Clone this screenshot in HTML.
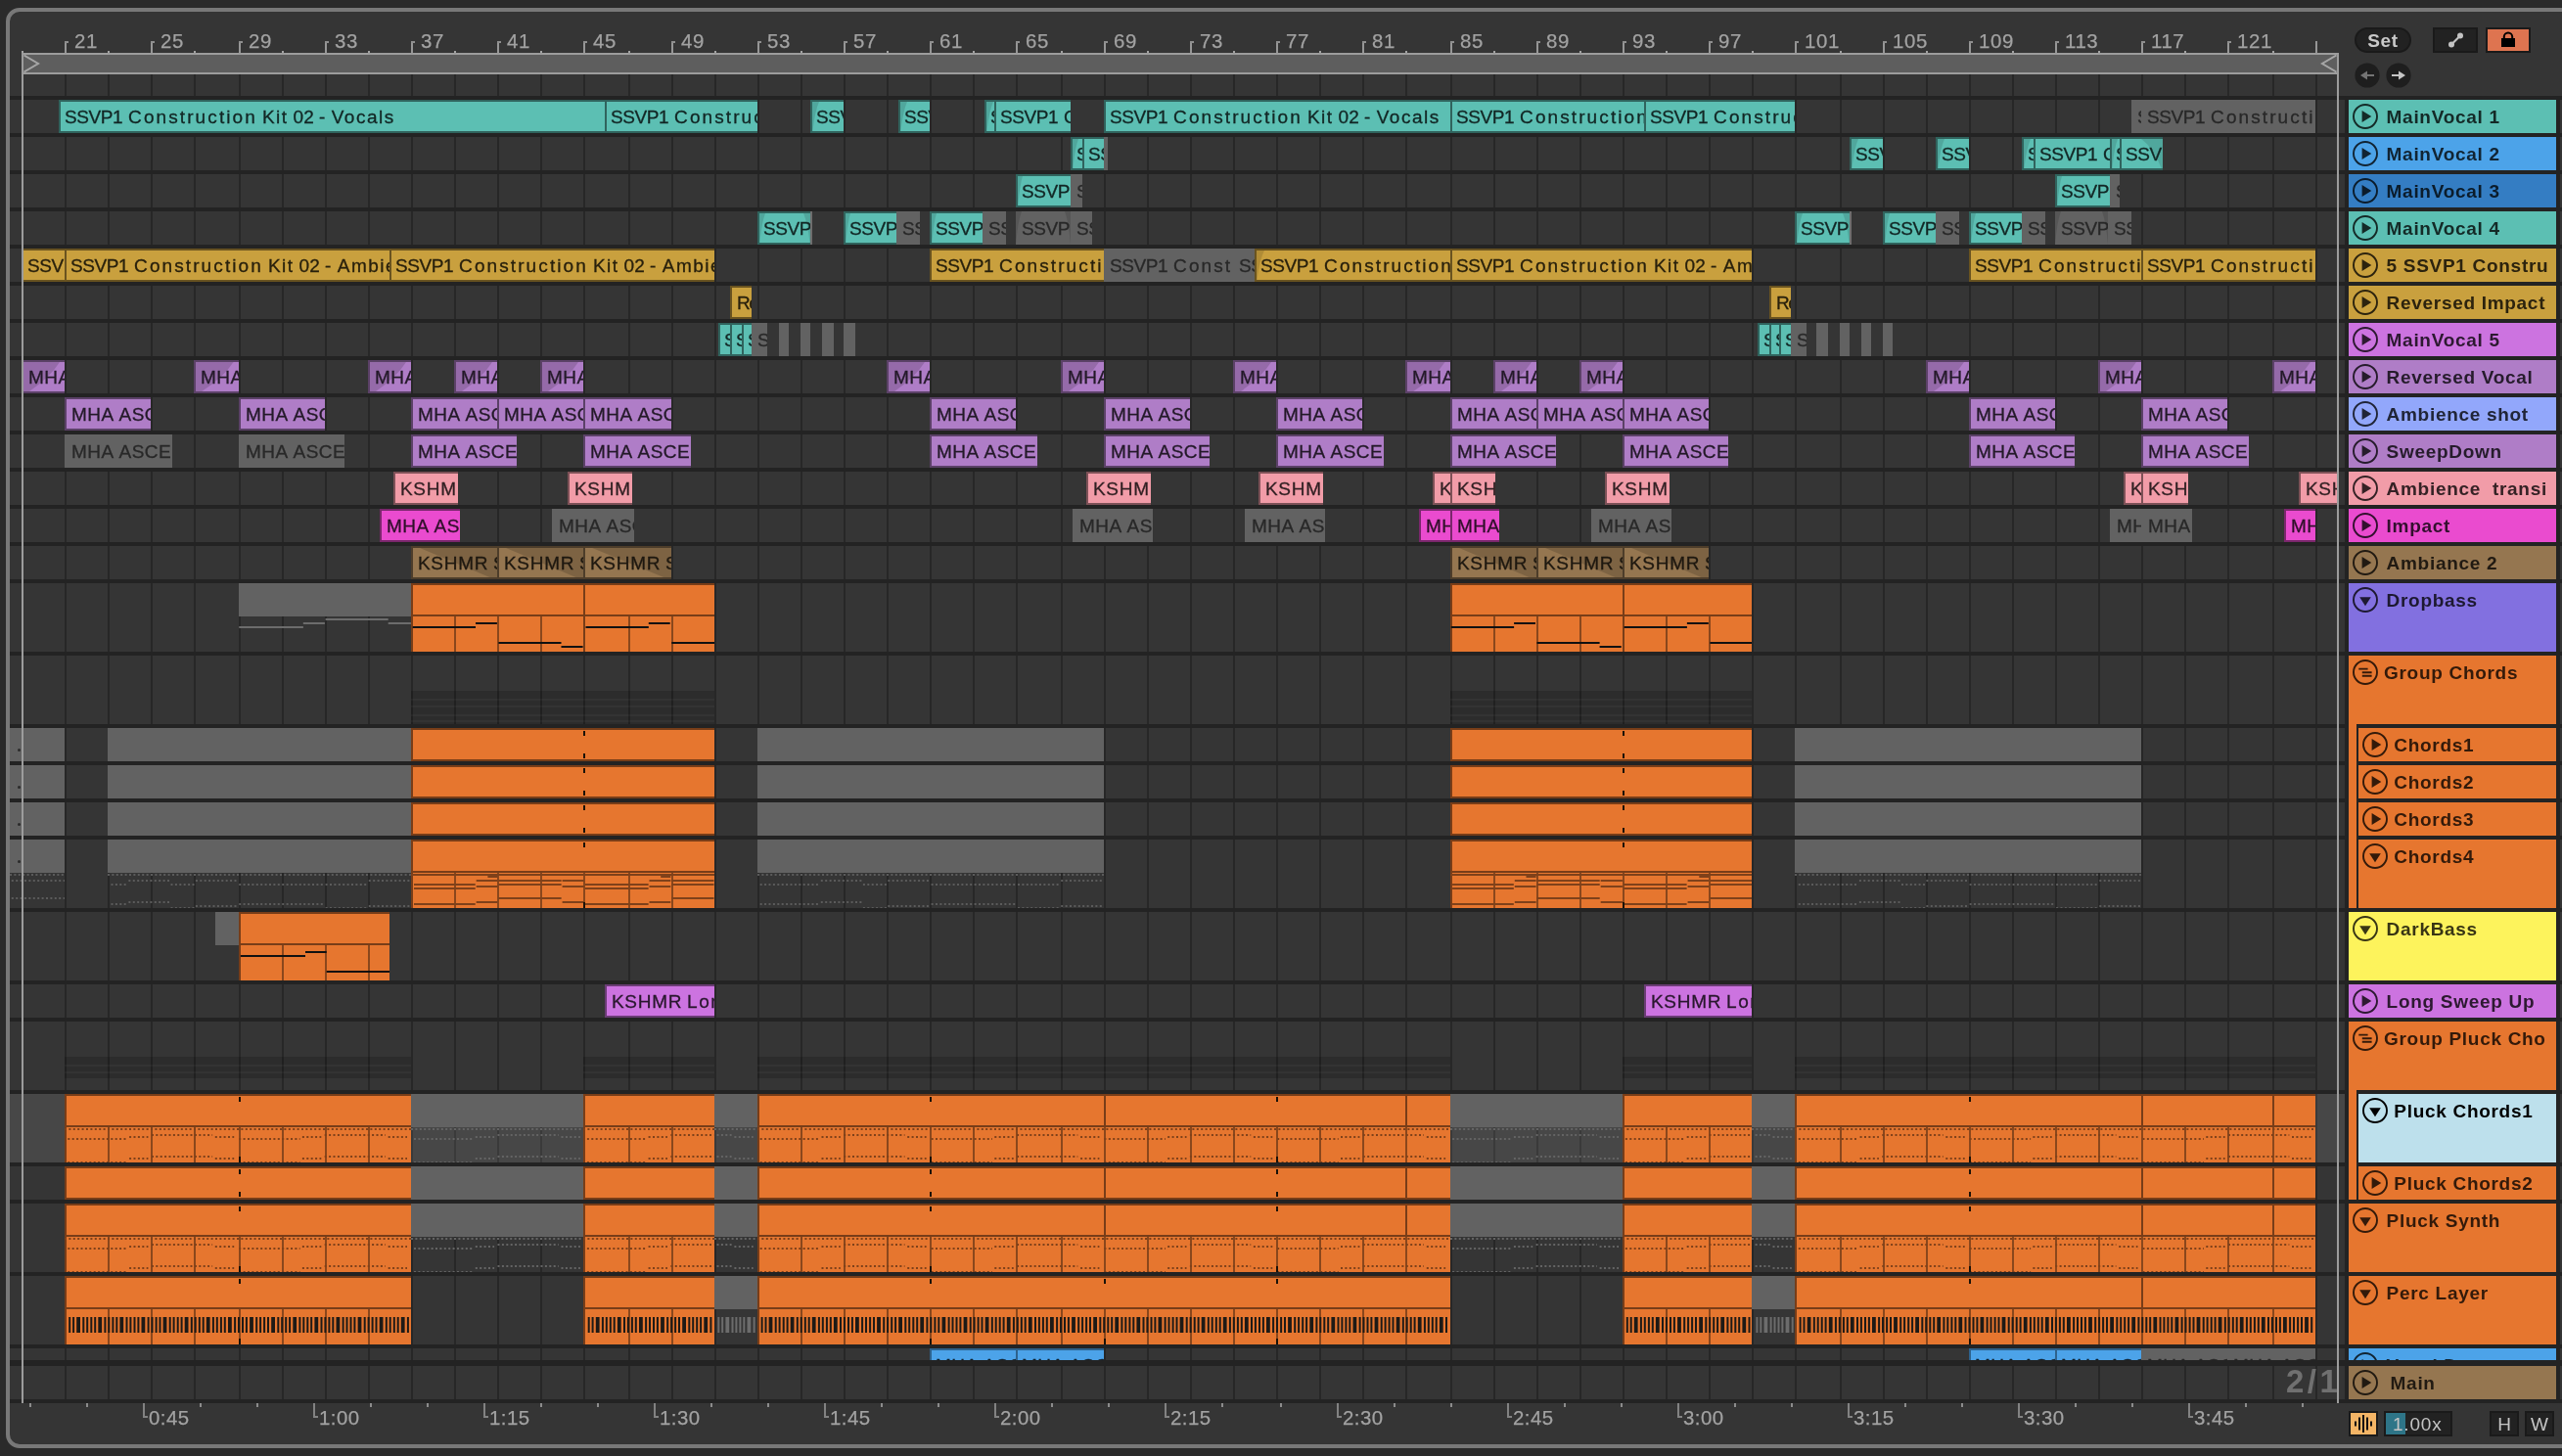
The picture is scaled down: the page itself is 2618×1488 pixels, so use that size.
<!DOCTYPE html>
<html><head><meta charset="utf-8"><title>Arrangement</title><style>
html,body{margin:0;padding:0;background:#2a2a2a;}
body{width:2618px;height:1488px;position:relative;overflow:hidden;font-family:"Liberation Sans",sans-serif;font-size:19px;}
body div,body span,body svg{position:absolute;box-sizing:border-box;}
#root{left:0;top:0;width:2618px;height:1488px;will-change:transform;}
#panel{left:6px;top:8px;width:2700px;height:1472px;border:4px solid #787878;border-radius:14px;background:#353535;}
.c{overflow:hidden;white-space:pre;z-index:2;}
.c span{top:0;font-size:19px;-webkit-text-stroke:0.3px currentColor;}
i{font-style:normal;position:static;}
.fd{top:0;}
.rl{color:#a2a2a2;font-size:20.4px;line-height:22px;letter-spacing:.6px;white-space:pre;-webkit-text-stroke:0.25px currentColor;}
.h{overflow:hidden;white-space:pre;font-weight:700;z-index:3;}
.h span{top:0;line-height:35px;letter-spacing:.7px;font-size:19px;}
.btn{background:#222222;border:2px solid #1a1a1a;overflow:hidden;z-index:3;}
.btn span{left:0;top:0;width:100%;text-align:center;line-height:23px;font-size:19px;}
</style></head><body>
<div id="root">
<div id="panel"></div>
<div style="left:66.0px;top:76.0px;width:2.0px;height:1354.0px;background:#272727;"></div>
<div style="left:110.0px;top:76.0px;width:2.0px;height:1354.0px;background:#272727;"></div>
<div style="left:154.0px;top:76.0px;width:2.0px;height:1354.0px;background:#272727;"></div>
<div style="left:198.0px;top:76.0px;width:2.0px;height:1354.0px;background:#272727;"></div>
<div style="left:244.0px;top:76.0px;width:2.0px;height:1354.0px;background:#272727;"></div>
<div style="left:288.0px;top:76.0px;width:2.0px;height:1354.0px;background:#272727;"></div>
<div style="left:332.0px;top:76.0px;width:2.0px;height:1354.0px;background:#272727;"></div>
<div style="left:376.0px;top:76.0px;width:2.0px;height:1354.0px;background:#272727;"></div>
<div style="left:420.0px;top:76.0px;width:2.0px;height:1354.0px;background:#272727;"></div>
<div style="left:464.0px;top:76.0px;width:2.0px;height:1354.0px;background:#272727;"></div>
<div style="left:508.0px;top:76.0px;width:2.0px;height:1354.0px;background:#272727;"></div>
<div style="left:552.0px;top:76.0px;width:2.0px;height:1354.0px;background:#272727;"></div>
<div style="left:596.0px;top:76.0px;width:2.0px;height:1354.0px;background:#272727;"></div>
<div style="left:642.0px;top:76.0px;width:2.0px;height:1354.0px;background:#272727;"></div>
<div style="left:686.0px;top:76.0px;width:2.0px;height:1354.0px;background:#272727;"></div>
<div style="left:730.0px;top:76.0px;width:2.0px;height:1354.0px;background:#272727;"></div>
<div style="left:774.0px;top:76.0px;width:2.0px;height:1354.0px;background:#272727;"></div>
<div style="left:818.0px;top:76.0px;width:2.0px;height:1354.0px;background:#272727;"></div>
<div style="left:862.0px;top:76.0px;width:2.0px;height:1354.0px;background:#272727;"></div>
<div style="left:906.0px;top:76.0px;width:2.0px;height:1354.0px;background:#272727;"></div>
<div style="left:950.0px;top:76.0px;width:2.0px;height:1354.0px;background:#272727;"></div>
<div style="left:994.0px;top:76.0px;width:2.0px;height:1354.0px;background:#272727;"></div>
<div style="left:1038.0px;top:76.0px;width:2.0px;height:1354.0px;background:#272727;"></div>
<div style="left:1084.0px;top:76.0px;width:2.0px;height:1354.0px;background:#272727;"></div>
<div style="left:1128.0px;top:76.0px;width:2.0px;height:1354.0px;background:#272727;"></div>
<div style="left:1172.0px;top:76.0px;width:2.0px;height:1354.0px;background:#272727;"></div>
<div style="left:1216.0px;top:76.0px;width:2.0px;height:1354.0px;background:#272727;"></div>
<div style="left:1260.0px;top:76.0px;width:2.0px;height:1354.0px;background:#272727;"></div>
<div style="left:1304.0px;top:76.0px;width:2.0px;height:1354.0px;background:#272727;"></div>
<div style="left:1348.0px;top:76.0px;width:2.0px;height:1354.0px;background:#272727;"></div>
<div style="left:1392.0px;top:76.0px;width:2.0px;height:1354.0px;background:#272727;"></div>
<div style="left:1436.0px;top:76.0px;width:2.0px;height:1354.0px;background:#272727;"></div>
<div style="left:1482.0px;top:76.0px;width:2.0px;height:1354.0px;background:#272727;"></div>
<div style="left:1526.0px;top:76.0px;width:2.0px;height:1354.0px;background:#272727;"></div>
<div style="left:1570.0px;top:76.0px;width:2.0px;height:1354.0px;background:#272727;"></div>
<div style="left:1614.0px;top:76.0px;width:2.0px;height:1354.0px;background:#272727;"></div>
<div style="left:1658.0px;top:76.0px;width:2.0px;height:1354.0px;background:#272727;"></div>
<div style="left:1702.0px;top:76.0px;width:2.0px;height:1354.0px;background:#272727;"></div>
<div style="left:1746.0px;top:76.0px;width:2.0px;height:1354.0px;background:#272727;"></div>
<div style="left:1790.0px;top:76.0px;width:2.0px;height:1354.0px;background:#272727;"></div>
<div style="left:1834.0px;top:76.0px;width:2.0px;height:1354.0px;background:#272727;"></div>
<div style="left:1880.0px;top:76.0px;width:2.0px;height:1354.0px;background:#272727;"></div>
<div style="left:1924.0px;top:76.0px;width:2.0px;height:1354.0px;background:#272727;"></div>
<div style="left:1968.0px;top:76.0px;width:2.0px;height:1354.0px;background:#272727;"></div>
<div style="left:2012.0px;top:76.0px;width:2.0px;height:1354.0px;background:#272727;"></div>
<div style="left:2056.0px;top:76.0px;width:2.0px;height:1354.0px;background:#272727;"></div>
<div style="left:2100.0px;top:76.0px;width:2.0px;height:1354.0px;background:#272727;"></div>
<div style="left:2144.0px;top:76.0px;width:2.0px;height:1354.0px;background:#272727;"></div>
<div style="left:2188.0px;top:76.0px;width:2.0px;height:1354.0px;background:#272727;"></div>
<div style="left:2232.0px;top:76.0px;width:2.0px;height:1354.0px;background:#272727;"></div>
<div style="left:2276.0px;top:76.0px;width:2.0px;height:1354.0px;background:#272727;"></div>
<div style="left:2322.0px;top:76.0px;width:2.0px;height:1354.0px;background:#272727;"></div>
<div style="left:2366.0px;top:76.0px;width:2.0px;height:1354.0px;background:#272727;"></div>
<div style="left:10.0px;top:1118.0px;width:2386.0px;height:70.0px;background:#474747;"></div>
<div style="left:66.0px;top:1118.0px;width:2.0px;height:70.0px;background:#3a3a3a;"></div>
<div style="left:110.0px;top:1118.0px;width:2.0px;height:70.0px;background:#3a3a3a;"></div>
<div style="left:154.0px;top:1118.0px;width:2.0px;height:70.0px;background:#3a3a3a;"></div>
<div style="left:198.0px;top:1118.0px;width:2.0px;height:70.0px;background:#3a3a3a;"></div>
<div style="left:244.0px;top:1118.0px;width:2.0px;height:70.0px;background:#3a3a3a;"></div>
<div style="left:288.0px;top:1118.0px;width:2.0px;height:70.0px;background:#3a3a3a;"></div>
<div style="left:332.0px;top:1118.0px;width:2.0px;height:70.0px;background:#3a3a3a;"></div>
<div style="left:376.0px;top:1118.0px;width:2.0px;height:70.0px;background:#3a3a3a;"></div>
<div style="left:420.0px;top:1118.0px;width:2.0px;height:70.0px;background:#3a3a3a;"></div>
<div style="left:464.0px;top:1118.0px;width:2.0px;height:70.0px;background:#3a3a3a;"></div>
<div style="left:508.0px;top:1118.0px;width:2.0px;height:70.0px;background:#3a3a3a;"></div>
<div style="left:552.0px;top:1118.0px;width:2.0px;height:70.0px;background:#3a3a3a;"></div>
<div style="left:596.0px;top:1118.0px;width:2.0px;height:70.0px;background:#3a3a3a;"></div>
<div style="left:642.0px;top:1118.0px;width:2.0px;height:70.0px;background:#3a3a3a;"></div>
<div style="left:686.0px;top:1118.0px;width:2.0px;height:70.0px;background:#3a3a3a;"></div>
<div style="left:730.0px;top:1118.0px;width:2.0px;height:70.0px;background:#3a3a3a;"></div>
<div style="left:774.0px;top:1118.0px;width:2.0px;height:70.0px;background:#3a3a3a;"></div>
<div style="left:818.0px;top:1118.0px;width:2.0px;height:70.0px;background:#3a3a3a;"></div>
<div style="left:862.0px;top:1118.0px;width:2.0px;height:70.0px;background:#3a3a3a;"></div>
<div style="left:906.0px;top:1118.0px;width:2.0px;height:70.0px;background:#3a3a3a;"></div>
<div style="left:950.0px;top:1118.0px;width:2.0px;height:70.0px;background:#3a3a3a;"></div>
<div style="left:994.0px;top:1118.0px;width:2.0px;height:70.0px;background:#3a3a3a;"></div>
<div style="left:1038.0px;top:1118.0px;width:2.0px;height:70.0px;background:#3a3a3a;"></div>
<div style="left:1084.0px;top:1118.0px;width:2.0px;height:70.0px;background:#3a3a3a;"></div>
<div style="left:1128.0px;top:1118.0px;width:2.0px;height:70.0px;background:#3a3a3a;"></div>
<div style="left:1172.0px;top:1118.0px;width:2.0px;height:70.0px;background:#3a3a3a;"></div>
<div style="left:1216.0px;top:1118.0px;width:2.0px;height:70.0px;background:#3a3a3a;"></div>
<div style="left:1260.0px;top:1118.0px;width:2.0px;height:70.0px;background:#3a3a3a;"></div>
<div style="left:1304.0px;top:1118.0px;width:2.0px;height:70.0px;background:#3a3a3a;"></div>
<div style="left:1348.0px;top:1118.0px;width:2.0px;height:70.0px;background:#3a3a3a;"></div>
<div style="left:1392.0px;top:1118.0px;width:2.0px;height:70.0px;background:#3a3a3a;"></div>
<div style="left:1436.0px;top:1118.0px;width:2.0px;height:70.0px;background:#3a3a3a;"></div>
<div style="left:1482.0px;top:1118.0px;width:2.0px;height:70.0px;background:#3a3a3a;"></div>
<div style="left:1526.0px;top:1118.0px;width:2.0px;height:70.0px;background:#3a3a3a;"></div>
<div style="left:1570.0px;top:1118.0px;width:2.0px;height:70.0px;background:#3a3a3a;"></div>
<div style="left:1614.0px;top:1118.0px;width:2.0px;height:70.0px;background:#3a3a3a;"></div>
<div style="left:1658.0px;top:1118.0px;width:2.0px;height:70.0px;background:#3a3a3a;"></div>
<div style="left:1702.0px;top:1118.0px;width:2.0px;height:70.0px;background:#3a3a3a;"></div>
<div style="left:1746.0px;top:1118.0px;width:2.0px;height:70.0px;background:#3a3a3a;"></div>
<div style="left:1790.0px;top:1118.0px;width:2.0px;height:70.0px;background:#3a3a3a;"></div>
<div style="left:1834.0px;top:1118.0px;width:2.0px;height:70.0px;background:#3a3a3a;"></div>
<div style="left:1880.0px;top:1118.0px;width:2.0px;height:70.0px;background:#3a3a3a;"></div>
<div style="left:1924.0px;top:1118.0px;width:2.0px;height:70.0px;background:#3a3a3a;"></div>
<div style="left:1968.0px;top:1118.0px;width:2.0px;height:70.0px;background:#3a3a3a;"></div>
<div style="left:2012.0px;top:1118.0px;width:2.0px;height:70.0px;background:#3a3a3a;"></div>
<div style="left:2056.0px;top:1118.0px;width:2.0px;height:70.0px;background:#3a3a3a;"></div>
<div style="left:2100.0px;top:1118.0px;width:2.0px;height:70.0px;background:#3a3a3a;"></div>
<div style="left:2144.0px;top:1118.0px;width:2.0px;height:70.0px;background:#3a3a3a;"></div>
<div style="left:2188.0px;top:1118.0px;width:2.0px;height:70.0px;background:#3a3a3a;"></div>
<div style="left:2232.0px;top:1118.0px;width:2.0px;height:70.0px;background:#3a3a3a;"></div>
<div style="left:2276.0px;top:1118.0px;width:2.0px;height:70.0px;background:#3a3a3a;"></div>
<div style="left:2322.0px;top:1118.0px;width:2.0px;height:70.0px;background:#3a3a3a;"></div>
<div style="left:2366.0px;top:1118.0px;width:2.0px;height:70.0px;background:#3a3a3a;"></div>
<div style="left:10.0px;top:98.0px;width:2608.0px;height:4.0px;background:#232323;"></div>
<div style="left:10.0px;top:136.0px;width:2608.0px;height:4.0px;background:#232323;"></div>
<div style="left:10.0px;top:174.0px;width:2608.0px;height:4.0px;background:#232323;"></div>
<div style="left:10.0px;top:212.0px;width:2608.0px;height:4.0px;background:#232323;"></div>
<div style="left:10.0px;top:250.0px;width:2608.0px;height:4.0px;background:#232323;"></div>
<div style="left:10.0px;top:288.0px;width:2608.0px;height:4.0px;background:#232323;"></div>
<div style="left:10.0px;top:326.0px;width:2608.0px;height:4.0px;background:#232323;"></div>
<div style="left:10.0px;top:364.0px;width:2608.0px;height:4.0px;background:#232323;"></div>
<div style="left:10.0px;top:402.0px;width:2608.0px;height:4.0px;background:#232323;"></div>
<div style="left:10.0px;top:440.0px;width:2608.0px;height:4.0px;background:#232323;"></div>
<div style="left:10.0px;top:478.0px;width:2608.0px;height:4.0px;background:#232323;"></div>
<div style="left:10.0px;top:516.0px;width:2608.0px;height:4.0px;background:#232323;"></div>
<div style="left:10.0px;top:554.0px;width:2608.0px;height:4.0px;background:#232323;"></div>
<div style="left:10.0px;top:592.0px;width:2608.0px;height:4.0px;background:#232323;"></div>
<div style="left:10.0px;top:666.0px;width:2608.0px;height:4.0px;background:#232323;"></div>
<div style="left:10.0px;top:740.0px;width:2608.0px;height:4.0px;background:#232323;"></div>
<div style="left:10.0px;top:778.0px;width:2608.0px;height:4.0px;background:#232323;"></div>
<div style="left:10.0px;top:816.0px;width:2608.0px;height:4.0px;background:#232323;"></div>
<div style="left:10.0px;top:854.0px;width:2608.0px;height:4.0px;background:#232323;"></div>
<div style="left:10.0px;top:928.0px;width:2608.0px;height:4.0px;background:#232323;"></div>
<div style="left:10.0px;top:1002.0px;width:2608.0px;height:4.0px;background:#232323;"></div>
<div style="left:10.0px;top:1040.0px;width:2608.0px;height:4.0px;background:#232323;"></div>
<div style="left:10.0px;top:1114.0px;width:2608.0px;height:4.0px;background:#232323;"></div>
<div style="left:10.0px;top:1188.0px;width:2608.0px;height:4.0px;background:#232323;"></div>
<div style="left:10.0px;top:1226.0px;width:2608.0px;height:4.0px;background:#232323;"></div>
<div style="left:10.0px;top:1300.0px;width:2608.0px;height:4.0px;background:#232323;"></div>
<div style="left:10.0px;top:1374.0px;width:2608.0px;height:4.0px;background:#232323;"></div>
<div style="left:10.0px;top:1390.0px;width:2608.0px;height:6.0px;background:#232323;"></div>
<div style="left:10.0px;top:1430.0px;width:2608.0px;height:4.0px;background:#232323;"></div>
<div style="left:2396.0px;top:98.0px;width:4.0px;height:1336.0px;background:#232323;"></div>
<div style="left:2612.0px;top:98.0px;width:4.0px;height:1336.0px;background:#232323;"></div>
<div style="left:2390.0px;top:76.0px;width:6.0px;height:22.0px;background:#353535;"></div>
<div class="c" style="left:60px;top:102px;width:558px;height:34px;background:#5cbfb3;border-style:solid;border-color:#30635d;border-width:2px 0px 2px 2px;"><span style="left:4px;line-height:31px;color:#122624"><i style="letter-spacing:-0.45px">SSVP</i><i style="letter-spacing:0.6px">1</i><i style="letter-spacing:-0.3px"> </i><i style="letter-spacing:2.1px">Construction</i><i style="letter-spacing:-0.3px"> </i><i style="letter-spacing:1.5px">Kit</i><i style="letter-spacing:-0.3px"> </i><i style="letter-spacing:0.1px">02</i><i style="letter-spacing:-0.3px"> </i><i style="letter-spacing:1.5px">-</i><i style="letter-spacing:-0.3px"> </i><i style="letter-spacing:1.5px">Vocals</i></span></div>
<div class="c" style="left:618px;top:102px;width:156px;height:34px;background:#5cbfb3;border-style:solid;border-color:#30635d;border-width:2px 0px 2px 2px;"><span style="left:4px;line-height:31px;color:#122624"><i style="letter-spacing:-0.45px">SSVP</i><i style="letter-spacing:0.6px">1</i><i style="letter-spacing:-0.3px"> </i><i style="letter-spacing:2.1px">Construction</i><i style="letter-spacing:-0.3px"> </i><i style="letter-spacing:1.5px">Kit</i><i style="letter-spacing:-0.3px"> </i><i style="letter-spacing:0.1px">02</i><i style="letter-spacing:-0.3px"> </i><i style="letter-spacing:1.5px">-</i><i style="letter-spacing:-0.3px"> </i><i style="letter-spacing:1.5px">Vocals</i></span></div>
<div class="c" style="left:828px;top:102px;width:34px;height:34px;background:#5cbfb3;border-style:solid;border-color:#30635d;border-width:2px 0px 2px 2px;"><svg class="fd" style="left:0" width="7" height="34"><path d="M0 0H7Q2.4 10.2 0 34Z" fill="rgba(0,0,0,0.12)"/></svg><span style="left:4px;line-height:31px;color:#122624"><i style="letter-spacing:-0.45px">SSVP</i><i style="letter-spacing:0.6px">1</i><i style="letter-spacing:-0.3px"> </i><i style="letter-spacing:2.1px">Construction</i><i style="letter-spacing:-0.3px"> </i><i style="letter-spacing:1.5px">Kit</i><i style="letter-spacing:-0.3px"> </i><i style="letter-spacing:0.1px">02</i><i style="letter-spacing:-0.3px"> </i><i style="letter-spacing:1.5px">-</i><i style="letter-spacing:-0.3px"> </i><i style="letter-spacing:1.5px">Vocals</i></span></div>
<div class="c" style="left:918px;top:102px;width:32px;height:34px;background:#5cbfb3;border-style:solid;border-color:#30635d;border-width:2px 0px 2px 2px;"><svg class="fd" style="left:0" width="7" height="34"><path d="M0 0H7Q2.4 10.2 0 34Z" fill="rgba(0,0,0,0.12)"/></svg><span style="left:4px;line-height:31px;color:#122624"><i style="letter-spacing:-0.45px">SSVP</i><i style="letter-spacing:0.6px">1</i><i style="letter-spacing:-0.3px"> </i><i style="letter-spacing:2.1px">Construction</i><i style="letter-spacing:-0.3px"> </i><i style="letter-spacing:1.5px">Kit</i><i style="letter-spacing:-0.3px"> </i><i style="letter-spacing:0.1px">02</i><i style="letter-spacing:-0.3px"> </i><i style="letter-spacing:1.5px">-</i><i style="letter-spacing:-0.3px"> </i><i style="letter-spacing:1.5px">Vocals</i></span></div>
<div class="c" style="left:1006px;top:102px;width:10px;height:34px;background:#5cbfb3;border-style:solid;border-color:#30635d;border-width:2px 0px 2px 2px;"><svg class="fd" style="left:0" width="7" height="34"><path d="M0 0H7Q2.4 10.2 0 34Z" fill="rgba(0,0,0,0.12)"/></svg><span style="left:4px;line-height:31px;color:#122624"><i style="letter-spacing:-0.45px">SSVP</i><i style="letter-spacing:0.6px">1</i><i style="letter-spacing:-0.3px"> </i><i style="letter-spacing:2.1px">Construction</i><i style="letter-spacing:-0.3px"> </i><i style="letter-spacing:1.5px">Kit</i><i style="letter-spacing:-0.3px"> </i><i style="letter-spacing:0.1px">02</i><i style="letter-spacing:-0.3px"> </i><i style="letter-spacing:1.5px">-</i><i style="letter-spacing:-0.3px"> </i><i style="letter-spacing:1.5px">Vocals</i></span></div>
<div class="c" style="left:1016px;top:102px;width:78px;height:34px;background:#5cbfb3;border-style:solid;border-color:#30635d;border-width:2px 0px 2px 2px;"><span style="left:4px;line-height:31px;color:#122624"><i style="letter-spacing:-0.45px">SSVP</i><i style="letter-spacing:0.6px">1</i><i style="letter-spacing:-0.3px"> </i><i style="letter-spacing:2.1px">Construction</i><i style="letter-spacing:-0.3px"> </i><i style="letter-spacing:1.5px">Kit</i><i style="letter-spacing:-0.3px"> </i><i style="letter-spacing:0.1px">02</i><i style="letter-spacing:-0.3px"> </i><i style="letter-spacing:1.5px">-</i><i style="letter-spacing:-0.3px"> </i><i style="letter-spacing:1.5px">Vocals</i></span></div>
<div class="c" style="left:1128px;top:102px;width:354px;height:34px;background:#5cbfb3;border-style:solid;border-color:#30635d;border-width:2px 0px 2px 2px;"><span style="left:4px;line-height:31px;color:#122624"><i style="letter-spacing:-0.45px">SSVP</i><i style="letter-spacing:0.6px">1</i><i style="letter-spacing:-0.3px"> </i><i style="letter-spacing:2.1px">Construction</i><i style="letter-spacing:-0.3px"> </i><i style="letter-spacing:1.5px">Kit</i><i style="letter-spacing:-0.3px"> </i><i style="letter-spacing:0.1px">02</i><i style="letter-spacing:-0.3px"> </i><i style="letter-spacing:1.5px">-</i><i style="letter-spacing:-0.3px"> </i><i style="letter-spacing:1.5px">Vocals</i></span></div>
<div class="c" style="left:1482px;top:102px;width:198px;height:34px;background:#5cbfb3;border-style:solid;border-color:#30635d;border-width:2px 0px 2px 2px;"><span style="left:4px;line-height:31px;color:#122624"><i style="letter-spacing:-0.45px">SSVP</i><i style="letter-spacing:0.6px">1</i><i style="letter-spacing:-0.3px"> </i><i style="letter-spacing:2.1px">Construction</i><i style="letter-spacing:-0.3px"> </i><i style="letter-spacing:1.5px">Kit</i><i style="letter-spacing:-0.3px"> </i><i style="letter-spacing:0.1px">02</i><i style="letter-spacing:-0.3px"> </i><i style="letter-spacing:1.5px">-</i><i style="letter-spacing:-0.3px"> </i><i style="letter-spacing:1.5px">Vocals</i></span></div>
<div class="c" style="left:1680px;top:102px;width:154px;height:34px;background:#5cbfb3;border-style:solid;border-color:#30635d;border-width:2px 0px 2px 2px;"><span style="left:4px;line-height:31px;color:#122624"><i style="letter-spacing:-0.45px">SSVP</i><i style="letter-spacing:0.6px">1</i><i style="letter-spacing:-0.3px"> </i><i style="letter-spacing:2.1px">Construction</i><i style="letter-spacing:-0.3px"> </i><i style="letter-spacing:1.5px">Kit</i><i style="letter-spacing:-0.3px"> </i><i style="letter-spacing:0.1px">02</i><i style="letter-spacing:-0.3px"> </i><i style="letter-spacing:1.5px">-</i><i style="letter-spacing:-0.3px"> </i><i style="letter-spacing:1.5px">Vocals</i></span></div>
<div class="c" style="left:2178px;top:102px;width:10px;height:34px;background:#626262;"><span style="left:6px;line-height:35px;color:#282828"><i style="letter-spacing:-0.45px">SSVP</i><i style="letter-spacing:0.6px">1</i><i style="letter-spacing:-0.3px"> </i><i style="letter-spacing:2.1px">Construction</i><i style="letter-spacing:-0.3px"> </i><i style="letter-spacing:1.5px">Kit</i><i style="letter-spacing:-0.3px"> </i><i style="letter-spacing:0.1px">02</i><i style="letter-spacing:-0.3px"> </i><i style="letter-spacing:1.5px">-</i><i style="letter-spacing:-0.3px"> </i><i style="letter-spacing:1.5px">Vocals</i></span></div>
<div class="c" style="left:2188px;top:102px;width:178px;height:34px;background:#626262;"><span style="left:6px;line-height:35px;color:#282828"><i style="letter-spacing:-0.45px">SSVP</i><i style="letter-spacing:0.6px">1</i><i style="letter-spacing:-0.3px"> </i><i style="letter-spacing:2.1px">Construction</i><i style="letter-spacing:-0.3px"> </i><i style="letter-spacing:1.5px">Kit</i><i style="letter-spacing:-0.3px"> </i><i style="letter-spacing:0.1px">02</i><i style="letter-spacing:-0.3px"> </i><i style="letter-spacing:1.5px">-</i><i style="letter-spacing:-0.3px"> </i><i style="letter-spacing:1.5px">Vocals</i></span></div>
<div class="c" style="left:1094px;top:140px;width:12px;height:34px;background:#5cbfb3;border-style:solid;border-color:#30635d;border-width:2px 0px 2px 2px;"><svg class="fd" style="left:0" width="6" height="34"><path d="M0 0H6Q2.1 10.2 0 34Z" fill="rgba(0,0,0,0.12)"/></svg><span style="left:4px;line-height:31px;color:#122624"><i style="letter-spacing:-0.45px">SSVP</i><i style="letter-spacing:0.6px">1</i><i style="letter-spacing:-0.3px"> </i><i style="letter-spacing:2.1px">Construction</i><i style="letter-spacing:-0.3px"> </i><i style="letter-spacing:1.5px">Kit</i><i style="letter-spacing:-0.3px"> </i><i style="letter-spacing:0.1px">02</i><i style="letter-spacing:-0.3px"> </i><i style="letter-spacing:1.5px">-</i><i style="letter-spacing:-0.3px"> </i><i style="letter-spacing:1.5px">Vocals</i></span></div>
<div class="c" style="left:1106px;top:140px;width:22px;height:34px;background:#5cbfb3;border-style:solid;border-color:#30635d;border-width:2px 0px 2px 2px;"><span style="left:4px;line-height:31px;color:#122624"><i style="letter-spacing:-0.45px">SSVP</i><i style="letter-spacing:0.6px">1</i><i style="letter-spacing:-0.3px"> </i><i style="letter-spacing:2.1px">Construction</i><i style="letter-spacing:-0.3px"> </i><i style="letter-spacing:1.5px">Kit</i><i style="letter-spacing:-0.3px"> </i><i style="letter-spacing:0.1px">02</i><i style="letter-spacing:-0.3px"> </i><i style="letter-spacing:1.5px">-</i><i style="letter-spacing:-0.3px"> </i><i style="letter-spacing:1.5px">Vocals</i></span></div>
<div class="c" style="left:1128px;top:140px;width:4px;height:34px;background:#626262;"></div>
<div class="c" style="left:1890px;top:140px;width:34px;height:34px;background:#5cbfb3;border-style:solid;border-color:#30635d;border-width:2px 0px 2px 2px;"><svg class="fd" style="left:0" width="7" height="34"><path d="M0 0H7Q2.4 10.2 0 34Z" fill="rgba(0,0,0,0.12)"/></svg><span style="left:4px;line-height:31px;color:#122624"><i style="letter-spacing:-0.45px">SSVP</i><i style="letter-spacing:0.6px">1</i><i style="letter-spacing:-0.3px"> </i><i style="letter-spacing:2.1px">Construction</i><i style="letter-spacing:-0.3px"> </i><i style="letter-spacing:1.5px">Kit</i><i style="letter-spacing:-0.3px"> </i><i style="letter-spacing:0.1px">02</i><i style="letter-spacing:-0.3px"> </i><i style="letter-spacing:1.5px">-</i><i style="letter-spacing:-0.3px"> </i><i style="letter-spacing:1.5px">Vocals</i></span></div>
<div class="c" style="left:1978px;top:140px;width:34px;height:34px;background:#5cbfb3;border-style:solid;border-color:#30635d;border-width:2px 0px 2px 2px;"><svg class="fd" style="left:0" width="7" height="34"><path d="M0 0H7Q2.4 10.2 0 34Z" fill="rgba(0,0,0,0.12)"/></svg><span style="left:4px;line-height:31px;color:#122624"><i style="letter-spacing:-0.45px">SSVP</i><i style="letter-spacing:0.6px">1</i><i style="letter-spacing:-0.3px"> </i><i style="letter-spacing:2.1px">Construction</i><i style="letter-spacing:-0.3px"> </i><i style="letter-spacing:1.5px">Kit</i><i style="letter-spacing:-0.3px"> </i><i style="letter-spacing:0.1px">02</i><i style="letter-spacing:-0.3px"> </i><i style="letter-spacing:1.5px">-</i><i style="letter-spacing:-0.3px"> </i><i style="letter-spacing:1.5px">Vocals</i></span></div>
<div class="c" style="left:2066px;top:140px;width:12px;height:34px;background:#5cbfb3;border-style:solid;border-color:#30635d;border-width:2px 0px 2px 2px;"><svg class="fd" style="left:0" width="7" height="34"><path d="M0 0H7Q2.4 10.2 0 34Z" fill="rgba(0,0,0,0.12)"/></svg><span style="left:4px;line-height:31px;color:#122624"><i style="letter-spacing:-0.45px">SSVP</i><i style="letter-spacing:0.6px">1</i><i style="letter-spacing:-0.3px"> </i><i style="letter-spacing:2.1px">Construction</i><i style="letter-spacing:-0.3px"> </i><i style="letter-spacing:1.5px">Kit</i><i style="letter-spacing:-0.3px"> </i><i style="letter-spacing:0.1px">02</i><i style="letter-spacing:-0.3px"> </i><i style="letter-spacing:1.5px">-</i><i style="letter-spacing:-0.3px"> </i><i style="letter-spacing:1.5px">Vocals</i></span></div>
<div class="c" style="left:2078px;top:140px;width:78px;height:34px;background:#5cbfb3;border-style:solid;border-color:#30635d;border-width:2px 0px 2px 2px;"><span style="left:4px;line-height:31px;color:#122624"><i style="letter-spacing:-0.45px">SSVP</i><i style="letter-spacing:0.6px">1</i><i style="letter-spacing:-0.3px"> </i><i style="letter-spacing:2.1px">Construction</i><i style="letter-spacing:-0.3px"> </i><i style="letter-spacing:1.5px">Kit</i><i style="letter-spacing:-0.3px"> </i><i style="letter-spacing:0.1px">02</i><i style="letter-spacing:-0.3px"> </i><i style="letter-spacing:1.5px">-</i><i style="letter-spacing:-0.3px"> </i><i style="letter-spacing:1.5px">Vocals</i></span></div>
<div class="c" style="left:2156px;top:140px;width:10px;height:34px;background:#5cbfb3;border-style:solid;border-color:#30635d;border-width:2px 0px 2px 2px;"><svg class="fd" style="left:0" width="6" height="34"><path d="M0 0H6Q2.1 10.2 0 34Z" fill="rgba(0,0,0,0.12)"/></svg><span style="left:4px;line-height:31px;color:#122624"><i style="letter-spacing:-0.45px">SSVP</i><i style="letter-spacing:0.6px">1</i><i style="letter-spacing:-0.3px"> </i><i style="letter-spacing:2.1px">Construction</i><i style="letter-spacing:-0.3px"> </i><i style="letter-spacing:1.5px">Kit</i><i style="letter-spacing:-0.3px"> </i><i style="letter-spacing:0.1px">02</i><i style="letter-spacing:-0.3px"> </i><i style="letter-spacing:1.5px">-</i><i style="letter-spacing:-0.3px"> </i><i style="letter-spacing:1.5px">Vocals</i></span></div>
<div class="c" style="left:2166px;top:140px;width:44px;height:34px;background:#5cbfb3;border-style:solid;border-color:#30635d;border-width:2px 0px 2px 2px;"><svg class="fd" style="right:0" width="22" height="34"><path d="M22 0H0Q14.3 10.2 22 34Z" fill="rgba(0,0,0,0.12)"/></svg><span style="left:4px;line-height:31px;color:#122624"><i style="letter-spacing:-0.45px">SSVP</i><i style="letter-spacing:0.6px">1</i><i style="letter-spacing:-0.3px"> </i><i style="letter-spacing:2.1px">Construction</i><i style="letter-spacing:-0.3px"> </i><i style="letter-spacing:1.5px">Kit</i><i style="letter-spacing:-0.3px"> </i><i style="letter-spacing:0.1px">02</i><i style="letter-spacing:-0.3px"> </i><i style="letter-spacing:1.5px">-</i><i style="letter-spacing:-0.3px"> </i><i style="letter-spacing:1.5px">Vocals</i></span></div>
<div class="c" style="left:1038px;top:178px;width:56px;height:34px;background:#5cbfb3;border-style:solid;border-color:#30635d;border-width:2px 0px 2px 2px;"><svg class="fd" style="left:0" width="5" height="34"><path d="M0 0H5Q1.8 10.2 0 34Z" fill="rgba(0,0,0,0.12)"/></svg><span style="left:4px;line-height:31px;color:#122624"><i style="letter-spacing:-0.45px">SSVP</i><i style="letter-spacing:0.6px">1</i><i style="letter-spacing:-0.3px"> </i><i style="letter-spacing:2.1px">Construction</i><i style="letter-spacing:-0.3px"> </i><i style="letter-spacing:1.5px">Kit</i><i style="letter-spacing:-0.3px"> </i><i style="letter-spacing:0.1px">02</i><i style="letter-spacing:-0.3px"> </i><i style="letter-spacing:1.5px">-</i><i style="letter-spacing:-0.3px"> </i><i style="letter-spacing:1.5px">Vocals</i></span></div>
<div class="c" style="left:1094px;top:178px;width:12px;height:34px;background:#626262;"><span style="left:6px;line-height:35px;color:#282828"><i style="letter-spacing:-0.45px">SSVP</i><i style="letter-spacing:0.6px">1</i><i style="letter-spacing:-0.3px"> </i><i style="letter-spacing:2.1px">Construction</i><i style="letter-spacing:-0.3px"> </i><i style="letter-spacing:1.5px">Kit</i><i style="letter-spacing:-0.3px"> </i><i style="letter-spacing:0.1px">02</i><i style="letter-spacing:-0.3px"> </i><i style="letter-spacing:1.5px">-</i><i style="letter-spacing:-0.3px"> </i><i style="letter-spacing:1.5px">Vocals</i></span></div>
<div class="c" style="left:2100px;top:178px;width:56px;height:34px;background:#5cbfb3;border-style:solid;border-color:#30635d;border-width:2px 0px 2px 2px;"><svg class="fd" style="left:0" width="5" height="34"><path d="M0 0H5Q1.8 10.2 0 34Z" fill="rgba(0,0,0,0.12)"/></svg><span style="left:4px;line-height:31px;color:#122624"><i style="letter-spacing:-0.45px">SSVP</i><i style="letter-spacing:0.6px">1</i><i style="letter-spacing:-0.3px"> </i><i style="letter-spacing:2.1px">Construction</i><i style="letter-spacing:-0.3px"> </i><i style="letter-spacing:1.5px">Kit</i><i style="letter-spacing:-0.3px"> </i><i style="letter-spacing:0.1px">02</i><i style="letter-spacing:-0.3px"> </i><i style="letter-spacing:1.5px">-</i><i style="letter-spacing:-0.3px"> </i><i style="letter-spacing:1.5px">Vocals</i></span></div>
<div class="c" style="left:2156px;top:178px;width:10px;height:34px;background:#626262;"><span style="left:6px;line-height:35px;color:#282828"><i style="letter-spacing:-0.45px">SSVP</i><i style="letter-spacing:0.6px">1</i><i style="letter-spacing:-0.3px"> </i><i style="letter-spacing:2.1px">Construction</i><i style="letter-spacing:-0.3px"> </i><i style="letter-spacing:1.5px">Kit</i><i style="letter-spacing:-0.3px"> </i><i style="letter-spacing:0.1px">02</i><i style="letter-spacing:-0.3px"> </i><i style="letter-spacing:1.5px">-</i><i style="letter-spacing:-0.3px"> </i><i style="letter-spacing:1.5px">Vocals</i></span></div>
<div class="c" style="left:774px;top:216px;width:54px;height:34px;background:#5cbfb3;border-style:solid;border-color:#30635d;border-width:2px 0px 2px 2px;"><svg class="fd" style="left:0" width="6" height="34"><path d="M0 0H6Q2.1 10.2 0 34Z" fill="rgba(0,0,0,0.12)"/></svg><svg class="fd" style="right:0" width="7" height="34"><path d="M7 0H0Q4.5 10.2 7 34Z" fill="rgba(0,0,0,0.12)"/></svg><span style="left:4px;line-height:31px;color:#122624"><i style="letter-spacing:-0.45px">SSVP</i><i style="letter-spacing:0.6px">1</i><i style="letter-spacing:-0.3px"> </i><i style="letter-spacing:2.1px">Construction</i><i style="letter-spacing:-0.3px"> </i><i style="letter-spacing:1.5px">Kit</i><i style="letter-spacing:-0.3px"> </i><i style="letter-spacing:0.1px">02</i><i style="letter-spacing:-0.3px"> </i><i style="letter-spacing:1.5px">-</i><i style="letter-spacing:-0.3px"> </i><i style="letter-spacing:1.5px">Vocals</i></span></div>
<div style="left:828.0px;top:216.0px;width:2.0px;height:34.0px;background:#6e6e6e;"></div>
<div class="c" style="left:862px;top:216px;width:54px;height:34px;background:#5cbfb3;border-style:solid;border-color:#30635d;border-width:2px 0px 2px 2px;"><svg class="fd" style="left:0" width="5" height="34"><path d="M0 0H5Q1.8 10.2 0 34Z" fill="rgba(0,0,0,0.12)"/></svg><span style="left:4px;line-height:31px;color:#122624"><i style="letter-spacing:-0.45px">SSVP</i><i style="letter-spacing:0.6px">1</i><i style="letter-spacing:-0.3px"> </i><i style="letter-spacing:2.1px">Construction</i><i style="letter-spacing:-0.3px"> </i><i style="letter-spacing:1.5px">Kit</i><i style="letter-spacing:-0.3px"> </i><i style="letter-spacing:0.1px">02</i><i style="letter-spacing:-0.3px"> </i><i style="letter-spacing:1.5px">-</i><i style="letter-spacing:-0.3px"> </i><i style="letter-spacing:1.5px">Vocals</i></span></div>
<div class="c" style="left:916px;top:216px;width:24px;height:34px;background:#626262;"><span style="left:6px;line-height:35px;color:#282828"><i style="letter-spacing:-0.45px">SSVP</i><i style="letter-spacing:0.6px">1</i><i style="letter-spacing:-0.3px"> </i><i style="letter-spacing:2.1px">Construction</i><i style="letter-spacing:-0.3px"> </i><i style="letter-spacing:1.5px">Kit</i><i style="letter-spacing:-0.3px"> </i><i style="letter-spacing:0.1px">02</i><i style="letter-spacing:-0.3px"> </i><i style="letter-spacing:1.5px">-</i><i style="letter-spacing:-0.3px"> </i><i style="letter-spacing:1.5px">Vocals</i></span></div>
<div class="c" style="left:950px;top:216px;width:54px;height:34px;background:#5cbfb3;border-style:solid;border-color:#30635d;border-width:2px 0px 2px 2px;"><svg class="fd" style="left:0" width="5" height="34"><path d="M0 0H5Q1.8 10.2 0 34Z" fill="rgba(0,0,0,0.12)"/></svg><span style="left:4px;line-height:31px;color:#122624"><i style="letter-spacing:-0.45px">SSVP</i><i style="letter-spacing:0.6px">1</i><i style="letter-spacing:-0.3px"> </i><i style="letter-spacing:2.1px">Construction</i><i style="letter-spacing:-0.3px"> </i><i style="letter-spacing:1.5px">Kit</i><i style="letter-spacing:-0.3px"> </i><i style="letter-spacing:0.1px">02</i><i style="letter-spacing:-0.3px"> </i><i style="letter-spacing:1.5px">-</i><i style="letter-spacing:-0.3px"> </i><i style="letter-spacing:1.5px">Vocals</i></span></div>
<div class="c" style="left:1004px;top:216px;width:24px;height:34px;background:#626262;"><span style="left:6px;line-height:35px;color:#282828"><i style="letter-spacing:-0.45px">SSVP</i><i style="letter-spacing:0.6px">1</i><i style="letter-spacing:-0.3px"> </i><i style="letter-spacing:2.1px">Construction</i><i style="letter-spacing:-0.3px"> </i><i style="letter-spacing:1.5px">Kit</i><i style="letter-spacing:-0.3px"> </i><i style="letter-spacing:0.1px">02</i><i style="letter-spacing:-0.3px"> </i><i style="letter-spacing:1.5px">-</i><i style="letter-spacing:-0.3px"> </i><i style="letter-spacing:1.5px">Vocals</i></span></div>
<div class="c" style="left:1038px;top:216px;width:56px;height:34px;background:#626262;"><svg class="fd" style="left:0" width="6" height="34"><path d="M0 0H6Q2.1 10.2 0 34Z" fill="rgba(0,0,0,0.12)"/></svg><svg class="fd" style="right:0" width="6" height="34"><path d="M6 0H0Q3.9 10.2 6 34Z" fill="rgba(0,0,0,0.12)"/></svg><span style="left:6px;line-height:35px;color:#282828"><i style="letter-spacing:-0.45px">SSVP</i><i style="letter-spacing:0.6px">1</i><i style="letter-spacing:-0.3px"> </i><i style="letter-spacing:2.1px">Construction</i><i style="letter-spacing:-0.3px"> </i><i style="letter-spacing:1.5px">Kit</i><i style="letter-spacing:-0.3px"> </i><i style="letter-spacing:0.1px">02</i><i style="letter-spacing:-0.3px"> </i><i style="letter-spacing:1.5px">-</i><i style="letter-spacing:-0.3px"> </i><i style="letter-spacing:1.5px">Vocals</i></span></div>
<div class="c" style="left:1094px;top:216px;width:22px;height:34px;background:#626262;"><span style="left:6px;line-height:35px;color:#282828"><i style="letter-spacing:-0.45px">SSVP</i><i style="letter-spacing:0.6px">1</i><i style="letter-spacing:-0.3px"> </i><i style="letter-spacing:2.1px">Construction</i><i style="letter-spacing:-0.3px"> </i><i style="letter-spacing:1.5px">Kit</i><i style="letter-spacing:-0.3px"> </i><i style="letter-spacing:0.1px">02</i><i style="letter-spacing:-0.3px"> </i><i style="letter-spacing:1.5px">-</i><i style="letter-spacing:-0.3px"> </i><i style="letter-spacing:1.5px">Vocals</i></span></div>
<div class="c" style="left:1834px;top:216px;width:56px;height:34px;background:#5cbfb3;border-style:solid;border-color:#30635d;border-width:2px 0px 2px 2px;"><svg class="fd" style="left:0" width="6" height="34"><path d="M0 0H6Q2.1 10.2 0 34Z" fill="rgba(0,0,0,0.12)"/></svg><svg class="fd" style="right:0" width="7" height="34"><path d="M7 0H0Q4.5 10.2 7 34Z" fill="rgba(0,0,0,0.12)"/></svg><span style="left:4px;line-height:31px;color:#122624"><i style="letter-spacing:-0.45px">SSVP</i><i style="letter-spacing:0.6px">1</i><i style="letter-spacing:-0.3px"> </i><i style="letter-spacing:2.1px">Construction</i><i style="letter-spacing:-0.3px"> </i><i style="letter-spacing:1.5px">Kit</i><i style="letter-spacing:-0.3px"> </i><i style="letter-spacing:0.1px">02</i><i style="letter-spacing:-0.3px"> </i><i style="letter-spacing:1.5px">-</i><i style="letter-spacing:-0.3px"> </i><i style="letter-spacing:1.5px">Vocals</i></span></div>
<div style="left:1890.0px;top:216.0px;width:2.0px;height:34.0px;background:#6e6e6e;"></div>
<div class="c" style="left:1924px;top:216px;width:54px;height:34px;background:#5cbfb3;border-style:solid;border-color:#30635d;border-width:2px 0px 2px 2px;"><svg class="fd" style="left:0" width="5" height="34"><path d="M0 0H5Q1.8 10.2 0 34Z" fill="rgba(0,0,0,0.12)"/></svg><span style="left:4px;line-height:31px;color:#122624"><i style="letter-spacing:-0.45px">SSVP</i><i style="letter-spacing:0.6px">1</i><i style="letter-spacing:-0.3px"> </i><i style="letter-spacing:2.1px">Construction</i><i style="letter-spacing:-0.3px"> </i><i style="letter-spacing:1.5px">Kit</i><i style="letter-spacing:-0.3px"> </i><i style="letter-spacing:0.1px">02</i><i style="letter-spacing:-0.3px"> </i><i style="letter-spacing:1.5px">-</i><i style="letter-spacing:-0.3px"> </i><i style="letter-spacing:1.5px">Vocals</i></span></div>
<div class="c" style="left:1978px;top:216px;width:24px;height:34px;background:#626262;"><span style="left:6px;line-height:35px;color:#282828"><i style="letter-spacing:-0.45px">SSVP</i><i style="letter-spacing:0.6px">1</i><i style="letter-spacing:-0.3px"> </i><i style="letter-spacing:2.1px">Construction</i><i style="letter-spacing:-0.3px"> </i><i style="letter-spacing:1.5px">Kit</i><i style="letter-spacing:-0.3px"> </i><i style="letter-spacing:0.1px">02</i><i style="letter-spacing:-0.3px"> </i><i style="letter-spacing:1.5px">-</i><i style="letter-spacing:-0.3px"> </i><i style="letter-spacing:1.5px">Vocals</i></span></div>
<div class="c" style="left:2012px;top:216px;width:54px;height:34px;background:#5cbfb3;border-style:solid;border-color:#30635d;border-width:2px 0px 2px 2px;"><svg class="fd" style="left:0" width="5" height="34"><path d="M0 0H5Q1.8 10.2 0 34Z" fill="rgba(0,0,0,0.12)"/></svg><span style="left:4px;line-height:31px;color:#122624"><i style="letter-spacing:-0.45px">SSVP</i><i style="letter-spacing:0.6px">1</i><i style="letter-spacing:-0.3px"> </i><i style="letter-spacing:2.1px">Construction</i><i style="letter-spacing:-0.3px"> </i><i style="letter-spacing:1.5px">Kit</i><i style="letter-spacing:-0.3px"> </i><i style="letter-spacing:0.1px">02</i><i style="letter-spacing:-0.3px"> </i><i style="letter-spacing:1.5px">-</i><i style="letter-spacing:-0.3px"> </i><i style="letter-spacing:1.5px">Vocals</i></span></div>
<div class="c" style="left:2066px;top:216px;width:24px;height:34px;background:#626262;"><span style="left:6px;line-height:35px;color:#282828"><i style="letter-spacing:-0.45px">SSVP</i><i style="letter-spacing:0.6px">1</i><i style="letter-spacing:-0.3px"> </i><i style="letter-spacing:2.1px">Construction</i><i style="letter-spacing:-0.3px"> </i><i style="letter-spacing:1.5px">Kit</i><i style="letter-spacing:-0.3px"> </i><i style="letter-spacing:0.1px">02</i><i style="letter-spacing:-0.3px"> </i><i style="letter-spacing:1.5px">-</i><i style="letter-spacing:-0.3px"> </i><i style="letter-spacing:1.5px">Vocals</i></span></div>
<div class="c" style="left:2100px;top:216px;width:54px;height:34px;background:#626262;"><svg class="fd" style="left:0" width="6" height="34"><path d="M0 0H6Q2.1 10.2 0 34Z" fill="rgba(0,0,0,0.12)"/></svg><svg class="fd" style="right:0" width="6" height="34"><path d="M6 0H0Q3.9 10.2 6 34Z" fill="rgba(0,0,0,0.12)"/></svg><span style="left:6px;line-height:35px;color:#282828"><i style="letter-spacing:-0.45px">SSVP</i><i style="letter-spacing:0.6px">1</i><i style="letter-spacing:-0.3px"> </i><i style="letter-spacing:2.1px">Construction</i><i style="letter-spacing:-0.3px"> </i><i style="letter-spacing:1.5px">Kit</i><i style="letter-spacing:-0.3px"> </i><i style="letter-spacing:0.1px">02</i><i style="letter-spacing:-0.3px"> </i><i style="letter-spacing:1.5px">-</i><i style="letter-spacing:-0.3px"> </i><i style="letter-spacing:1.5px">Vocals</i></span></div>
<div class="c" style="left:2154px;top:216px;width:24px;height:34px;background:#626262;"><span style="left:6px;line-height:35px;color:#282828"><i style="letter-spacing:-0.45px">SSVP</i><i style="letter-spacing:0.6px">1</i><i style="letter-spacing:-0.3px"> </i><i style="letter-spacing:2.1px">Construction</i><i style="letter-spacing:-0.3px"> </i><i style="letter-spacing:1.5px">Kit</i><i style="letter-spacing:-0.3px"> </i><i style="letter-spacing:0.1px">02</i><i style="letter-spacing:-0.3px"> </i><i style="letter-spacing:1.5px">-</i><i style="letter-spacing:-0.3px"> </i><i style="letter-spacing:1.5px">Vocals</i></span></div>
<div class="c" style="left:22px;top:254px;width:44px;height:34px;background:#c9a03e;border-style:solid;border-color:#695320;border-width:2px 0px 2px 2px;"><span style="left:4px;line-height:31px;color:#28200c"><i style="letter-spacing:-0.45px">SSVP</i><i style="letter-spacing:0.6px">1</i><i style="letter-spacing:-0.3px"> </i><i style="letter-spacing:2.1px">Construction</i><i style="letter-spacing:-0.3px"> </i><i style="letter-spacing:1.5px">Kit</i><i style="letter-spacing:-0.3px"> </i><i style="letter-spacing:0.1px">02</i><i style="letter-spacing:-0.3px"> </i><i style="letter-spacing:1.5px">-</i><i style="letter-spacing:-0.3px"> </i><i style="letter-spacing:1.5px">Ambience</i></span></div>
<div class="c" style="left:66px;top:254px;width:332px;height:34px;background:#c9a03e;border-style:solid;border-color:#695320;border-width:2px 0px 2px 2px;"><span style="left:4px;line-height:31px;color:#28200c"><i style="letter-spacing:-0.45px">SSVP</i><i style="letter-spacing:0.6px">1</i><i style="letter-spacing:-0.3px"> </i><i style="letter-spacing:2.1px">Construction</i><i style="letter-spacing:-0.3px"> </i><i style="letter-spacing:1.5px">Kit</i><i style="letter-spacing:-0.3px"> </i><i style="letter-spacing:0.1px">02</i><i style="letter-spacing:-0.3px"> </i><i style="letter-spacing:1.5px">-</i><i style="letter-spacing:-0.3px"> </i><i style="letter-spacing:1.5px">Ambience</i></span></div>
<div class="c" style="left:398px;top:254px;width:332px;height:34px;background:#c9a03e;border-style:solid;border-color:#695320;border-width:2px 0px 2px 2px;"><span style="left:4px;line-height:31px;color:#28200c"><i style="letter-spacing:-0.45px">SSVP</i><i style="letter-spacing:0.6px">1</i><i style="letter-spacing:-0.3px"> </i><i style="letter-spacing:2.1px">Construction</i><i style="letter-spacing:-0.3px"> </i><i style="letter-spacing:1.5px">Kit</i><i style="letter-spacing:-0.3px"> </i><i style="letter-spacing:0.1px">02</i><i style="letter-spacing:-0.3px"> </i><i style="letter-spacing:1.5px">-</i><i style="letter-spacing:-0.3px"> </i><i style="letter-spacing:1.5px">Ambience</i></span></div>
<div class="c" style="left:950px;top:254px;width:178px;height:34px;background:#c9a03e;border-style:solid;border-color:#695320;border-width:2px 0px 2px 2px;"><span style="left:4px;line-height:31px;color:#28200c"><i style="letter-spacing:-0.45px">SSVP</i><i style="letter-spacing:0.6px">1</i><i style="letter-spacing:-0.3px"> </i><i style="letter-spacing:2.1px">Construction</i><i style="letter-spacing:-0.3px"> </i><i style="letter-spacing:1.5px">Kit</i><i style="letter-spacing:-0.3px"> </i><i style="letter-spacing:0.1px">02</i><i style="letter-spacing:-0.3px"> </i><i style="letter-spacing:1.5px">-</i><i style="letter-spacing:-0.3px"> </i><i style="letter-spacing:1.5px">Ambience</i></span></div>
<div class="c" style="left:1128px;top:254px;width:132px;height:34px;background:#626262;"><span style="left:6px;line-height:35px;color:#282828"><i style="letter-spacing:-0.45px">SSVP</i><i style="letter-spacing:0.6px">1</i><i style="letter-spacing:-0.3px"> </i><i style="letter-spacing:2.1px">Construction</i><i style="letter-spacing:-0.3px"> </i><i style="letter-spacing:1.5px">Kit</i><i style="letter-spacing:-0.3px"> </i><i style="letter-spacing:0.1px">02</i><i style="letter-spacing:-0.3px"> </i><i style="letter-spacing:1.5px">-</i><i style="letter-spacing:-0.3px"> </i><i style="letter-spacing:1.5px">Ambience</i></span></div>
<div class="c" style="left:1260px;top:254px;width:22px;height:34px;background:#626262;"><span style="left:6px;line-height:35px;color:#282828"><i style="letter-spacing:-0.45px">SSVP</i><i style="letter-spacing:0.6px">1</i><i style="letter-spacing:-0.3px"> </i><i style="letter-spacing:2.1px">Construction</i><i style="letter-spacing:-0.3px"> </i><i style="letter-spacing:1.5px">Kit</i><i style="letter-spacing:-0.3px"> </i><i style="letter-spacing:0.1px">02</i><i style="letter-spacing:-0.3px"> </i><i style="letter-spacing:1.5px">-</i><i style="letter-spacing:-0.3px"> </i><i style="letter-spacing:1.5px">Ambience</i></span></div>
<div class="c" style="left:1282px;top:254px;width:200px;height:34px;background:#c9a03e;border-style:solid;border-color:#695320;border-width:2px 0px 2px 2px;"><svg class="fd" style="left:0" width="8" height="34"><path d="M0 0H8Q2.8 10.2 0 34Z" fill="rgba(0,0,0,0.12)"/></svg><span style="left:4px;line-height:31px;color:#28200c"><i style="letter-spacing:-0.45px">SSVP</i><i style="letter-spacing:0.6px">1</i><i style="letter-spacing:-0.3px"> </i><i style="letter-spacing:2.1px">Construction</i><i style="letter-spacing:-0.3px"> </i><i style="letter-spacing:1.5px">Kit</i><i style="letter-spacing:-0.3px"> </i><i style="letter-spacing:0.1px">02</i><i style="letter-spacing:-0.3px"> </i><i style="letter-spacing:1.5px">-</i><i style="letter-spacing:-0.3px"> </i><i style="letter-spacing:1.5px">Ambience</i></span></div>
<div class="c" style="left:1482px;top:254px;width:308px;height:34px;background:#c9a03e;border-style:solid;border-color:#695320;border-width:2px 0px 2px 2px;"><span style="left:4px;line-height:31px;color:#28200c"><i style="letter-spacing:-0.45px">SSVP</i><i style="letter-spacing:0.6px">1</i><i style="letter-spacing:-0.3px"> </i><i style="letter-spacing:2.1px">Construction</i><i style="letter-spacing:-0.3px"> </i><i style="letter-spacing:1.5px">Kit</i><i style="letter-spacing:-0.3px"> </i><i style="letter-spacing:0.1px">02</i><i style="letter-spacing:-0.3px"> </i><i style="letter-spacing:1.5px">-</i><i style="letter-spacing:-0.3px"> </i><i style="letter-spacing:1.5px">Ambience</i></span></div>
<div class="c" style="left:2012px;top:254px;width:176px;height:34px;background:#c9a03e;border-style:solid;border-color:#695320;border-width:2px 0px 2px 2px;"><span style="left:4px;line-height:31px;color:#28200c"><i style="letter-spacing:-0.45px">SSVP</i><i style="letter-spacing:0.6px">1</i><i style="letter-spacing:-0.3px"> </i><i style="letter-spacing:2.1px">Construction</i><i style="letter-spacing:-0.3px"> </i><i style="letter-spacing:1.5px">Kit</i><i style="letter-spacing:-0.3px"> </i><i style="letter-spacing:0.1px">02</i><i style="letter-spacing:-0.3px"> </i><i style="letter-spacing:1.5px">-</i><i style="letter-spacing:-0.3px"> </i><i style="letter-spacing:1.5px">Ambience</i></span></div>
<div class="c" style="left:2188px;top:254px;width:178px;height:34px;background:#c9a03e;border-style:solid;border-color:#695320;border-width:2px 0px 2px 2px;"><span style="left:4px;line-height:31px;color:#28200c"><i style="letter-spacing:-0.45px">SSVP</i><i style="letter-spacing:0.6px">1</i><i style="letter-spacing:-0.3px"> </i><i style="letter-spacing:2.1px">Construction</i><i style="letter-spacing:-0.3px"> </i><i style="letter-spacing:1.5px">Kit</i><i style="letter-spacing:-0.3px"> </i><i style="letter-spacing:0.1px">02</i><i style="letter-spacing:-0.3px"> </i><i style="letter-spacing:1.5px">-</i><i style="letter-spacing:-0.3px"> </i><i style="letter-spacing:1.5px">Ambience</i></span></div>
<div class="c" style="left:746px;top:292px;width:22px;height:34px;background:#c9a03e;border-style:solid;border-color:#695320;border-width:2px 0px 2px 2px;"><span style="left:5px;line-height:31px;color:#28200c"><i style="letter-spacing:-1.6px">R</i><i style="letter-spacing:1px">eversed</i></span></div>
<div class="c" style="left:1808px;top:292px;width:22px;height:34px;background:#c9a03e;border-style:solid;border-color:#695320;border-width:2px 0px 2px 2px;"><span style="left:5px;line-height:31px;color:#28200c"><i style="letter-spacing:-1.6px">R</i><i style="letter-spacing:1px">eversed</i></span></div>
<div class="c" style="left:734px;top:330px;width:12px;height:34px;background:#5cbfb3;border-style:solid;border-color:#30635d;border-width:2px 0px 2px 2px;"><span style="left:4px;line-height:31px;color:#122624"><i style="letter-spacing:-0.45px">SSVP</i><i style="letter-spacing:0.6px">1</i></span></div>
<div class="c" style="left:746px;top:330px;width:12px;height:34px;background:#5cbfb3;border-style:solid;border-color:#30635d;border-width:2px 0px 2px 2px;"><span style="left:4px;line-height:31px;color:#122624"><i style="letter-spacing:-0.45px">SSVP</i><i style="letter-spacing:0.6px">1</i></span></div>
<div class="c" style="left:758px;top:330px;width:10px;height:34px;background:#5cbfb3;border-style:solid;border-color:#30635d;border-width:2px 0px 2px 2px;"><span style="left:4px;line-height:31px;color:#122624"><i style="letter-spacing:-0.45px">SSVP</i><i style="letter-spacing:0.6px">1</i></span></div>
<div class="c" style="left:768px;top:330px;width:16px;height:34px;background:#626262;"><span style="left:6px;line-height:35px;color:#282828"><i style="letter-spacing:-0.45px">SSVP</i><i style="letter-spacing:0.6px">1</i></span></div>
<div class="c" style="left:796px;top:330px;width:10px;height:34px;background:#626262;"></div>
<div class="c" style="left:818px;top:330px;width:10px;height:34px;background:#626262;"></div>
<div class="c" style="left:840px;top:330px;width:12px;height:34px;background:#626262;"></div>
<div class="c" style="left:862px;top:330px;width:12px;height:34px;background:#626262;"></div>
<div class="c" style="left:1796px;top:330px;width:12px;height:34px;background:#5cbfb3;border-style:solid;border-color:#30635d;border-width:2px 0px 2px 2px;"><span style="left:4px;line-height:31px;color:#122624"><i style="letter-spacing:-0.45px">SSVP</i><i style="letter-spacing:0.6px">1</i></span></div>
<div class="c" style="left:1808px;top:330px;width:10px;height:34px;background:#5cbfb3;border-style:solid;border-color:#30635d;border-width:2px 0px 2px 2px;"><span style="left:4px;line-height:31px;color:#122624"><i style="letter-spacing:-0.45px">SSVP</i><i style="letter-spacing:0.6px">1</i></span></div>
<div class="c" style="left:1818px;top:330px;width:12px;height:34px;background:#5cbfb3;border-style:solid;border-color:#30635d;border-width:2px 0px 2px 2px;"><span style="left:4px;line-height:31px;color:#122624"><i style="letter-spacing:-0.45px">SSVP</i><i style="letter-spacing:0.6px">1</i></span></div>
<div class="c" style="left:1830px;top:330px;width:16px;height:34px;background:#626262;"><span style="left:6px;line-height:35px;color:#282828"><i style="letter-spacing:-0.45px">SSVP</i><i style="letter-spacing:0.6px">1</i></span></div>
<div class="c" style="left:1856px;top:330px;width:12px;height:34px;background:#626262;"></div>
<div class="c" style="left:1880px;top:330px;width:10px;height:34px;background:#626262;"></div>
<div class="c" style="left:1902px;top:330px;width:10px;height:34px;background:#626262;"></div>
<div class="c" style="left:1924px;top:330px;width:10px;height:34px;background:#626262;"></div>
<div class="c" style="left:22px;top:368px;width:44px;height:34px;background:#af7dc7;border-style:solid;border-color:#5b4167;border-width:2px 0px 2px 2px;"><svg class="fd" style="left:0" width="44" height="34"><path d="M0 0H37.0Q26.4 17.0 0 34Z" fill="rgba(0,0,0,0.15)"/></svg><span style="left:5px;line-height:31px;color:#231928"><i style="letter-spacing:0.45px">MHA</i><i style="letter-spacing:-0.3px"> </i><i style="letter-spacing:0.45px">ASCEND</i></span></div>
<div class="c" style="left:198px;top:368px;width:46px;height:34px;background:#af7dc7;border-style:solid;border-color:#5b4167;border-width:2px 0px 2px 2px;"><svg class="fd" style="left:0" width="46" height="34"><path d="M0 0H38.6Q27.6 17.0 0 34Z" fill="rgba(0,0,0,0.15)"/></svg><span style="left:5px;line-height:31px;color:#231928"><i style="letter-spacing:0.45px">MHA</i><i style="letter-spacing:-0.3px"> </i><i style="letter-spacing:0.45px">ASCEND</i></span></div>
<div class="c" style="left:376px;top:368px;width:44px;height:34px;background:#af7dc7;border-style:solid;border-color:#5b4167;border-width:2px 0px 2px 2px;"><svg class="fd" style="left:0" width="44" height="34"><path d="M0 0H37.0Q26.4 17.0 0 34Z" fill="rgba(0,0,0,0.15)"/></svg><span style="left:5px;line-height:31px;color:#231928"><i style="letter-spacing:0.45px">MHA</i><i style="letter-spacing:-0.3px"> </i><i style="letter-spacing:0.45px">ASCEND</i></span></div>
<div class="c" style="left:464px;top:368px;width:44px;height:34px;background:#af7dc7;border-style:solid;border-color:#5b4167;border-width:2px 0px 2px 2px;"><svg class="fd" style="left:0" width="44" height="34"><path d="M0 0H37.0Q26.4 17.0 0 34Z" fill="rgba(0,0,0,0.15)"/></svg><span style="left:5px;line-height:31px;color:#231928"><i style="letter-spacing:0.45px">MHA</i><i style="letter-spacing:-0.3px"> </i><i style="letter-spacing:0.45px">ASCEND</i></span></div>
<div class="c" style="left:552px;top:368px;width:44px;height:34px;background:#af7dc7;border-style:solid;border-color:#5b4167;border-width:2px 0px 2px 2px;"><svg class="fd" style="left:0" width="44" height="34"><path d="M0 0H37.0Q26.4 17.0 0 34Z" fill="rgba(0,0,0,0.15)"/></svg><span style="left:5px;line-height:31px;color:#231928"><i style="letter-spacing:0.45px">MHA</i><i style="letter-spacing:-0.3px"> </i><i style="letter-spacing:0.45px">ASCEND</i></span></div>
<div class="c" style="left:906px;top:368px;width:44px;height:34px;background:#af7dc7;border-style:solid;border-color:#5b4167;border-width:2px 0px 2px 2px;"><svg class="fd" style="left:0" width="44" height="34"><path d="M0 0H37.0Q26.4 17.0 0 34Z" fill="rgba(0,0,0,0.15)"/></svg><span style="left:5px;line-height:31px;color:#231928"><i style="letter-spacing:0.45px">MHA</i><i style="letter-spacing:-0.3px"> </i><i style="letter-spacing:0.45px">ASCEND</i></span></div>
<div class="c" style="left:1084px;top:368px;width:44px;height:34px;background:#af7dc7;border-style:solid;border-color:#5b4167;border-width:2px 0px 2px 2px;"><svg class="fd" style="left:0" width="44" height="34"><path d="M0 0H37.0Q26.4 17.0 0 34Z" fill="rgba(0,0,0,0.15)"/></svg><span style="left:5px;line-height:31px;color:#231928"><i style="letter-spacing:0.45px">MHA</i><i style="letter-spacing:-0.3px"> </i><i style="letter-spacing:0.45px">ASCEND</i></span></div>
<div class="c" style="left:1260px;top:368px;width:44px;height:34px;background:#af7dc7;border-style:solid;border-color:#5b4167;border-width:2px 0px 2px 2px;"><svg class="fd" style="left:0" width="44" height="34"><path d="M0 0H37.0Q26.4 17.0 0 34Z" fill="rgba(0,0,0,0.15)"/></svg><span style="left:5px;line-height:31px;color:#231928"><i style="letter-spacing:0.45px">MHA</i><i style="letter-spacing:-0.3px"> </i><i style="letter-spacing:0.45px">ASCEND</i></span></div>
<div class="c" style="left:1436px;top:368px;width:46px;height:34px;background:#af7dc7;border-style:solid;border-color:#5b4167;border-width:2px 0px 2px 2px;"><svg class="fd" style="left:0" width="46" height="34"><path d="M0 0H38.6Q27.6 17.0 0 34Z" fill="rgba(0,0,0,0.15)"/></svg><span style="left:5px;line-height:31px;color:#231928"><i style="letter-spacing:0.45px">MHA</i><i style="letter-spacing:-0.3px"> </i><i style="letter-spacing:0.45px">ASCEND</i></span></div>
<div class="c" style="left:1526px;top:368px;width:44px;height:34px;background:#af7dc7;border-style:solid;border-color:#5b4167;border-width:2px 0px 2px 2px;"><svg class="fd" style="left:0" width="44" height="34"><path d="M0 0H37.0Q26.4 17.0 0 34Z" fill="rgba(0,0,0,0.15)"/></svg><span style="left:5px;line-height:31px;color:#231928"><i style="letter-spacing:0.45px">MHA</i><i style="letter-spacing:-0.3px"> </i><i style="letter-spacing:0.45px">ASCEND</i></span></div>
<div class="c" style="left:1614px;top:368px;width:44px;height:34px;background:#af7dc7;border-style:solid;border-color:#5b4167;border-width:2px 0px 2px 2px;"><svg class="fd" style="left:0" width="44" height="34"><path d="M0 0H37.0Q26.4 17.0 0 34Z" fill="rgba(0,0,0,0.15)"/></svg><span style="left:5px;line-height:31px;color:#231928"><i style="letter-spacing:0.45px">MHA</i><i style="letter-spacing:-0.3px"> </i><i style="letter-spacing:0.45px">ASCEND</i></span></div>
<div class="c" style="left:1968px;top:368px;width:44px;height:34px;background:#af7dc7;border-style:solid;border-color:#5b4167;border-width:2px 0px 2px 2px;"><svg class="fd" style="left:0" width="44" height="34"><path d="M0 0H37.0Q26.4 17.0 0 34Z" fill="rgba(0,0,0,0.15)"/></svg><span style="left:5px;line-height:31px;color:#231928"><i style="letter-spacing:0.45px">MHA</i><i style="letter-spacing:-0.3px"> </i><i style="letter-spacing:0.45px">ASCEND</i></span></div>
<div class="c" style="left:2144px;top:368px;width:44px;height:34px;background:#af7dc7;border-style:solid;border-color:#5b4167;border-width:2px 0px 2px 2px;"><svg class="fd" style="left:0" width="44" height="34"><path d="M0 0H37.0Q26.4 17.0 0 34Z" fill="rgba(0,0,0,0.15)"/></svg><span style="left:5px;line-height:31px;color:#231928"><i style="letter-spacing:0.45px">MHA</i><i style="letter-spacing:-0.3px"> </i><i style="letter-spacing:0.45px">ASCEND</i></span></div>
<div class="c" style="left:2322px;top:368px;width:44px;height:34px;background:#af7dc7;border-style:solid;border-color:#5b4167;border-width:2px 0px 2px 2px;"><svg class="fd" style="left:0" width="44" height="34"><path d="M0 0H37.0Q26.4 17.0 0 34Z" fill="rgba(0,0,0,0.15)"/></svg><span style="left:5px;line-height:31px;color:#231928"><i style="letter-spacing:0.45px">MHA</i><i style="letter-spacing:-0.3px"> </i><i style="letter-spacing:0.45px">ASCEND</i></span></div>
<div class="c" style="left:66px;top:406px;width:88px;height:34px;background:#af7dc7;border-style:solid;border-color:#5b4167;border-width:2px 0px 2px 2px;"><span style="left:5px;line-height:31px;color:#231928"><i style="letter-spacing:0.45px">MHA</i><i style="letter-spacing:-0.3px"> </i><i style="letter-spacing:0.45px">ASCEND</i></span></div>
<div class="c" style="left:244px;top:406px;width:88px;height:34px;background:#af7dc7;border-style:solid;border-color:#5b4167;border-width:2px 0px 2px 2px;"><span style="left:5px;line-height:31px;color:#231928"><i style="letter-spacing:0.45px">MHA</i><i style="letter-spacing:-0.3px"> </i><i style="letter-spacing:0.45px">ASCEND</i></span></div>
<div class="c" style="left:420px;top:406px;width:88px;height:34px;background:#af7dc7;border-style:solid;border-color:#5b4167;border-width:2px 0px 2px 2px;"><span style="left:5px;line-height:31px;color:#231928"><i style="letter-spacing:0.45px">MHA</i><i style="letter-spacing:-0.3px"> </i><i style="letter-spacing:0.45px">ASCEND</i></span></div>
<div class="c" style="left:508px;top:406px;width:88px;height:34px;background:#af7dc7;border-style:solid;border-color:#5b4167;border-width:2px 0px 2px 2px;"><span style="left:5px;line-height:31px;color:#231928"><i style="letter-spacing:0.45px">MHA</i><i style="letter-spacing:-0.3px"> </i><i style="letter-spacing:0.45px">ASCEND</i></span></div>
<div class="c" style="left:596px;top:406px;width:90px;height:34px;background:#af7dc7;border-style:solid;border-color:#5b4167;border-width:2px 0px 2px 2px;"><span style="left:5px;line-height:31px;color:#231928"><i style="letter-spacing:0.45px">MHA</i><i style="letter-spacing:-0.3px"> </i><i style="letter-spacing:0.45px">ASCEND</i></span></div>
<div class="c" style="left:950px;top:406px;width:88px;height:34px;background:#af7dc7;border-style:solid;border-color:#5b4167;border-width:2px 0px 2px 2px;"><span style="left:5px;line-height:31px;color:#231928"><i style="letter-spacing:0.45px">MHA</i><i style="letter-spacing:-0.3px"> </i><i style="letter-spacing:0.45px">ASCEND</i></span></div>
<div class="c" style="left:1128px;top:406px;width:88px;height:34px;background:#af7dc7;border-style:solid;border-color:#5b4167;border-width:2px 0px 2px 2px;"><span style="left:5px;line-height:31px;color:#231928"><i style="letter-spacing:0.45px">MHA</i><i style="letter-spacing:-0.3px"> </i><i style="letter-spacing:0.45px">ASCEND</i></span></div>
<div class="c" style="left:1304px;top:406px;width:88px;height:34px;background:#af7dc7;border-style:solid;border-color:#5b4167;border-width:2px 0px 2px 2px;"><span style="left:5px;line-height:31px;color:#231928"><i style="letter-spacing:0.45px">MHA</i><i style="letter-spacing:-0.3px"> </i><i style="letter-spacing:0.45px">ASCEND</i></span></div>
<div class="c" style="left:1482px;top:406px;width:88px;height:34px;background:#af7dc7;border-style:solid;border-color:#5b4167;border-width:2px 0px 2px 2px;"><span style="left:5px;line-height:31px;color:#231928"><i style="letter-spacing:0.45px">MHA</i><i style="letter-spacing:-0.3px"> </i><i style="letter-spacing:0.45px">ASCEND</i></span></div>
<div class="c" style="left:1570px;top:406px;width:88px;height:34px;background:#af7dc7;border-style:solid;border-color:#5b4167;border-width:2px 0px 2px 2px;"><span style="left:5px;line-height:31px;color:#231928"><i style="letter-spacing:0.45px">MHA</i><i style="letter-spacing:-0.3px"> </i><i style="letter-spacing:0.45px">ASCEND</i></span></div>
<div class="c" style="left:1658px;top:406px;width:88px;height:34px;background:#af7dc7;border-style:solid;border-color:#5b4167;border-width:2px 0px 2px 2px;"><span style="left:5px;line-height:31px;color:#231928"><i style="letter-spacing:0.45px">MHA</i><i style="letter-spacing:-0.3px"> </i><i style="letter-spacing:0.45px">ASCEND</i></span></div>
<div class="c" style="left:2012px;top:406px;width:88px;height:34px;background:#af7dc7;border-style:solid;border-color:#5b4167;border-width:2px 0px 2px 2px;"><span style="left:5px;line-height:31px;color:#231928"><i style="letter-spacing:0.45px">MHA</i><i style="letter-spacing:-0.3px"> </i><i style="letter-spacing:0.45px">ASCEND</i></span></div>
<div class="c" style="left:2188px;top:406px;width:88px;height:34px;background:#af7dc7;border-style:solid;border-color:#5b4167;border-width:2px 0px 2px 2px;"><span style="left:5px;line-height:31px;color:#231928"><i style="letter-spacing:0.45px">MHA</i><i style="letter-spacing:-0.3px"> </i><i style="letter-spacing:0.45px">ASCEND</i></span></div>
<div class="c" style="left:66px;top:444px;width:110px;height:34px;background:#626262;"><span style="left:7px;line-height:35px;color:#282828"><i style="letter-spacing:0.45px">MHA</i><i style="letter-spacing:-0.3px"> </i><i style="letter-spacing:0.45px">ASCEND</i></span></div>
<div class="c" style="left:244px;top:444px;width:108px;height:34px;background:#626262;"><span style="left:7px;line-height:35px;color:#282828"><i style="letter-spacing:0.45px">MHA</i><i style="letter-spacing:-0.3px"> </i><i style="letter-spacing:0.45px">ASCEND</i></span></div>
<div class="c" style="left:420px;top:444px;width:108px;height:34px;background:#af7dc7;border-style:solid;border-color:#5b4167;border-width:2px 0px 2px 2px;"><span style="left:5px;line-height:31px;color:#231928"><i style="letter-spacing:0.45px">MHA</i><i style="letter-spacing:-0.3px"> </i><i style="letter-spacing:0.45px">ASCEND</i></span></div>
<div class="c" style="left:596px;top:444px;width:110px;height:34px;background:#af7dc7;border-style:solid;border-color:#5b4167;border-width:2px 0px 2px 2px;"><span style="left:5px;line-height:31px;color:#231928"><i style="letter-spacing:0.45px">MHA</i><i style="letter-spacing:-0.3px"> </i><i style="letter-spacing:0.45px">ASCEND</i></span></div>
<div class="c" style="left:950px;top:444px;width:110px;height:34px;background:#af7dc7;border-style:solid;border-color:#5b4167;border-width:2px 0px 2px 2px;"><span style="left:5px;line-height:31px;color:#231928"><i style="letter-spacing:0.45px">MHA</i><i style="letter-spacing:-0.3px"> </i><i style="letter-spacing:0.45px">ASCEND</i></span></div>
<div class="c" style="left:1128px;top:444px;width:108px;height:34px;background:#af7dc7;border-style:solid;border-color:#5b4167;border-width:2px 0px 2px 2px;"><span style="left:5px;line-height:31px;color:#231928"><i style="letter-spacing:0.45px">MHA</i><i style="letter-spacing:-0.3px"> </i><i style="letter-spacing:0.45px">ASCEND</i></span></div>
<div class="c" style="left:1304px;top:444px;width:110px;height:34px;background:#af7dc7;border-style:solid;border-color:#5b4167;border-width:2px 0px 2px 2px;"><span style="left:5px;line-height:31px;color:#231928"><i style="letter-spacing:0.45px">MHA</i><i style="letter-spacing:-0.3px"> </i><i style="letter-spacing:0.45px">ASCEND</i></span></div>
<div class="c" style="left:1482px;top:444px;width:108px;height:34px;background:#af7dc7;border-style:solid;border-color:#5b4167;border-width:2px 0px 2px 2px;"><span style="left:5px;line-height:31px;color:#231928"><i style="letter-spacing:0.45px">MHA</i><i style="letter-spacing:-0.3px"> </i><i style="letter-spacing:0.45px">ASCEND</i></span></div>
<div class="c" style="left:1658px;top:444px;width:108px;height:34px;background:#af7dc7;border-style:solid;border-color:#5b4167;border-width:2px 0px 2px 2px;"><span style="left:5px;line-height:31px;color:#231928"><i style="letter-spacing:0.45px">MHA</i><i style="letter-spacing:-0.3px"> </i><i style="letter-spacing:0.45px">ASCEND</i></span></div>
<div class="c" style="left:2012px;top:444px;width:108px;height:34px;background:#af7dc7;border-style:solid;border-color:#5b4167;border-width:2px 0px 2px 2px;"><span style="left:5px;line-height:31px;color:#231928"><i style="letter-spacing:0.45px">MHA</i><i style="letter-spacing:-0.3px"> </i><i style="letter-spacing:0.45px">ASCEND</i></span></div>
<div class="c" style="left:2188px;top:444px;width:110px;height:34px;background:#af7dc7;border-style:solid;border-color:#5b4167;border-width:2px 0px 2px 2px;"><span style="left:5px;line-height:31px;color:#231928"><i style="letter-spacing:0.45px">MHA</i><i style="letter-spacing:-0.3px"> </i><i style="letter-spacing:0.45px">ASCEND</i></span></div>
<div class="c" style="left:402px;top:482px;width:66px;height:34px;background:#f19ca8;border-style:solid;border-color:#7d5157;border-width:2px 0px 2px 2px;"><span style="left:5px;line-height:31px;color:#301f22"><i style="letter-spacing:0.7px">KSHMR</i><i style="letter-spacing:-0.3px"> </i><i style="letter-spacing:1.5px">Sweep</i></span></div>
<div class="c" style="left:580px;top:482px;width:66px;height:34px;background:#f19ca8;border-style:solid;border-color:#7d5157;border-width:2px 0px 2px 2px;"><span style="left:5px;line-height:31px;color:#301f22"><i style="letter-spacing:0.7px">KSHMR</i><i style="letter-spacing:-0.3px"> </i><i style="letter-spacing:1.5px">Sweep</i></span></div>
<div class="c" style="left:1110px;top:482px;width:66px;height:34px;background:#f19ca8;border-style:solid;border-color:#7d5157;border-width:2px 0px 2px 2px;"><span style="left:5px;line-height:31px;color:#301f22"><i style="letter-spacing:0.7px">KSHMR</i><i style="letter-spacing:-0.3px"> </i><i style="letter-spacing:1.5px">Sweep</i></span></div>
<div class="c" style="left:1286px;top:482px;width:66px;height:34px;background:#f19ca8;border-style:solid;border-color:#7d5157;border-width:2px 0px 2px 2px;"><span style="left:5px;line-height:31px;color:#301f22"><i style="letter-spacing:0.7px">KSHMR</i><i style="letter-spacing:-0.3px"> </i><i style="letter-spacing:1.5px">Sweep</i></span></div>
<div class="c" style="left:1640px;top:482px;width:66px;height:34px;background:#f19ca8;border-style:solid;border-color:#7d5157;border-width:2px 0px 2px 2px;"><span style="left:5px;line-height:31px;color:#301f22"><i style="letter-spacing:0.7px">KSHMR</i><i style="letter-spacing:-0.3px"> </i><i style="letter-spacing:1.5px">Sweep</i></span></div>
<div class="c" style="left:1464px;top:482px;width:18px;height:34px;background:#f19ca8;border-style:solid;border-color:#7d5157;border-width:2px 0px 2px 2px;"><span style="left:5px;line-height:31px;color:#301f22"><i style="letter-spacing:0.7px">KSHMR</i><i style="letter-spacing:-0.3px"> </i><i style="letter-spacing:1.5px">Sweep</i></span></div>
<div class="c" style="left:1482px;top:482px;width:46px;height:34px;background:#f19ca8;border-style:solid;border-color:#7d5157;border-width:2px 0px 2px 2px;"><span style="left:5px;line-height:31px;color:#301f22"><i style="letter-spacing:0.7px">KSHMR</i><i style="letter-spacing:-0.3px"> </i><i style="letter-spacing:1.5px">Sweep</i></span></div>
<div class="c" style="left:2170px;top:482px;width:18px;height:34px;background:#f19ca8;border-style:solid;border-color:#7d5157;border-width:2px 0px 2px 2px;"><span style="left:5px;line-height:31px;color:#301f22"><i style="letter-spacing:0.7px">KSHMR</i><i style="letter-spacing:-0.3px"> </i><i style="letter-spacing:1.5px">Sweep</i></span></div>
<div class="c" style="left:2188px;top:482px;width:48px;height:34px;background:#f19ca8;border-style:solid;border-color:#7d5157;border-width:2px 0px 2px 2px;"><span style="left:5px;line-height:31px;color:#301f22"><i style="letter-spacing:0.7px">KSHMR</i><i style="letter-spacing:-0.3px"> </i><i style="letter-spacing:1.5px">Sweep</i></span></div>
<div class="c" style="left:2349px;top:482px;width:39px;height:34px;background:#f19ca8;border-style:solid;border-color:#7d5157;border-width:2px 0px 2px 2px;"><span style="left:5px;line-height:31px;color:#301f22"><i style="letter-spacing:0.7px">KSHMR</i><i style="letter-spacing:-0.3px"> </i><i style="letter-spacing:1.5px">Sweep</i></span></div>
<div class="c" style="left:388px;top:520px;width:82px;height:34px;background:#ea4bcf;border-style:solid;border-color:#7a276c;border-width:2px 0px 2px 2px;"><span style="left:5px;line-height:31px;color:#2f0f29"><i style="letter-spacing:0.45px">MHA</i><i style="letter-spacing:-0.3px"> </i><i style="letter-spacing:0.45px">ASCEND</i></span></div>
<div class="c" style="left:564px;top:520px;width:84px;height:34px;background:#626262;"><span style="left:7px;line-height:35px;color:#282828"><i style="letter-spacing:0.45px">MHA</i><i style="letter-spacing:-0.3px"> </i><i style="letter-spacing:0.45px">ASCEND</i></span></div>
<div class="c" style="left:1096px;top:520px;width:82px;height:34px;background:#626262;"><span style="left:7px;line-height:35px;color:#282828"><i style="letter-spacing:0.45px">MHA</i><i style="letter-spacing:-0.3px"> </i><i style="letter-spacing:0.45px">ASCEND</i></span></div>
<div class="c" style="left:1272px;top:520px;width:82px;height:34px;background:#626262;"><span style="left:7px;line-height:35px;color:#282828"><i style="letter-spacing:0.45px">MHA</i><i style="letter-spacing:-0.3px"> </i><i style="letter-spacing:0.45px">ASCEND</i></span></div>
<div class="c" style="left:1626px;top:520px;width:82px;height:34px;background:#626262;"><span style="left:7px;line-height:35px;color:#282828"><i style="letter-spacing:0.45px">MHA</i><i style="letter-spacing:-0.3px"> </i><i style="letter-spacing:0.45px">ASCEND</i></span></div>
<div class="c" style="left:1450px;top:520px;width:32px;height:34px;background:#ea4bcf;border-style:solid;border-color:#7a276c;border-width:2px 0px 2px 2px;"><span style="left:5px;line-height:31px;color:#2f0f29"><i style="letter-spacing:0.45px">MHA</i><i style="letter-spacing:-0.3px"> </i><i style="letter-spacing:0.45px">ASCEND</i></span></div>
<div class="c" style="left:1482px;top:520px;width:50px;height:34px;background:#ea4bcf;border-style:solid;border-color:#7a276c;border-width:2px 0px 2px 2px;"><span style="left:5px;line-height:31px;color:#2f0f29"><i style="letter-spacing:0.45px">MHA</i><i style="letter-spacing:-0.3px"> </i><i style="letter-spacing:0.45px">ASCEND</i></span></div>
<div class="c" style="left:2156px;top:520px;width:32px;height:34px;background:#626262;"><span style="left:7px;line-height:35px;color:#282828"><i style="letter-spacing:0.45px">MHA</i><i style="letter-spacing:-0.3px"> </i><i style="letter-spacing:0.45px">ASCEND</i></span></div>
<div class="c" style="left:2188px;top:520px;width:52px;height:34px;background:#626262;"><span style="left:7px;line-height:35px;color:#282828"><i style="letter-spacing:0.45px">MHA</i><i style="letter-spacing:-0.3px"> </i><i style="letter-spacing:0.45px">ASCEND</i></span></div>
<div class="c" style="left:2334px;top:520px;width:32px;height:34px;background:#ea4bcf;border-style:solid;border-color:#7a276c;border-width:2px 0px 2px 2px;"><span style="left:5px;line-height:31px;color:#2f0f29"><i style="letter-spacing:0.45px">MHA</i><i style="letter-spacing:-0.3px"> </i><i style="letter-spacing:0.45px">ASCEND</i></span></div>
<div class="c" style="left:420px;top:558px;width:88px;height:34px;background:#957650;border-style:solid;border-color:#4d3d2a;border-width:2px 0px 2px 2px;"><svg class="fd" style="left:0" width="88" height="34"><path d="M7.0 0H88V34Z" fill="rgba(0,0,0,0.16)"/></svg><span style="left:5px;line-height:31px;color:#1e1810"><i style="letter-spacing:0.7px">KSHMR</i><i style="letter-spacing:-0.3px"> </i><i style="letter-spacing:1.5px">Sweep</i></span></div>
<div class="c" style="left:508px;top:558px;width:88px;height:34px;background:#957650;border-style:solid;border-color:#4d3d2a;border-width:2px 0px 2px 2px;"><svg class="fd" style="left:0" width="88" height="34"><path d="M7.0 0H88V34Z" fill="rgba(0,0,0,0.16)"/></svg><span style="left:5px;line-height:31px;color:#1e1810"><i style="letter-spacing:0.7px">KSHMR</i><i style="letter-spacing:-0.3px"> </i><i style="letter-spacing:1.5px">Sweep</i></span></div>
<div class="c" style="left:596px;top:558px;width:90px;height:34px;background:#957650;border-style:solid;border-color:#4d3d2a;border-width:2px 0px 2px 2px;"><svg class="fd" style="left:0" width="90" height="34"><path d="M7.2 0H90V34Z" fill="rgba(0,0,0,0.16)"/></svg><span style="left:5px;line-height:31px;color:#1e1810"><i style="letter-spacing:0.7px">KSHMR</i><i style="letter-spacing:-0.3px"> </i><i style="letter-spacing:1.5px">Sweep</i></span></div>
<div class="c" style="left:1482px;top:558px;width:88px;height:34px;background:#957650;border-style:solid;border-color:#4d3d2a;border-width:2px 0px 2px 2px;"><svg class="fd" style="left:0" width="88" height="34"><path d="M7.0 0H88V34Z" fill="rgba(0,0,0,0.16)"/></svg><span style="left:5px;line-height:31px;color:#1e1810"><i style="letter-spacing:0.7px">KSHMR</i><i style="letter-spacing:-0.3px"> </i><i style="letter-spacing:1.5px">Sweep</i></span></div>
<div class="c" style="left:1570px;top:558px;width:88px;height:34px;background:#957650;border-style:solid;border-color:#4d3d2a;border-width:2px 0px 2px 2px;"><svg class="fd" style="left:0" width="88" height="34"><path d="M7.0 0H88V34Z" fill="rgba(0,0,0,0.16)"/></svg><span style="left:5px;line-height:31px;color:#1e1810"><i style="letter-spacing:0.7px">KSHMR</i><i style="letter-spacing:-0.3px"> </i><i style="letter-spacing:1.5px">Sweep</i></span></div>
<div class="c" style="left:1658px;top:558px;width:88px;height:34px;background:#957650;border-style:solid;border-color:#4d3d2a;border-width:2px 0px 2px 2px;"><svg class="fd" style="left:0" width="88" height="34"><path d="M7.0 0H88V34Z" fill="rgba(0,0,0,0.16)"/></svg><span style="left:5px;line-height:31px;color:#1e1810"><i style="letter-spacing:0.7px">KSHMR</i><i style="letter-spacing:-0.3px"> </i><i style="letter-spacing:1.5px">Sweep</i></span></div>
<svg class="abs" style="left:420px;top:596px;z-index:2" width="176" height="70"><rect x="0" y="0" width="176" height="70" fill="#e6762f"/><rect x="0" y="0" width="176" height="2" fill="#783d18"/><rect x="0" y="0" width="2" height="70" fill="#783d18"/><rect x="0" y="32" width="176" height="2" fill="#783d18"/><rect x="44" y="34" width="2" height="36" fill="#8a471c"/><rect x="88" y="34" width="2" height="36" fill="#8a471c"/><rect x="132" y="34" width="2" height="36" fill="#8a471c"/><rect x="1.7" y="44" width="64.3" height="2" fill="#111"/><rect x="66.0" y="40" width="21.9" height="2" fill="#111"/><rect x="89.4" y="60" width="64.1" height="2" fill="#111"/><rect x="153.5" y="64" width="22.1" height="2" fill="#111"/></svg>
<svg class="abs" style="left:596px;top:596px;z-index:2" width="134" height="70"><rect x="0" y="0" width="134" height="70" fill="#e6762f"/><rect x="0" y="0" width="134" height="2" fill="#783d18"/><rect x="0" y="0" width="2" height="70" fill="#783d18"/><rect x="0" y="32" width="134" height="2" fill="#783d18"/><rect x="46" y="34" width="2" height="36" fill="#8a471c"/><rect x="90" y="34" width="2" height="36" fill="#8a471c"/><rect x="2.5" y="44" width="64.3" height="2" fill="#111"/><rect x="66.8" y="40" width="21.9" height="2" fill="#111"/><rect x="90.3" y="60" width="43.7" height="2" fill="#111"/></svg>
<svg class="abs" style="left:1482px;top:596px;z-index:2" width="176" height="70"><rect x="0" y="0" width="176" height="70" fill="#e6762f"/><rect x="0" y="0" width="176" height="2" fill="#783d18"/><rect x="0" y="0" width="2" height="70" fill="#783d18"/><rect x="0" y="32" width="176" height="2" fill="#783d18"/><rect x="44" y="34" width="2" height="36" fill="#8a471c"/><rect x="88" y="34" width="2" height="36" fill="#8a471c"/><rect x="132" y="34" width="2" height="36" fill="#8a471c"/><rect x="0.8" y="44" width="64.3" height="2" fill="#111"/><rect x="65.1" y="40" width="21.9" height="2" fill="#111"/><rect x="88.5" y="60" width="64.1" height="2" fill="#111"/><rect x="152.6" y="64" width="22.1" height="2" fill="#111"/></svg>
<svg class="abs" style="left:1658px;top:596px;z-index:2" width="132" height="70"><rect x="0" y="0" width="132" height="70" fill="#e6762f"/><rect x="0" y="0" width="132" height="2" fill="#783d18"/><rect x="0" y="0" width="2" height="70" fill="#783d18"/><rect x="0" y="32" width="132" height="2" fill="#783d18"/><rect x="44" y="34" width="2" height="36" fill="#8a471c"/><rect x="88" y="34" width="2" height="36" fill="#8a471c"/><rect x="1.6" y="44" width="64.3" height="2" fill="#111"/><rect x="65.9" y="40" width="21.9" height="2" fill="#111"/><rect x="89.4" y="60" width="42.6" height="2" fill="#111"/></svg>
<div style="left:244.0px;top:596.0px;width:176.0px;height:34.0px;background:#626262;z-index:2"></div>
<svg class="abs" style="left:244px;top:596px;z-index:2" width="176" height="70"><rect x="0.2" y="44" width="65.7" height="2" fill="#6c6c6c"/><rect x="65.8" y="40" width="22.1" height="2" fill="#6c6c6c"/><rect x="88.6" y="36" width="64.1" height="2" fill="#6c6c6c"/><rect x="152.7" y="40" width="23.2" height="2" fill="#6c6c6c"/></svg>
<div style="left:420.0px;top:706.0px;width:310.0px;height:34.0px;background:rgba(0,0,0,0.16);"></div>
<div style="left:420.0px;top:714.0px;width:310.0px;height:2.0px;background:rgba(255,255,255,0.035);"></div>
<div style="left:420.0px;top:721.0px;width:310.0px;height:2.0px;background:rgba(255,255,255,0.035);"></div>
<div style="left:420.0px;top:730.0px;width:310.0px;height:2.0px;background:rgba(255,255,255,0.035);"></div>
<div style="left:420.0px;top:736.0px;width:310.0px;height:2.0px;background:rgba(255,255,255,0.035);"></div>
<div style="left:1482.0px;top:706.0px;width:308.0px;height:34.0px;background:rgba(0,0,0,0.16);"></div>
<div style="left:1482.0px;top:714.0px;width:308.0px;height:2.0px;background:rgba(255,255,255,0.035);"></div>
<div style="left:1482.0px;top:721.0px;width:308.0px;height:2.0px;background:rgba(255,255,255,0.035);"></div>
<div style="left:1482.0px;top:730.0px;width:308.0px;height:2.0px;background:rgba(255,255,255,0.035);"></div>
<div style="left:1482.0px;top:736.0px;width:308.0px;height:2.0px;background:rgba(255,255,255,0.035);"></div>
<div style="left:66.0px;top:1080.0px;width:354.0px;height:22.0px;background:rgba(0,0,0,0.16);"></div>
<div style="left:66.0px;top:1088.0px;width:354.0px;height:2.0px;background:rgba(255,255,255,0.035);"></div>
<div style="left:66.0px;top:1095.0px;width:354.0px;height:2.0px;background:rgba(255,255,255,0.035);"></div>
<div style="left:596.0px;top:1080.0px;width:134.0px;height:22.0px;background:rgba(0,0,0,0.16);"></div>
<div style="left:596.0px;top:1088.0px;width:134.0px;height:2.0px;background:rgba(255,255,255,0.035);"></div>
<div style="left:596.0px;top:1095.0px;width:134.0px;height:2.0px;background:rgba(255,255,255,0.035);"></div>
<div style="left:774.0px;top:1080.0px;width:708.0px;height:22.0px;background:rgba(0,0,0,0.16);"></div>
<div style="left:774.0px;top:1088.0px;width:708.0px;height:2.0px;background:rgba(255,255,255,0.035);"></div>
<div style="left:774.0px;top:1095.0px;width:708.0px;height:2.0px;background:rgba(255,255,255,0.035);"></div>
<div style="left:1658.0px;top:1080.0px;width:132.0px;height:22.0px;background:rgba(0,0,0,0.16);"></div>
<div style="left:1658.0px;top:1088.0px;width:132.0px;height:2.0px;background:rgba(255,255,255,0.035);"></div>
<div style="left:1658.0px;top:1095.0px;width:132.0px;height:2.0px;background:rgba(255,255,255,0.035);"></div>
<div style="left:1834.0px;top:1080.0px;width:532.0px;height:22.0px;background:rgba(0,0,0,0.16);"></div>
<div style="left:1834.0px;top:1088.0px;width:532.0px;height:2.0px;background:rgba(255,255,255,0.035);"></div>
<div style="left:1834.0px;top:1095.0px;width:532.0px;height:2.0px;background:rgba(255,255,255,0.035);"></div>
<svg class="abs" style="left:420px;top:744px;z-index:2" width="310" height="34"><rect x="0" y="0" width="310" height="34" fill="#e6762f"/><rect x="0" y="0" width="310" height="2" fill="#783d18"/><rect x="0" y="0" width="2" height="34" fill="#783d18"/><rect x="0" y="32" width="310" height="2" fill="#783d18"/><rect x="176" y="3" width="2" height="5" fill="#1a1208"/><rect x="176" y="26" width="2" height="5" fill="#1a1208"/></svg>
<svg class="abs" style="left:1482px;top:744px;z-index:2" width="308" height="34"><rect x="0" y="0" width="308" height="34" fill="#e6762f"/><rect x="0" y="0" width="308" height="2" fill="#783d18"/><rect x="0" y="0" width="2" height="34" fill="#783d18"/><rect x="0" y="32" width="308" height="2" fill="#783d18"/><rect x="176" y="3" width="2" height="5" fill="#1a1208"/><rect x="176" y="26" width="2" height="5" fill="#1a1208"/></svg>
<svg class="abs" style="left:420px;top:782px;z-index:2" width="310" height="34"><rect x="0" y="0" width="310" height="34" fill="#e6762f"/><rect x="0" y="0" width="310" height="2" fill="#783d18"/><rect x="0" y="0" width="2" height="34" fill="#783d18"/><rect x="0" y="32" width="310" height="2" fill="#783d18"/><rect x="176" y="3" width="2" height="5" fill="#1a1208"/><rect x="176" y="26" width="2" height="5" fill="#1a1208"/></svg>
<svg class="abs" style="left:1482px;top:782px;z-index:2" width="308" height="34"><rect x="0" y="0" width="308" height="34" fill="#e6762f"/><rect x="0" y="0" width="308" height="2" fill="#783d18"/><rect x="0" y="0" width="2" height="34" fill="#783d18"/><rect x="0" y="32" width="308" height="2" fill="#783d18"/><rect x="176" y="3" width="2" height="5" fill="#1a1208"/><rect x="176" y="26" width="2" height="5" fill="#1a1208"/></svg>
<svg class="abs" style="left:420px;top:820px;z-index:2" width="310" height="34"><rect x="0" y="0" width="310" height="34" fill="#e6762f"/><rect x="0" y="0" width="310" height="2" fill="#783d18"/><rect x="0" y="0" width="2" height="34" fill="#783d18"/><rect x="0" y="32" width="310" height="2" fill="#783d18"/><rect x="176" y="3" width="2" height="5" fill="#1a1208"/><rect x="176" y="26" width="2" height="5" fill="#1a1208"/></svg>
<svg class="abs" style="left:1482px;top:820px;z-index:2" width="308" height="34"><rect x="0" y="0" width="308" height="34" fill="#e6762f"/><rect x="0" y="0" width="308" height="2" fill="#783d18"/><rect x="0" y="0" width="2" height="34" fill="#783d18"/><rect x="0" y="32" width="308" height="2" fill="#783d18"/><rect x="176" y="3" width="2" height="5" fill="#1a1208"/><rect x="176" y="26" width="2" height="5" fill="#1a1208"/></svg>
<svg class="abs" style="left:420px;top:858px;z-index:2" width="310" height="70"><rect x="0" y="0" width="310" height="70" fill="#e6762f"/><rect x="0" y="0" width="310" height="2" fill="#783d18"/><rect x="0" y="0" width="2" height="70" fill="#783d18"/><rect x="0" y="32" width="310" height="2" fill="#783d18"/><rect x="44" y="34" width="2" height="36" fill="#8a471c"/><rect x="88" y="34" width="2" height="36" fill="#8a471c"/><rect x="132" y="34" width="2" height="36" fill="#8a471c"/><rect x="176" y="34" width="2" height="36" fill="#8a471c"/><rect x="222" y="34" width="2" height="36" fill="#8a471c"/><rect x="266" y="34" width="2" height="36" fill="#8a471c"/><rect x="3.0" y="45" width="62.7" height="2" fill="#7f411a"/><rect x="3.0" y="49" width="62.7" height="2" fill="#7f411a"/><rect x="3.0" y="65" width="62.7" height="2" fill="#7f411a"/><rect x="66.7" y="41" width="21.8" height="2" fill="#7f411a"/><rect x="66.7" y="47" width="21.8" height="2" fill="#7f411a"/><rect x="66.7" y="63" width="21.8" height="2" fill="#7f411a"/><rect x="78.4" y="37" width="10.1" height="2" fill="#7f411a"/><rect x="89.4" y="41" width="64.2" height="2" fill="#7f411a"/><rect x="89.4" y="45" width="64.2" height="2" fill="#7f411a"/><rect x="89.4" y="59" width="64.2" height="2" fill="#7f411a"/><rect x="154.6" y="41" width="22.2" height="2" fill="#7f411a"/><rect x="154.6" y="47" width="22.2" height="2" fill="#7f411a"/><rect x="154.6" y="63" width="22.2" height="2" fill="#7f411a"/><rect x="177.9" y="45" width="64.7" height="2" fill="#7f411a"/><rect x="177.9" y="49" width="64.7" height="2" fill="#7f411a"/><rect x="177.9" y="65" width="64.7" height="2" fill="#7f411a"/><rect x="243.5" y="41" width="21.8" height="2" fill="#7f411a"/><rect x="243.5" y="47" width="21.8" height="2" fill="#7f411a"/><rect x="243.5" y="63" width="21.8" height="2" fill="#7f411a"/><rect x="255.2" y="37" width="10.1" height="2" fill="#7f411a"/><rect x="266.3" y="41" width="43.2" height="2" fill="#7f411a"/><rect x="266.3" y="45" width="43.2" height="2" fill="#7f411a"/><rect x="266.3" y="59" width="43.2" height="2" fill="#7f411a"/><rect x="0" y="35" width="310" height="2" fill="#7f411a"/><rect x="176" y="3" width="2" height="5" fill="#1a1208"/><rect x="176" y="64" width="2" height="6" fill="#1a1208"/></svg>
<svg class="abs" style="left:1482px;top:858px;z-index:2" width="308" height="70"><rect x="0" y="0" width="308" height="70" fill="#e6762f"/><rect x="0" y="0" width="308" height="2" fill="#783d18"/><rect x="0" y="0" width="2" height="70" fill="#783d18"/><rect x="0" y="32" width="308" height="2" fill="#783d18"/><rect x="44" y="34" width="2" height="36" fill="#8a471c"/><rect x="88" y="34" width="2" height="36" fill="#8a471c"/><rect x="132" y="34" width="2" height="36" fill="#8a471c"/><rect x="176" y="34" width="2" height="36" fill="#8a471c"/><rect x="220" y="34" width="2" height="36" fill="#8a471c"/><rect x="264" y="34" width="2" height="36" fill="#8a471c"/><rect x="2.1" y="45" width="62.7" height="2" fill="#7f411a"/><rect x="2.1" y="49" width="62.7" height="2" fill="#7f411a"/><rect x="2.1" y="65" width="62.7" height="2" fill="#7f411a"/><rect x="65.8" y="41" width="21.8" height="2" fill="#7f411a"/><rect x="65.8" y="47" width="21.8" height="2" fill="#7f411a"/><rect x="65.8" y="63" width="21.8" height="2" fill="#7f411a"/><rect x="77.5" y="37" width="10.1" height="2" fill="#7f411a"/><rect x="88.5" y="41" width="64.2" height="2" fill="#7f411a"/><rect x="88.5" y="45" width="64.2" height="2" fill="#7f411a"/><rect x="88.5" y="59" width="64.2" height="2" fill="#7f411a"/><rect x="153.7" y="41" width="22.2" height="2" fill="#7f411a"/><rect x="153.7" y="47" width="22.2" height="2" fill="#7f411a"/><rect x="153.7" y="63" width="22.2" height="2" fill="#7f411a"/><rect x="176.9" y="45" width="64.7" height="2" fill="#7f411a"/><rect x="176.9" y="49" width="64.7" height="2" fill="#7f411a"/><rect x="176.9" y="65" width="64.7" height="2" fill="#7f411a"/><rect x="242.6" y="41" width="21.8" height="2" fill="#7f411a"/><rect x="242.6" y="47" width="21.8" height="2" fill="#7f411a"/><rect x="242.6" y="63" width="21.8" height="2" fill="#7f411a"/><rect x="254.3" y="37" width="10.1" height="2" fill="#7f411a"/><rect x="265.4" y="41" width="42.6" height="2" fill="#7f411a"/><rect x="265.4" y="45" width="42.6" height="2" fill="#7f411a"/><rect x="265.4" y="59" width="42.6" height="2" fill="#7f411a"/><rect x="0" y="35" width="308" height="2" fill="#7f411a"/><rect x="176" y="3" width="2" height="5" fill="#1a1208"/><rect x="176" y="64" width="2" height="6" fill="#1a1208"/></svg>
<div style="left:10.0px;top:744.0px;width:56.0px;height:34.0px;background:#626262;z-index:2"></div>
<div style="left:110.0px;top:744.0px;width:310.0px;height:34.0px;background:#626262;z-index:2"></div>
<div style="left:774.0px;top:744.0px;width:354.0px;height:34.0px;background:#626262;z-index:2"></div>
<div style="left:1834.0px;top:744.0px;width:354.0px;height:34.0px;background:#626262;z-index:2"></div>
<div style="left:10.0px;top:782.0px;width:56.0px;height:34.0px;background:#626262;z-index:2"></div>
<div style="left:110.0px;top:782.0px;width:310.0px;height:34.0px;background:#626262;z-index:2"></div>
<div style="left:774.0px;top:782.0px;width:354.0px;height:34.0px;background:#626262;z-index:2"></div>
<div style="left:1834.0px;top:782.0px;width:354.0px;height:34.0px;background:#626262;z-index:2"></div>
<div style="left:10.0px;top:820.0px;width:56.0px;height:34.0px;background:#626262;z-index:2"></div>
<div style="left:110.0px;top:820.0px;width:310.0px;height:34.0px;background:#626262;z-index:2"></div>
<div style="left:774.0px;top:820.0px;width:354.0px;height:34.0px;background:#626262;z-index:2"></div>
<div style="left:1834.0px;top:820.0px;width:354.0px;height:34.0px;background:#626262;z-index:2"></div>
<div style="left:10.0px;top:858.0px;width:56.0px;height:34.0px;background:#626262;z-index:2"></div>
<svg class="abs" style="left:10px;top:858px;z-index:2" width="56" height="70"><line x1="-7.0" y1="42.0" x2="56.0" y2="42.0" stroke="#5b5b5b" stroke-width="2" stroke-dasharray="2 2.4"/><line x1="-7.0" y1="60.0" x2="56.0" y2="60.0" stroke="#5b5b5b" stroke-width="2" stroke-dasharray="2 2.4"/><line x1="0" y1="36.0" x2="56" y2="36.0" stroke="#5b5b5b" stroke-width="2" stroke-dasharray="2 2.4"/></svg>
<div style="left:110.0px;top:858.0px;width:310.0px;height:34.0px;background:#626262;z-index:2"></div>
<svg class="abs" style="left:110px;top:858px;z-index:2" width="310" height="70"><line x1="3.5" y1="46.0" x2="20.4" y2="46.0" stroke="#5b5b5b" stroke-width="2" stroke-dasharray="2 2.4"/><line x1="3.5" y1="66.0" x2="20.4" y2="66.0" stroke="#5b5b5b" stroke-width="2" stroke-dasharray="2 2.4"/><line x1="21.4" y1="42.0" x2="63.5" y2="42.0" stroke="#5b5b5b" stroke-width="2" stroke-dasharray="2 2.4"/><line x1="21.4" y1="64.0" x2="63.5" y2="64.0" stroke="#5b5b5b" stroke-width="2" stroke-dasharray="2 2.4"/><line x1="64.5" y1="46.0" x2="88.9" y2="46.0" stroke="#5b5b5b" stroke-width="2" stroke-dasharray="2 2.4"/><line x1="64.5" y1="70.0" x2="88.9" y2="70.0" stroke="#5b5b5b" stroke-width="2" stroke-dasharray="2 2.4"/><line x1="89.9" y1="42.0" x2="133.2" y2="42.0" stroke="#5b5b5b" stroke-width="2" stroke-dasharray="2 2.4"/><line x1="89.9" y1="68.0" x2="133.2" y2="68.0" stroke="#5b5b5b" stroke-width="2" stroke-dasharray="2 2.4"/><line x1="134.2" y1="46.0" x2="221.6" y2="46.0" stroke="#5b5b5b" stroke-width="2" stroke-dasharray="2 2.4"/><line x1="134.2" y1="66.0" x2="221.6" y2="66.0" stroke="#5b5b5b" stroke-width="2" stroke-dasharray="2 2.4"/><line x1="222.6" y1="46.0" x2="265.8" y2="46.0" stroke="#5b5b5b" stroke-width="2" stroke-dasharray="2 2.4"/><line x1="222.6" y1="70.0" x2="265.8" y2="70.0" stroke="#5b5b5b" stroke-width="2" stroke-dasharray="2 2.4"/><line x1="266.8" y1="42.0" x2="310.0" y2="42.0" stroke="#5b5b5b" stroke-width="2" stroke-dasharray="2 2.4"/><line x1="266.8" y1="68.0" x2="310.0" y2="68.0" stroke="#5b5b5b" stroke-width="2" stroke-dasharray="2 2.4"/><line x1="0" y1="36.0" x2="310" y2="36.0" stroke="#5b5b5b" stroke-width="2" stroke-dasharray="2 2.4"/></svg>
<div style="left:774.0px;top:858.0px;width:354.0px;height:34.0px;background:#626262;z-index:2"></div>
<svg class="abs" style="left:774px;top:858px;z-index:2" width="354" height="70"><line x1="2.7" y1="46.0" x2="63.8" y2="46.0" stroke="#5b5b5b" stroke-width="2" stroke-dasharray="2 2.4"/><line x1="2.7" y1="66.0" x2="63.8" y2="66.0" stroke="#5b5b5b" stroke-width="2" stroke-dasharray="2 2.4"/><line x1="64.8" y1="42.0" x2="106.9" y2="42.0" stroke="#5b5b5b" stroke-width="2" stroke-dasharray="2 2.4"/><line x1="64.8" y1="64.0" x2="106.9" y2="64.0" stroke="#5b5b5b" stroke-width="2" stroke-dasharray="2 2.4"/><line x1="107.9" y1="46.0" x2="132.3" y2="46.0" stroke="#5b5b5b" stroke-width="2" stroke-dasharray="2 2.4"/><line x1="107.9" y1="70.0" x2="132.3" y2="70.0" stroke="#5b5b5b" stroke-width="2" stroke-dasharray="2 2.4"/><line x1="133.3" y1="42.0" x2="176.6" y2="42.0" stroke="#5b5b5b" stroke-width="2" stroke-dasharray="2 2.4"/><line x1="133.3" y1="68.0" x2="176.6" y2="68.0" stroke="#5b5b5b" stroke-width="2" stroke-dasharray="2 2.4"/><line x1="177.6" y1="46.0" x2="265.0" y2="46.0" stroke="#5b5b5b" stroke-width="2" stroke-dasharray="2 2.4"/><line x1="177.6" y1="66.0" x2="265.0" y2="66.0" stroke="#5b5b5b" stroke-width="2" stroke-dasharray="2 2.4"/><line x1="266.0" y1="46.0" x2="309.2" y2="46.0" stroke="#5b5b5b" stroke-width="2" stroke-dasharray="2 2.4"/><line x1="266.0" y1="70.0" x2="309.2" y2="70.0" stroke="#5b5b5b" stroke-width="2" stroke-dasharray="2 2.4"/><line x1="310.2" y1="42.0" x2="353.4" y2="42.0" stroke="#5b5b5b" stroke-width="2" stroke-dasharray="2 2.4"/><line x1="310.2" y1="68.0" x2="353.4" y2="68.0" stroke="#5b5b5b" stroke-width="2" stroke-dasharray="2 2.4"/><line x1="0" y1="36.0" x2="354" y2="36.0" stroke="#5b5b5b" stroke-width="2" stroke-dasharray="2 2.4"/></svg>
<div style="left:1834.0px;top:858.0px;width:354.0px;height:34.0px;background:#626262;z-index:2"></div>
<svg class="abs" style="left:1834px;top:858px;z-index:2" width="354" height="70"><line x1="3.8" y1="46.0" x2="64.9" y2="46.0" stroke="#5b5b5b" stroke-width="2" stroke-dasharray="2 2.4"/><line x1="3.8" y1="66.0" x2="64.9" y2="66.0" stroke="#5b5b5b" stroke-width="2" stroke-dasharray="2 2.4"/><line x1="65.9" y1="42.0" x2="108.0" y2="42.0" stroke="#5b5b5b" stroke-width="2" stroke-dasharray="2 2.4"/><line x1="65.9" y1="64.0" x2="108.0" y2="64.0" stroke="#5b5b5b" stroke-width="2" stroke-dasharray="2 2.4"/><line x1="109.0" y1="46.0" x2="133.4" y2="46.0" stroke="#5b5b5b" stroke-width="2" stroke-dasharray="2 2.4"/><line x1="109.0" y1="70.0" x2="133.4" y2="70.0" stroke="#5b5b5b" stroke-width="2" stroke-dasharray="2 2.4"/><line x1="134.4" y1="42.0" x2="177.6" y2="42.0" stroke="#5b5b5b" stroke-width="2" stroke-dasharray="2 2.4"/><line x1="134.4" y1="68.0" x2="177.6" y2="68.0" stroke="#5b5b5b" stroke-width="2" stroke-dasharray="2 2.4"/><line x1="178.6" y1="46.0" x2="266.1" y2="46.0" stroke="#5b5b5b" stroke-width="2" stroke-dasharray="2 2.4"/><line x1="178.6" y1="66.0" x2="266.1" y2="66.0" stroke="#5b5b5b" stroke-width="2" stroke-dasharray="2 2.4"/><line x1="267.1" y1="46.0" x2="310.3" y2="46.0" stroke="#5b5b5b" stroke-width="2" stroke-dasharray="2 2.4"/><line x1="267.1" y1="70.0" x2="310.3" y2="70.0" stroke="#5b5b5b" stroke-width="2" stroke-dasharray="2 2.4"/><line x1="311.3" y1="42.0" x2="354.0" y2="42.0" stroke="#5b5b5b" stroke-width="2" stroke-dasharray="2 2.4"/><line x1="311.3" y1="68.0" x2="354.0" y2="68.0" stroke="#5b5b5b" stroke-width="2" stroke-dasharray="2 2.4"/><line x1="0" y1="36.0" x2="354" y2="36.0" stroke="#5b5b5b" stroke-width="2" stroke-dasharray="2 2.4"/></svg>
<div style="left:18.0px;top:765.0px;width:3.0px;height:3.0px;background:#2a2a2a;z-index:3;border-radius:2px"></div>
<div style="left:18.0px;top:803.0px;width:3.0px;height:3.0px;background:#2a2a2a;z-index:3;border-radius:2px"></div>
<div style="left:18.0px;top:841.0px;width:3.0px;height:3.0px;background:#2a2a2a;z-index:3;border-radius:2px"></div>
<div style="left:18.0px;top:879.0px;width:3.0px;height:3.0px;background:#2a2a2a;z-index:3;border-radius:2px"></div>
<svg class="abs" style="left:244px;top:932px;z-index:2" width="154" height="70"><rect x="0" y="0" width="154" height="70" fill="#e6762f"/><rect x="0" y="0" width="154" height="2" fill="#783d18"/><rect x="0" y="0" width="2" height="70" fill="#783d18"/><rect x="0" y="32" width="154" height="2" fill="#783d18"/><rect x="44" y="34" width="2" height="36" fill="#8a471c"/><rect x="88" y="34" width="2" height="36" fill="#8a471c"/><rect x="132" y="34" width="2" height="36" fill="#8a471c"/><rect x="1.9" y="44" width="66.1" height="2" fill="#111"/><rect x="68.0" y="40" width="21.7" height="2" fill="#111"/><rect x="89.7" y="60" width="64.3" height="2" fill="#111"/></svg>
<div style="left:220.0px;top:932.0px;width:24.0px;height:34.0px;background:#626262;"></div>
<div class="c" style="left:618px;top:1006px;width:112px;height:34px;background:#cc73e0;border-style:solid;border-color:#6a3c74;border-width:2px 0px 2px 2px;"><span style="left:5px;line-height:31px;color:#29172d"><i style="letter-spacing:0.7px">KSHMR</i><i style="letter-spacing:-0.3px"> </i><i style="letter-spacing:1.5px">Long</i><i style="letter-spacing:-0.3px"> </i><i style="letter-spacing:1.5px">Sweep</i></span></div>
<div class="c" style="left:1680px;top:1006px;width:110px;height:34px;background:#cc73e0;border-style:solid;border-color:#6a3c74;border-width:2px 0px 2px 2px;"><span style="left:5px;line-height:31px;color:#29172d"><i style="letter-spacing:0.7px">KSHMR</i><i style="letter-spacing:-0.3px"> </i><i style="letter-spacing:1.5px">Long</i><i style="letter-spacing:-0.3px"> </i><i style="letter-spacing:1.5px">Sweep</i></span></div>
<svg class="abs" style="left:66px;top:1118px;z-index:2" width="354" height="70"><rect x="0" y="0" width="354" height="70" fill="#e6762f"/><rect x="0" y="0" width="354" height="2" fill="#783d18"/><rect x="0" y="0" width="2" height="70" fill="#783d18"/><rect x="0" y="32" width="354" height="2" fill="#783d18"/><rect x="44" y="34" width="2" height="36" fill="#8a471c"/><rect x="88" y="34" width="2" height="36" fill="#8a471c"/><rect x="132" y="34" width="2" height="36" fill="#8a471c"/><rect x="178" y="34" width="2" height="36" fill="#8a471c"/><rect x="222" y="34" width="2" height="36" fill="#8a471c"/><rect x="266" y="34" width="2" height="36" fill="#8a471c"/><rect x="310" y="34" width="2" height="36" fill="#8a471c"/><line x1="3.3" y1="46.0" x2="63.8" y2="46.0" stroke="#7f411a" stroke-width="2" stroke-dasharray="2 2.4"/><line x1="3.3" y1="70.0" x2="63.8" y2="70.0" stroke="#7f411a" stroke-width="2" stroke-dasharray="2 2.4"/><line x1="66.1" y1="44.0" x2="85.4" y2="44.0" stroke="#7f411a" stroke-width="2" stroke-dasharray="2 2.4"/><line x1="66.1" y1="66.0" x2="85.4" y2="66.0" stroke="#7f411a" stroke-width="2" stroke-dasharray="2 2.4"/><line x1="88.9" y1="42.0" x2="151.1" y2="42.0" stroke="#7f411a" stroke-width="2" stroke-dasharray="2 2.4"/><line x1="88.9" y1="64.0" x2="151.1" y2="64.0" stroke="#7f411a" stroke-width="2" stroke-dasharray="2 2.4"/><line x1="153.8" y1="44.0" x2="173.2" y2="44.0" stroke="#7f411a" stroke-width="2" stroke-dasharray="2 2.4"/><line x1="153.8" y1="66.0" x2="173.2" y2="66.0" stroke="#7f411a" stroke-width="2" stroke-dasharray="2 2.4"/><line x1="178.2" y1="46.0" x2="240.6" y2="46.0" stroke="#7f411a" stroke-width="2" stroke-dasharray="2 2.4"/><line x1="178.2" y1="70.0" x2="240.6" y2="70.0" stroke="#7f411a" stroke-width="2" stroke-dasharray="2 2.4"/><line x1="242.9" y1="44.0" x2="262.3" y2="44.0" stroke="#7f411a" stroke-width="2" stroke-dasharray="2 2.4"/><line x1="242.9" y1="66.0" x2="262.3" y2="66.0" stroke="#7f411a" stroke-width="2" stroke-dasharray="2 2.4"/><line x1="265.7" y1="42.0" x2="327.9" y2="42.0" stroke="#7f411a" stroke-width="2" stroke-dasharray="2 2.4"/><line x1="265.7" y1="64.0" x2="327.9" y2="64.0" stroke="#7f411a" stroke-width="2" stroke-dasharray="2 2.4"/><line x1="330.7" y1="44.0" x2="350.0" y2="44.0" stroke="#7f411a" stroke-width="2" stroke-dasharray="2 2.4"/><line x1="330.7" y1="66.0" x2="350.0" y2="66.0" stroke="#7f411a" stroke-width="2" stroke-dasharray="2 2.4"/><line x1="0" y1="36.0" x2="354" y2="36.0" stroke="#7f411a" stroke-width="2" stroke-dasharray="2 2.4"/><rect x="178" y="3" width="2" height="5" fill="#1a1208"/><rect x="178" y="64" width="2" height="6" fill="#1a1208"/></svg>
<div style="left:420.0px;top:1118.0px;width:176.0px;height:34.0px;background:#626262;z-index:2"></div>
<svg class="abs" style="left:420px;top:1118px;z-index:2" width="176" height="70"><line x1="3.0" y1="46.0" x2="63.5" y2="46.0" stroke="#646464" stroke-width="2" stroke-dasharray="2 2.4"/><line x1="3.0" y1="70.0" x2="63.5" y2="70.0" stroke="#646464" stroke-width="2" stroke-dasharray="2 2.4"/><line x1="65.8" y1="44.0" x2="85.1" y2="44.0" stroke="#646464" stroke-width="2" stroke-dasharray="2 2.4"/><line x1="65.8" y1="66.0" x2="85.1" y2="66.0" stroke="#646464" stroke-width="2" stroke-dasharray="2 2.4"/><line x1="88.5" y1="42.0" x2="150.8" y2="42.0" stroke="#646464" stroke-width="2" stroke-dasharray="2 2.4"/><line x1="88.5" y1="64.0" x2="150.8" y2="64.0" stroke="#646464" stroke-width="2" stroke-dasharray="2 2.4"/><line x1="153.5" y1="44.0" x2="172.9" y2="44.0" stroke="#646464" stroke-width="2" stroke-dasharray="2 2.4"/><line x1="153.5" y1="66.0" x2="172.9" y2="66.0" stroke="#646464" stroke-width="2" stroke-dasharray="2 2.4"/><line x1="0" y1="36.0" x2="176" y2="36.0" stroke="#646464" stroke-width="2" stroke-dasharray="2 2.4"/></svg>
<svg class="abs" style="left:596px;top:1118px;z-index:2" width="134" height="70"><rect x="0" y="0" width="134" height="70" fill="#e6762f"/><rect x="0" y="0" width="134" height="2" fill="#783d18"/><rect x="0" y="0" width="2" height="70" fill="#783d18"/><rect x="0" y="32" width="134" height="2" fill="#783d18"/><rect x="46" y="34" width="2" height="36" fill="#8a471c"/><rect x="90" y="34" width="2" height="36" fill="#8a471c"/><line x1="3.9" y1="46.0" x2="64.3" y2="46.0" stroke="#7f411a" stroke-width="2" stroke-dasharray="2 2.4"/><line x1="3.9" y1="70.0" x2="64.3" y2="70.0" stroke="#7f411a" stroke-width="2" stroke-dasharray="2 2.4"/><line x1="66.6" y1="44.0" x2="86.0" y2="44.0" stroke="#7f411a" stroke-width="2" stroke-dasharray="2 2.4"/><line x1="66.6" y1="66.0" x2="86.0" y2="66.0" stroke="#7f411a" stroke-width="2" stroke-dasharray="2 2.4"/><line x1="89.4" y1="42.0" x2="133.5" y2="42.0" stroke="#7f411a" stroke-width="2" stroke-dasharray="2 2.4"/><line x1="89.4" y1="64.0" x2="133.5" y2="64.0" stroke="#7f411a" stroke-width="2" stroke-dasharray="2 2.4"/><line x1="0" y1="36.0" x2="134" y2="36.0" stroke="#7f411a" stroke-width="2" stroke-dasharray="2 2.4"/></svg>
<div style="left:730.0px;top:1118.0px;width:44.0px;height:34.0px;background:#626262;z-index:2"></div>
<svg class="abs" style="left:730px;top:1118px;z-index:2" width="44" height="70"><line x1="2.5" y1="42.0" x2="17.6" y2="42.0" stroke="#646464" stroke-width="2" stroke-dasharray="2 2.4"/><line x1="2.5" y1="64.0" x2="17.6" y2="64.0" stroke="#646464" stroke-width="2" stroke-dasharray="2 2.4"/><line x1="20.4" y1="44.0" x2="39.7" y2="44.0" stroke="#646464" stroke-width="2" stroke-dasharray="2 2.4"/><line x1="20.4" y1="66.0" x2="39.7" y2="66.0" stroke="#646464" stroke-width="2" stroke-dasharray="2 2.4"/><line x1="0" y1="36.0" x2="44" y2="36.0" stroke="#646464" stroke-width="2" stroke-dasharray="2 2.4"/></svg>
<svg class="abs" style="left:774px;top:1118px;z-index:2" width="708" height="70"><rect x="0" y="0" width="708" height="70" fill="#e6762f"/><rect x="0" y="0" width="708" height="2" fill="#783d18"/><rect x="0" y="0" width="2" height="70" fill="#783d18"/><rect x="0" y="32" width="708" height="2" fill="#783d18"/><rect x="44" y="34" width="2" height="36" fill="#8a471c"/><rect x="88" y="34" width="2" height="36" fill="#8a471c"/><rect x="132" y="34" width="2" height="36" fill="#8a471c"/><rect x="176" y="34" width="2" height="36" fill="#8a471c"/><rect x="220" y="34" width="2" height="36" fill="#8a471c"/><rect x="264" y="34" width="2" height="36" fill="#8a471c"/><rect x="310" y="34" width="2" height="36" fill="#8a471c"/><rect x="354" y="34" width="2" height="36" fill="#8a471c"/><rect x="398" y="34" width="2" height="36" fill="#8a471c"/><rect x="442" y="34" width="2" height="36" fill="#8a471c"/><rect x="486" y="34" width="2" height="36" fill="#8a471c"/><rect x="530" y="34" width="2" height="36" fill="#8a471c"/><rect x="574" y="34" width="2" height="36" fill="#8a471c"/><rect x="618" y="34" width="2" height="36" fill="#8a471c"/><rect x="662" y="34" width="2" height="36" fill="#8a471c"/><line x1="2.7" y1="46.0" x2="63.1" y2="46.0" stroke="#7f411a" stroke-width="2" stroke-dasharray="2 2.4"/><line x1="2.7" y1="70.0" x2="63.1" y2="70.0" stroke="#7f411a" stroke-width="2" stroke-dasharray="2 2.4"/><line x1="65.5" y1="44.0" x2="84.8" y2="44.0" stroke="#7f411a" stroke-width="2" stroke-dasharray="2 2.4"/><line x1="65.5" y1="66.0" x2="84.8" y2="66.0" stroke="#7f411a" stroke-width="2" stroke-dasharray="2 2.4"/><line x1="88.2" y1="42.0" x2="150.5" y2="42.0" stroke="#7f411a" stroke-width="2" stroke-dasharray="2 2.4"/><line x1="88.2" y1="64.0" x2="150.5" y2="64.0" stroke="#7f411a" stroke-width="2" stroke-dasharray="2 2.4"/><line x1="153.2" y1="44.0" x2="172.6" y2="44.0" stroke="#7f411a" stroke-width="2" stroke-dasharray="2 2.4"/><line x1="153.2" y1="66.0" x2="172.6" y2="66.0" stroke="#7f411a" stroke-width="2" stroke-dasharray="2 2.4"/><line x1="177.6" y1="46.0" x2="240.0" y2="46.0" stroke="#7f411a" stroke-width="2" stroke-dasharray="2 2.4"/><line x1="177.6" y1="70.0" x2="240.0" y2="70.0" stroke="#7f411a" stroke-width="2" stroke-dasharray="2 2.4"/><line x1="242.3" y1="44.0" x2="261.7" y2="44.0" stroke="#7f411a" stroke-width="2" stroke-dasharray="2 2.4"/><line x1="242.3" y1="66.0" x2="261.7" y2="66.0" stroke="#7f411a" stroke-width="2" stroke-dasharray="2 2.4"/><line x1="265.1" y1="42.0" x2="327.3" y2="42.0" stroke="#7f411a" stroke-width="2" stroke-dasharray="2 2.4"/><line x1="265.1" y1="64.0" x2="327.3" y2="64.0" stroke="#7f411a" stroke-width="2" stroke-dasharray="2 2.4"/><line x1="330.1" y1="44.0" x2="349.4" y2="44.0" stroke="#7f411a" stroke-width="2" stroke-dasharray="2 2.4"/><line x1="330.1" y1="66.0" x2="349.4" y2="66.0" stroke="#7f411a" stroke-width="2" stroke-dasharray="2 2.4"/><line x1="354.4" y1="46.0" x2="416.8" y2="46.0" stroke="#7f411a" stroke-width="2" stroke-dasharray="2 2.4"/><line x1="354.4" y1="70.0" x2="416.8" y2="70.0" stroke="#7f411a" stroke-width="2" stroke-dasharray="2 2.4"/><line x1="419.2" y1="44.0" x2="438.5" y2="44.0" stroke="#7f411a" stroke-width="2" stroke-dasharray="2 2.4"/><line x1="419.2" y1="66.0" x2="438.5" y2="66.0" stroke="#7f411a" stroke-width="2" stroke-dasharray="2 2.4"/><line x1="441.9" y1="42.0" x2="504.2" y2="42.0" stroke="#7f411a" stroke-width="2" stroke-dasharray="2 2.4"/><line x1="441.9" y1="64.0" x2="504.2" y2="64.0" stroke="#7f411a" stroke-width="2" stroke-dasharray="2 2.4"/><line x1="506.9" y1="44.0" x2="526.3" y2="44.0" stroke="#7f411a" stroke-width="2" stroke-dasharray="2 2.4"/><line x1="506.9" y1="66.0" x2="526.3" y2="66.0" stroke="#7f411a" stroke-width="2" stroke-dasharray="2 2.4"/><line x1="531.2" y1="46.0" x2="593.7" y2="46.0" stroke="#7f411a" stroke-width="2" stroke-dasharray="2 2.4"/><line x1="531.2" y1="70.0" x2="593.7" y2="70.0" stroke="#7f411a" stroke-width="2" stroke-dasharray="2 2.4"/><line x1="596.0" y1="44.0" x2="615.4" y2="44.0" stroke="#7f411a" stroke-width="2" stroke-dasharray="2 2.4"/><line x1="596.0" y1="66.0" x2="615.4" y2="66.0" stroke="#7f411a" stroke-width="2" stroke-dasharray="2 2.4"/><line x1="618.8" y1="42.0" x2="681.0" y2="42.0" stroke="#7f411a" stroke-width="2" stroke-dasharray="2 2.4"/><line x1="618.8" y1="64.0" x2="681.0" y2="64.0" stroke="#7f411a" stroke-width="2" stroke-dasharray="2 2.4"/><line x1="683.8" y1="44.0" x2="703.1" y2="44.0" stroke="#7f411a" stroke-width="2" stroke-dasharray="2 2.4"/><line x1="683.8" y1="66.0" x2="703.1" y2="66.0" stroke="#7f411a" stroke-width="2" stroke-dasharray="2 2.4"/><line x1="0" y1="36.0" x2="708" y2="36.0" stroke="#7f411a" stroke-width="2" stroke-dasharray="2 2.4"/><rect x="354" y="0" width="2" height="32" fill="#783d18"/><rect x="662" y="0" width="2" height="32" fill="#783d18"/><rect x="176" y="3" width="2" height="5" fill="#1a1208"/><rect x="176" y="64" width="2" height="6" fill="#1a1208"/><rect x="530" y="3" width="2" height="5" fill="#1a1208"/><rect x="530" y="64" width="2" height="6" fill="#1a1208"/></svg>
<div style="left:1482.0px;top:1118.0px;width:176.0px;height:34.0px;background:#626262;z-index:2"></div>
<svg class="abs" style="left:1482px;top:1118px;z-index:2" width="176" height="70"><line x1="2.1" y1="46.0" x2="62.5" y2="46.0" stroke="#646464" stroke-width="2" stroke-dasharray="2 2.4"/><line x1="2.1" y1="70.0" x2="62.5" y2="70.0" stroke="#646464" stroke-width="2" stroke-dasharray="2 2.4"/><line x1="64.9" y1="44.0" x2="84.2" y2="44.0" stroke="#646464" stroke-width="2" stroke-dasharray="2 2.4"/><line x1="64.9" y1="66.0" x2="84.2" y2="66.0" stroke="#646464" stroke-width="2" stroke-dasharray="2 2.4"/><line x1="87.6" y1="42.0" x2="149.9" y2="42.0" stroke="#646464" stroke-width="2" stroke-dasharray="2 2.4"/><line x1="87.6" y1="64.0" x2="149.9" y2="64.0" stroke="#646464" stroke-width="2" stroke-dasharray="2 2.4"/><line x1="152.6" y1="44.0" x2="172.0" y2="44.0" stroke="#646464" stroke-width="2" stroke-dasharray="2 2.4"/><line x1="152.6" y1="66.0" x2="172.0" y2="66.0" stroke="#646464" stroke-width="2" stroke-dasharray="2 2.4"/><line x1="0" y1="36.0" x2="176" y2="36.0" stroke="#646464" stroke-width="2" stroke-dasharray="2 2.4"/></svg>
<svg class="abs" style="left:1658px;top:1118px;z-index:2" width="132" height="70"><rect x="0" y="0" width="132" height="70" fill="#e6762f"/><rect x="0" y="0" width="132" height="2" fill="#783d18"/><rect x="0" y="0" width="2" height="70" fill="#783d18"/><rect x="0" y="32" width="132" height="2" fill="#783d18"/><rect x="44" y="34" width="2" height="36" fill="#8a471c"/><rect x="88" y="34" width="2" height="36" fill="#8a471c"/><line x1="2.9" y1="46.0" x2="63.4" y2="46.0" stroke="#7f411a" stroke-width="2" stroke-dasharray="2 2.4"/><line x1="2.9" y1="70.0" x2="63.4" y2="70.0" stroke="#7f411a" stroke-width="2" stroke-dasharray="2 2.4"/><line x1="65.7" y1="44.0" x2="85.1" y2="44.0" stroke="#7f411a" stroke-width="2" stroke-dasharray="2 2.4"/><line x1="65.7" y1="66.0" x2="85.1" y2="66.0" stroke="#7f411a" stroke-width="2" stroke-dasharray="2 2.4"/><line x1="88.5" y1="42.0" x2="132.0" y2="42.0" stroke="#7f411a" stroke-width="2" stroke-dasharray="2 2.4"/><line x1="88.5" y1="64.0" x2="132.0" y2="64.0" stroke="#7f411a" stroke-width="2" stroke-dasharray="2 2.4"/><line x1="0" y1="36.0" x2="132" y2="36.0" stroke="#7f411a" stroke-width="2" stroke-dasharray="2 2.4"/></svg>
<div style="left:1790.0px;top:1118.0px;width:44.0px;height:34.0px;background:#626262;z-index:2"></div>
<svg class="abs" style="left:1790px;top:1118px;z-index:2" width="44" height="70"><line x1="3.6" y1="42.0" x2="18.7" y2="42.0" stroke="#646464" stroke-width="2" stroke-dasharray="2 2.4"/><line x1="3.6" y1="64.0" x2="18.7" y2="64.0" stroke="#646464" stroke-width="2" stroke-dasharray="2 2.4"/><line x1="21.5" y1="44.0" x2="40.8" y2="44.0" stroke="#646464" stroke-width="2" stroke-dasharray="2 2.4"/><line x1="21.5" y1="66.0" x2="40.8" y2="66.0" stroke="#646464" stroke-width="2" stroke-dasharray="2 2.4"/><line x1="0" y1="36.0" x2="44" y2="36.0" stroke="#646464" stroke-width="2" stroke-dasharray="2 2.4"/></svg>
<svg class="abs" style="left:1834px;top:1118px;z-index:2" width="532" height="70"><rect x="0" y="0" width="532" height="70" fill="#e6762f"/><rect x="0" y="0" width="532" height="2" fill="#783d18"/><rect x="0" y="0" width="2" height="70" fill="#783d18"/><rect x="0" y="32" width="532" height="2" fill="#783d18"/><rect x="46" y="34" width="2" height="36" fill="#8a471c"/><rect x="90" y="34" width="2" height="36" fill="#8a471c"/><rect x="134" y="34" width="2" height="36" fill="#8a471c"/><rect x="178" y="34" width="2" height="36" fill="#8a471c"/><rect x="222" y="34" width="2" height="36" fill="#8a471c"/><rect x="266" y="34" width="2" height="36" fill="#8a471c"/><rect x="310" y="34" width="2" height="36" fill="#8a471c"/><rect x="354" y="34" width="2" height="36" fill="#8a471c"/><rect x="398" y="34" width="2" height="36" fill="#8a471c"/><rect x="442" y="34" width="2" height="36" fill="#8a471c"/><rect x="488" y="34" width="2" height="36" fill="#8a471c"/><line x1="3.8" y1="46.0" x2="64.2" y2="46.0" stroke="#7f411a" stroke-width="2" stroke-dasharray="2 2.4"/><line x1="3.8" y1="70.0" x2="64.2" y2="70.0" stroke="#7f411a" stroke-width="2" stroke-dasharray="2 2.4"/><line x1="66.6" y1="44.0" x2="85.9" y2="44.0" stroke="#7f411a" stroke-width="2" stroke-dasharray="2 2.4"/><line x1="66.6" y1="66.0" x2="85.9" y2="66.0" stroke="#7f411a" stroke-width="2" stroke-dasharray="2 2.4"/><line x1="89.3" y1="42.0" x2="151.6" y2="42.0" stroke="#7f411a" stroke-width="2" stroke-dasharray="2 2.4"/><line x1="89.3" y1="64.0" x2="151.6" y2="64.0" stroke="#7f411a" stroke-width="2" stroke-dasharray="2 2.4"/><line x1="154.3" y1="44.0" x2="173.7" y2="44.0" stroke="#7f411a" stroke-width="2" stroke-dasharray="2 2.4"/><line x1="154.3" y1="66.0" x2="173.7" y2="66.0" stroke="#7f411a" stroke-width="2" stroke-dasharray="2 2.4"/><line x1="178.6" y1="46.0" x2="241.1" y2="46.0" stroke="#7f411a" stroke-width="2" stroke-dasharray="2 2.4"/><line x1="178.6" y1="70.0" x2="241.1" y2="70.0" stroke="#7f411a" stroke-width="2" stroke-dasharray="2 2.4"/><line x1="243.4" y1="44.0" x2="262.7" y2="44.0" stroke="#7f411a" stroke-width="2" stroke-dasharray="2 2.4"/><line x1="243.4" y1="66.0" x2="262.7" y2="66.0" stroke="#7f411a" stroke-width="2" stroke-dasharray="2 2.4"/><line x1="266.2" y1="42.0" x2="328.4" y2="42.0" stroke="#7f411a" stroke-width="2" stroke-dasharray="2 2.4"/><line x1="266.2" y1="64.0" x2="328.4" y2="64.0" stroke="#7f411a" stroke-width="2" stroke-dasharray="2 2.4"/><line x1="331.2" y1="44.0" x2="350.5" y2="44.0" stroke="#7f411a" stroke-width="2" stroke-dasharray="2 2.4"/><line x1="331.2" y1="66.0" x2="350.5" y2="66.0" stroke="#7f411a" stroke-width="2" stroke-dasharray="2 2.4"/><line x1="355.5" y1="46.0" x2="417.9" y2="46.0" stroke="#7f411a" stroke-width="2" stroke-dasharray="2 2.4"/><line x1="355.5" y1="70.0" x2="417.9" y2="70.0" stroke="#7f411a" stroke-width="2" stroke-dasharray="2 2.4"/><line x1="420.3" y1="44.0" x2="439.6" y2="44.0" stroke="#7f411a" stroke-width="2" stroke-dasharray="2 2.4"/><line x1="420.3" y1="66.0" x2="439.6" y2="66.0" stroke="#7f411a" stroke-width="2" stroke-dasharray="2 2.4"/><line x1="443.0" y1="42.0" x2="505.3" y2="42.0" stroke="#7f411a" stroke-width="2" stroke-dasharray="2 2.4"/><line x1="443.0" y1="64.0" x2="505.3" y2="64.0" stroke="#7f411a" stroke-width="2" stroke-dasharray="2 2.4"/><line x1="508.0" y1="44.0" x2="527.4" y2="44.0" stroke="#7f411a" stroke-width="2" stroke-dasharray="2 2.4"/><line x1="508.0" y1="66.0" x2="527.4" y2="66.0" stroke="#7f411a" stroke-width="2" stroke-dasharray="2 2.4"/><line x1="0" y1="36.0" x2="532" y2="36.0" stroke="#7f411a" stroke-width="2" stroke-dasharray="2 2.4"/><rect x="354" y="0" width="2" height="32" fill="#783d18"/><rect x="488" y="0" width="2" height="32" fill="#783d18"/><rect x="178" y="3" width="2" height="5" fill="#1a1208"/><rect x="178" y="64" width="2" height="6" fill="#1a1208"/></svg>
<svg class="abs" style="left:66px;top:1192px;z-index:2" width="354" height="34"><rect x="0" y="0" width="354" height="34" fill="#e6762f"/><rect x="0" y="0" width="354" height="2" fill="#783d18"/><rect x="0" y="0" width="2" height="34" fill="#783d18"/><rect x="0" y="32" width="354" height="2" fill="#783d18"/><rect x="178" y="3" width="2" height="5" fill="#1a1208"/><rect x="178" y="26" width="2" height="5" fill="#1a1208"/></svg>
<div style="left:420.0px;top:1192.0px;width:176.0px;height:34.0px;background:#626262;z-index:2"></div>
<svg class="abs" style="left:596px;top:1192px;z-index:2" width="134" height="34"><rect x="0" y="0" width="134" height="34" fill="#e6762f"/><rect x="0" y="0" width="134" height="2" fill="#783d18"/><rect x="0" y="0" width="2" height="34" fill="#783d18"/><rect x="0" y="32" width="134" height="2" fill="#783d18"/></svg>
<div style="left:730.0px;top:1192.0px;width:44.0px;height:34.0px;background:#626262;z-index:2"></div>
<svg class="abs" style="left:774px;top:1192px;z-index:2" width="708" height="34"><rect x="0" y="0" width="708" height="34" fill="#e6762f"/><rect x="0" y="0" width="708" height="2" fill="#783d18"/><rect x="0" y="0" width="2" height="34" fill="#783d18"/><rect x="0" y="32" width="708" height="2" fill="#783d18"/><rect x="354" y="0" width="2" height="34" fill="#783d18"/><rect x="662" y="0" width="2" height="34" fill="#783d18"/><rect x="176" y="3" width="2" height="5" fill="#1a1208"/><rect x="176" y="26" width="2" height="5" fill="#1a1208"/><rect x="530" y="3" width="2" height="5" fill="#1a1208"/><rect x="530" y="26" width="2" height="5" fill="#1a1208"/></svg>
<div style="left:1482.0px;top:1192.0px;width:176.0px;height:34.0px;background:#626262;z-index:2"></div>
<svg class="abs" style="left:1658px;top:1192px;z-index:2" width="132" height="34"><rect x="0" y="0" width="132" height="34" fill="#e6762f"/><rect x="0" y="0" width="132" height="2" fill="#783d18"/><rect x="0" y="0" width="2" height="34" fill="#783d18"/><rect x="0" y="32" width="132" height="2" fill="#783d18"/></svg>
<div style="left:1790.0px;top:1192.0px;width:44.0px;height:34.0px;background:#626262;z-index:2"></div>
<svg class="abs" style="left:1834px;top:1192px;z-index:2" width="532" height="34"><rect x="0" y="0" width="532" height="34" fill="#e6762f"/><rect x="0" y="0" width="532" height="2" fill="#783d18"/><rect x="0" y="0" width="2" height="34" fill="#783d18"/><rect x="0" y="32" width="532" height="2" fill="#783d18"/><rect x="354" y="0" width="2" height="34" fill="#783d18"/><rect x="488" y="0" width="2" height="34" fill="#783d18"/><rect x="178" y="3" width="2" height="5" fill="#1a1208"/><rect x="178" y="26" width="2" height="5" fill="#1a1208"/></svg>
<svg class="abs" style="left:66px;top:1230px;z-index:2" width="354" height="70"><rect x="0" y="0" width="354" height="70" fill="#e6762f"/><rect x="0" y="0" width="354" height="2" fill="#783d18"/><rect x="0" y="0" width="2" height="70" fill="#783d18"/><rect x="0" y="32" width="354" height="2" fill="#783d18"/><rect x="44" y="34" width="2" height="36" fill="#8a471c"/><rect x="88" y="34" width="2" height="36" fill="#8a471c"/><rect x="132" y="34" width="2" height="36" fill="#8a471c"/><rect x="178" y="34" width="2" height="36" fill="#8a471c"/><rect x="222" y="34" width="2" height="36" fill="#8a471c"/><rect x="266" y="34" width="2" height="36" fill="#8a471c"/><rect x="310" y="34" width="2" height="36" fill="#8a471c"/><line x1="3.3" y1="46.0" x2="63.8" y2="46.0" stroke="#7f411a" stroke-width="2" stroke-dasharray="2 2.4"/><line x1="3.3" y1="70.0" x2="63.8" y2="70.0" stroke="#7f411a" stroke-width="2" stroke-dasharray="2 2.4"/><line x1="66.1" y1="44.0" x2="85.4" y2="44.0" stroke="#7f411a" stroke-width="2" stroke-dasharray="2 2.4"/><line x1="66.1" y1="66.0" x2="85.4" y2="66.0" stroke="#7f411a" stroke-width="2" stroke-dasharray="2 2.4"/><line x1="88.9" y1="42.0" x2="151.1" y2="42.0" stroke="#7f411a" stroke-width="2" stroke-dasharray="2 2.4"/><line x1="88.9" y1="64.0" x2="151.1" y2="64.0" stroke="#7f411a" stroke-width="2" stroke-dasharray="2 2.4"/><line x1="153.8" y1="44.0" x2="173.2" y2="44.0" stroke="#7f411a" stroke-width="2" stroke-dasharray="2 2.4"/><line x1="153.8" y1="66.0" x2="173.2" y2="66.0" stroke="#7f411a" stroke-width="2" stroke-dasharray="2 2.4"/><line x1="178.2" y1="46.0" x2="240.6" y2="46.0" stroke="#7f411a" stroke-width="2" stroke-dasharray="2 2.4"/><line x1="178.2" y1="70.0" x2="240.6" y2="70.0" stroke="#7f411a" stroke-width="2" stroke-dasharray="2 2.4"/><line x1="242.9" y1="44.0" x2="262.3" y2="44.0" stroke="#7f411a" stroke-width="2" stroke-dasharray="2 2.4"/><line x1="242.9" y1="66.0" x2="262.3" y2="66.0" stroke="#7f411a" stroke-width="2" stroke-dasharray="2 2.4"/><line x1="265.7" y1="42.0" x2="327.9" y2="42.0" stroke="#7f411a" stroke-width="2" stroke-dasharray="2 2.4"/><line x1="265.7" y1="64.0" x2="327.9" y2="64.0" stroke="#7f411a" stroke-width="2" stroke-dasharray="2 2.4"/><line x1="330.7" y1="44.0" x2="350.0" y2="44.0" stroke="#7f411a" stroke-width="2" stroke-dasharray="2 2.4"/><line x1="330.7" y1="66.0" x2="350.0" y2="66.0" stroke="#7f411a" stroke-width="2" stroke-dasharray="2 2.4"/><line x1="0" y1="36.0" x2="354" y2="36.0" stroke="#7f411a" stroke-width="2" stroke-dasharray="2 2.4"/><rect x="178" y="3" width="2" height="5" fill="#1a1208"/><rect x="178" y="64" width="2" height="6" fill="#1a1208"/></svg>
<div style="left:420.0px;top:1230.0px;width:176.0px;height:34.0px;background:#626262;z-index:2"></div>
<svg class="abs" style="left:420px;top:1230px;z-index:2" width="176" height="70"><line x1="3.0" y1="46.0" x2="63.5" y2="46.0" stroke="#646464" stroke-width="2" stroke-dasharray="2 2.4"/><line x1="3.0" y1="70.0" x2="63.5" y2="70.0" stroke="#646464" stroke-width="2" stroke-dasharray="2 2.4"/><line x1="65.8" y1="44.0" x2="85.1" y2="44.0" stroke="#646464" stroke-width="2" stroke-dasharray="2 2.4"/><line x1="65.8" y1="66.0" x2="85.1" y2="66.0" stroke="#646464" stroke-width="2" stroke-dasharray="2 2.4"/><line x1="88.5" y1="42.0" x2="150.8" y2="42.0" stroke="#646464" stroke-width="2" stroke-dasharray="2 2.4"/><line x1="88.5" y1="64.0" x2="150.8" y2="64.0" stroke="#646464" stroke-width="2" stroke-dasharray="2 2.4"/><line x1="153.5" y1="44.0" x2="172.9" y2="44.0" stroke="#646464" stroke-width="2" stroke-dasharray="2 2.4"/><line x1="153.5" y1="66.0" x2="172.9" y2="66.0" stroke="#646464" stroke-width="2" stroke-dasharray="2 2.4"/><line x1="0" y1="36.0" x2="176" y2="36.0" stroke="#646464" stroke-width="2" stroke-dasharray="2 2.4"/></svg>
<svg class="abs" style="left:596px;top:1230px;z-index:2" width="134" height="70"><rect x="0" y="0" width="134" height="70" fill="#e6762f"/><rect x="0" y="0" width="134" height="2" fill="#783d18"/><rect x="0" y="0" width="2" height="70" fill="#783d18"/><rect x="0" y="32" width="134" height="2" fill="#783d18"/><rect x="46" y="34" width="2" height="36" fill="#8a471c"/><rect x="90" y="34" width="2" height="36" fill="#8a471c"/><line x1="3.9" y1="46.0" x2="64.3" y2="46.0" stroke="#7f411a" stroke-width="2" stroke-dasharray="2 2.4"/><line x1="3.9" y1="70.0" x2="64.3" y2="70.0" stroke="#7f411a" stroke-width="2" stroke-dasharray="2 2.4"/><line x1="66.6" y1="44.0" x2="86.0" y2="44.0" stroke="#7f411a" stroke-width="2" stroke-dasharray="2 2.4"/><line x1="66.6" y1="66.0" x2="86.0" y2="66.0" stroke="#7f411a" stroke-width="2" stroke-dasharray="2 2.4"/><line x1="89.4" y1="42.0" x2="133.5" y2="42.0" stroke="#7f411a" stroke-width="2" stroke-dasharray="2 2.4"/><line x1="89.4" y1="64.0" x2="133.5" y2="64.0" stroke="#7f411a" stroke-width="2" stroke-dasharray="2 2.4"/><line x1="0" y1="36.0" x2="134" y2="36.0" stroke="#7f411a" stroke-width="2" stroke-dasharray="2 2.4"/></svg>
<div style="left:730.0px;top:1230.0px;width:44.0px;height:34.0px;background:#626262;z-index:2"></div>
<svg class="abs" style="left:730px;top:1230px;z-index:2" width="44" height="70"><line x1="2.5" y1="42.0" x2="17.6" y2="42.0" stroke="#646464" stroke-width="2" stroke-dasharray="2 2.4"/><line x1="2.5" y1="64.0" x2="17.6" y2="64.0" stroke="#646464" stroke-width="2" stroke-dasharray="2 2.4"/><line x1="20.4" y1="44.0" x2="39.7" y2="44.0" stroke="#646464" stroke-width="2" stroke-dasharray="2 2.4"/><line x1="20.4" y1="66.0" x2="39.7" y2="66.0" stroke="#646464" stroke-width="2" stroke-dasharray="2 2.4"/><line x1="0" y1="36.0" x2="44" y2="36.0" stroke="#646464" stroke-width="2" stroke-dasharray="2 2.4"/></svg>
<svg class="abs" style="left:774px;top:1230px;z-index:2" width="708" height="70"><rect x="0" y="0" width="708" height="70" fill="#e6762f"/><rect x="0" y="0" width="708" height="2" fill="#783d18"/><rect x="0" y="0" width="2" height="70" fill="#783d18"/><rect x="0" y="32" width="708" height="2" fill="#783d18"/><rect x="44" y="34" width="2" height="36" fill="#8a471c"/><rect x="88" y="34" width="2" height="36" fill="#8a471c"/><rect x="132" y="34" width="2" height="36" fill="#8a471c"/><rect x="176" y="34" width="2" height="36" fill="#8a471c"/><rect x="220" y="34" width="2" height="36" fill="#8a471c"/><rect x="264" y="34" width="2" height="36" fill="#8a471c"/><rect x="310" y="34" width="2" height="36" fill="#8a471c"/><rect x="354" y="34" width="2" height="36" fill="#8a471c"/><rect x="398" y="34" width="2" height="36" fill="#8a471c"/><rect x="442" y="34" width="2" height="36" fill="#8a471c"/><rect x="486" y="34" width="2" height="36" fill="#8a471c"/><rect x="530" y="34" width="2" height="36" fill="#8a471c"/><rect x="574" y="34" width="2" height="36" fill="#8a471c"/><rect x="618" y="34" width="2" height="36" fill="#8a471c"/><rect x="662" y="34" width="2" height="36" fill="#8a471c"/><line x1="2.7" y1="46.0" x2="63.1" y2="46.0" stroke="#7f411a" stroke-width="2" stroke-dasharray="2 2.4"/><line x1="2.7" y1="70.0" x2="63.1" y2="70.0" stroke="#7f411a" stroke-width="2" stroke-dasharray="2 2.4"/><line x1="65.5" y1="44.0" x2="84.8" y2="44.0" stroke="#7f411a" stroke-width="2" stroke-dasharray="2 2.4"/><line x1="65.5" y1="66.0" x2="84.8" y2="66.0" stroke="#7f411a" stroke-width="2" stroke-dasharray="2 2.4"/><line x1="88.2" y1="42.0" x2="150.5" y2="42.0" stroke="#7f411a" stroke-width="2" stroke-dasharray="2 2.4"/><line x1="88.2" y1="64.0" x2="150.5" y2="64.0" stroke="#7f411a" stroke-width="2" stroke-dasharray="2 2.4"/><line x1="153.2" y1="44.0" x2="172.6" y2="44.0" stroke="#7f411a" stroke-width="2" stroke-dasharray="2 2.4"/><line x1="153.2" y1="66.0" x2="172.6" y2="66.0" stroke="#7f411a" stroke-width="2" stroke-dasharray="2 2.4"/><line x1="177.6" y1="46.0" x2="240.0" y2="46.0" stroke="#7f411a" stroke-width="2" stroke-dasharray="2 2.4"/><line x1="177.6" y1="70.0" x2="240.0" y2="70.0" stroke="#7f411a" stroke-width="2" stroke-dasharray="2 2.4"/><line x1="242.3" y1="44.0" x2="261.7" y2="44.0" stroke="#7f411a" stroke-width="2" stroke-dasharray="2 2.4"/><line x1="242.3" y1="66.0" x2="261.7" y2="66.0" stroke="#7f411a" stroke-width="2" stroke-dasharray="2 2.4"/><line x1="265.1" y1="42.0" x2="327.3" y2="42.0" stroke="#7f411a" stroke-width="2" stroke-dasharray="2 2.4"/><line x1="265.1" y1="64.0" x2="327.3" y2="64.0" stroke="#7f411a" stroke-width="2" stroke-dasharray="2 2.4"/><line x1="330.1" y1="44.0" x2="349.4" y2="44.0" stroke="#7f411a" stroke-width="2" stroke-dasharray="2 2.4"/><line x1="330.1" y1="66.0" x2="349.4" y2="66.0" stroke="#7f411a" stroke-width="2" stroke-dasharray="2 2.4"/><line x1="354.4" y1="46.0" x2="416.8" y2="46.0" stroke="#7f411a" stroke-width="2" stroke-dasharray="2 2.4"/><line x1="354.4" y1="70.0" x2="416.8" y2="70.0" stroke="#7f411a" stroke-width="2" stroke-dasharray="2 2.4"/><line x1="419.2" y1="44.0" x2="438.5" y2="44.0" stroke="#7f411a" stroke-width="2" stroke-dasharray="2 2.4"/><line x1="419.2" y1="66.0" x2="438.5" y2="66.0" stroke="#7f411a" stroke-width="2" stroke-dasharray="2 2.4"/><line x1="441.9" y1="42.0" x2="504.2" y2="42.0" stroke="#7f411a" stroke-width="2" stroke-dasharray="2 2.4"/><line x1="441.9" y1="64.0" x2="504.2" y2="64.0" stroke="#7f411a" stroke-width="2" stroke-dasharray="2 2.4"/><line x1="506.9" y1="44.0" x2="526.3" y2="44.0" stroke="#7f411a" stroke-width="2" stroke-dasharray="2 2.4"/><line x1="506.9" y1="66.0" x2="526.3" y2="66.0" stroke="#7f411a" stroke-width="2" stroke-dasharray="2 2.4"/><line x1="531.2" y1="46.0" x2="593.7" y2="46.0" stroke="#7f411a" stroke-width="2" stroke-dasharray="2 2.4"/><line x1="531.2" y1="70.0" x2="593.7" y2="70.0" stroke="#7f411a" stroke-width="2" stroke-dasharray="2 2.4"/><line x1="596.0" y1="44.0" x2="615.4" y2="44.0" stroke="#7f411a" stroke-width="2" stroke-dasharray="2 2.4"/><line x1="596.0" y1="66.0" x2="615.4" y2="66.0" stroke="#7f411a" stroke-width="2" stroke-dasharray="2 2.4"/><line x1="618.8" y1="42.0" x2="681.0" y2="42.0" stroke="#7f411a" stroke-width="2" stroke-dasharray="2 2.4"/><line x1="618.8" y1="64.0" x2="681.0" y2="64.0" stroke="#7f411a" stroke-width="2" stroke-dasharray="2 2.4"/><line x1="683.8" y1="44.0" x2="703.1" y2="44.0" stroke="#7f411a" stroke-width="2" stroke-dasharray="2 2.4"/><line x1="683.8" y1="66.0" x2="703.1" y2="66.0" stroke="#7f411a" stroke-width="2" stroke-dasharray="2 2.4"/><line x1="0" y1="36.0" x2="708" y2="36.0" stroke="#7f411a" stroke-width="2" stroke-dasharray="2 2.4"/><rect x="354" y="0" width="2" height="32" fill="#783d18"/><rect x="662" y="0" width="2" height="32" fill="#783d18"/><rect x="176" y="3" width="2" height="5" fill="#1a1208"/><rect x="176" y="64" width="2" height="6" fill="#1a1208"/><rect x="530" y="3" width="2" height="5" fill="#1a1208"/><rect x="530" y="64" width="2" height="6" fill="#1a1208"/></svg>
<div style="left:1482.0px;top:1230.0px;width:176.0px;height:34.0px;background:#626262;z-index:2"></div>
<svg class="abs" style="left:1482px;top:1230px;z-index:2" width="176" height="70"><line x1="2.1" y1="46.0" x2="62.5" y2="46.0" stroke="#646464" stroke-width="2" stroke-dasharray="2 2.4"/><line x1="2.1" y1="70.0" x2="62.5" y2="70.0" stroke="#646464" stroke-width="2" stroke-dasharray="2 2.4"/><line x1="64.9" y1="44.0" x2="84.2" y2="44.0" stroke="#646464" stroke-width="2" stroke-dasharray="2 2.4"/><line x1="64.9" y1="66.0" x2="84.2" y2="66.0" stroke="#646464" stroke-width="2" stroke-dasharray="2 2.4"/><line x1="87.6" y1="42.0" x2="149.9" y2="42.0" stroke="#646464" stroke-width="2" stroke-dasharray="2 2.4"/><line x1="87.6" y1="64.0" x2="149.9" y2="64.0" stroke="#646464" stroke-width="2" stroke-dasharray="2 2.4"/><line x1="152.6" y1="44.0" x2="172.0" y2="44.0" stroke="#646464" stroke-width="2" stroke-dasharray="2 2.4"/><line x1="152.6" y1="66.0" x2="172.0" y2="66.0" stroke="#646464" stroke-width="2" stroke-dasharray="2 2.4"/><line x1="0" y1="36.0" x2="176" y2="36.0" stroke="#646464" stroke-width="2" stroke-dasharray="2 2.4"/></svg>
<svg class="abs" style="left:1658px;top:1230px;z-index:2" width="132" height="70"><rect x="0" y="0" width="132" height="70" fill="#e6762f"/><rect x="0" y="0" width="132" height="2" fill="#783d18"/><rect x="0" y="0" width="2" height="70" fill="#783d18"/><rect x="0" y="32" width="132" height="2" fill="#783d18"/><rect x="44" y="34" width="2" height="36" fill="#8a471c"/><rect x="88" y="34" width="2" height="36" fill="#8a471c"/><line x1="2.9" y1="46.0" x2="63.4" y2="46.0" stroke="#7f411a" stroke-width="2" stroke-dasharray="2 2.4"/><line x1="2.9" y1="70.0" x2="63.4" y2="70.0" stroke="#7f411a" stroke-width="2" stroke-dasharray="2 2.4"/><line x1="65.7" y1="44.0" x2="85.1" y2="44.0" stroke="#7f411a" stroke-width="2" stroke-dasharray="2 2.4"/><line x1="65.7" y1="66.0" x2="85.1" y2="66.0" stroke="#7f411a" stroke-width="2" stroke-dasharray="2 2.4"/><line x1="88.5" y1="42.0" x2="132.0" y2="42.0" stroke="#7f411a" stroke-width="2" stroke-dasharray="2 2.4"/><line x1="88.5" y1="64.0" x2="132.0" y2="64.0" stroke="#7f411a" stroke-width="2" stroke-dasharray="2 2.4"/><line x1="0" y1="36.0" x2="132" y2="36.0" stroke="#7f411a" stroke-width="2" stroke-dasharray="2 2.4"/></svg>
<div style="left:1790.0px;top:1230.0px;width:44.0px;height:34.0px;background:#626262;z-index:2"></div>
<svg class="abs" style="left:1790px;top:1230px;z-index:2" width="44" height="70"><line x1="3.6" y1="42.0" x2="18.7" y2="42.0" stroke="#646464" stroke-width="2" stroke-dasharray="2 2.4"/><line x1="3.6" y1="64.0" x2="18.7" y2="64.0" stroke="#646464" stroke-width="2" stroke-dasharray="2 2.4"/><line x1="21.5" y1="44.0" x2="40.8" y2="44.0" stroke="#646464" stroke-width="2" stroke-dasharray="2 2.4"/><line x1="21.5" y1="66.0" x2="40.8" y2="66.0" stroke="#646464" stroke-width="2" stroke-dasharray="2 2.4"/><line x1="0" y1="36.0" x2="44" y2="36.0" stroke="#646464" stroke-width="2" stroke-dasharray="2 2.4"/></svg>
<svg class="abs" style="left:1834px;top:1230px;z-index:2" width="532" height="70"><rect x="0" y="0" width="532" height="70" fill="#e6762f"/><rect x="0" y="0" width="532" height="2" fill="#783d18"/><rect x="0" y="0" width="2" height="70" fill="#783d18"/><rect x="0" y="32" width="532" height="2" fill="#783d18"/><rect x="46" y="34" width="2" height="36" fill="#8a471c"/><rect x="90" y="34" width="2" height="36" fill="#8a471c"/><rect x="134" y="34" width="2" height="36" fill="#8a471c"/><rect x="178" y="34" width="2" height="36" fill="#8a471c"/><rect x="222" y="34" width="2" height="36" fill="#8a471c"/><rect x="266" y="34" width="2" height="36" fill="#8a471c"/><rect x="310" y="34" width="2" height="36" fill="#8a471c"/><rect x="354" y="34" width="2" height="36" fill="#8a471c"/><rect x="398" y="34" width="2" height="36" fill="#8a471c"/><rect x="442" y="34" width="2" height="36" fill="#8a471c"/><rect x="488" y="34" width="2" height="36" fill="#8a471c"/><line x1="3.8" y1="46.0" x2="64.2" y2="46.0" stroke="#7f411a" stroke-width="2" stroke-dasharray="2 2.4"/><line x1="3.8" y1="70.0" x2="64.2" y2="70.0" stroke="#7f411a" stroke-width="2" stroke-dasharray="2 2.4"/><line x1="66.6" y1="44.0" x2="85.9" y2="44.0" stroke="#7f411a" stroke-width="2" stroke-dasharray="2 2.4"/><line x1="66.6" y1="66.0" x2="85.9" y2="66.0" stroke="#7f411a" stroke-width="2" stroke-dasharray="2 2.4"/><line x1="89.3" y1="42.0" x2="151.6" y2="42.0" stroke="#7f411a" stroke-width="2" stroke-dasharray="2 2.4"/><line x1="89.3" y1="64.0" x2="151.6" y2="64.0" stroke="#7f411a" stroke-width="2" stroke-dasharray="2 2.4"/><line x1="154.3" y1="44.0" x2="173.7" y2="44.0" stroke="#7f411a" stroke-width="2" stroke-dasharray="2 2.4"/><line x1="154.3" y1="66.0" x2="173.7" y2="66.0" stroke="#7f411a" stroke-width="2" stroke-dasharray="2 2.4"/><line x1="178.6" y1="46.0" x2="241.1" y2="46.0" stroke="#7f411a" stroke-width="2" stroke-dasharray="2 2.4"/><line x1="178.6" y1="70.0" x2="241.1" y2="70.0" stroke="#7f411a" stroke-width="2" stroke-dasharray="2 2.4"/><line x1="243.4" y1="44.0" x2="262.7" y2="44.0" stroke="#7f411a" stroke-width="2" stroke-dasharray="2 2.4"/><line x1="243.4" y1="66.0" x2="262.7" y2="66.0" stroke="#7f411a" stroke-width="2" stroke-dasharray="2 2.4"/><line x1="266.2" y1="42.0" x2="328.4" y2="42.0" stroke="#7f411a" stroke-width="2" stroke-dasharray="2 2.4"/><line x1="266.2" y1="64.0" x2="328.4" y2="64.0" stroke="#7f411a" stroke-width="2" stroke-dasharray="2 2.4"/><line x1="331.2" y1="44.0" x2="350.5" y2="44.0" stroke="#7f411a" stroke-width="2" stroke-dasharray="2 2.4"/><line x1="331.2" y1="66.0" x2="350.5" y2="66.0" stroke="#7f411a" stroke-width="2" stroke-dasharray="2 2.4"/><line x1="355.5" y1="46.0" x2="417.9" y2="46.0" stroke="#7f411a" stroke-width="2" stroke-dasharray="2 2.4"/><line x1="355.5" y1="70.0" x2="417.9" y2="70.0" stroke="#7f411a" stroke-width="2" stroke-dasharray="2 2.4"/><line x1="420.3" y1="44.0" x2="439.6" y2="44.0" stroke="#7f411a" stroke-width="2" stroke-dasharray="2 2.4"/><line x1="420.3" y1="66.0" x2="439.6" y2="66.0" stroke="#7f411a" stroke-width="2" stroke-dasharray="2 2.4"/><line x1="443.0" y1="42.0" x2="505.3" y2="42.0" stroke="#7f411a" stroke-width="2" stroke-dasharray="2 2.4"/><line x1="443.0" y1="64.0" x2="505.3" y2="64.0" stroke="#7f411a" stroke-width="2" stroke-dasharray="2 2.4"/><line x1="508.0" y1="44.0" x2="527.4" y2="44.0" stroke="#7f411a" stroke-width="2" stroke-dasharray="2 2.4"/><line x1="508.0" y1="66.0" x2="527.4" y2="66.0" stroke="#7f411a" stroke-width="2" stroke-dasharray="2 2.4"/><line x1="0" y1="36.0" x2="532" y2="36.0" stroke="#7f411a" stroke-width="2" stroke-dasharray="2 2.4"/><rect x="354" y="0" width="2" height="32" fill="#783d18"/><rect x="488" y="0" width="2" height="32" fill="#783d18"/><rect x="178" y="3" width="2" height="5" fill="#1a1208"/><rect x="178" y="64" width="2" height="6" fill="#1a1208"/></svg>
<svg class="abs" style="left:66px;top:1304px;z-index:2" width="354" height="70"><rect x="0" y="0" width="354" height="70" fill="#e6762f"/><rect x="0" y="0" width="354" height="2" fill="#783d18"/><rect x="0" y="0" width="2" height="70" fill="#783d18"/><rect x="0" y="32" width="354" height="2" fill="#783d18"/><rect x="44" y="34" width="2" height="36" fill="#8a471c"/><rect x="88" y="34" width="2" height="36" fill="#8a471c"/><rect x="132" y="34" width="2" height="36" fill="#8a471c"/><rect x="178" y="34" width="2" height="36" fill="#8a471c"/><rect x="222" y="34" width="2" height="36" fill="#8a471c"/><rect x="266" y="34" width="2" height="36" fill="#8a471c"/><rect x="310" y="34" width="2" height="36" fill="#8a471c"/><rect x="4.2" y="42" width="2.0" height="16" fill="#1e1a16"/><rect x="8.1" y="42" width="2.0" height="16" fill="#1e1a16"/><rect x="12.2" y="42" width="3.8" height="16" fill="#1e1a16"/><rect x="18.3" y="42" width="2.0" height="16" fill="#1e1a16"/><rect x="22.2" y="42" width="2.0" height="16" fill="#1e1a16"/><rect x="26.3" y="42" width="2.0" height="16" fill="#1e1a16"/><rect x="30.2" y="42" width="2.0" height="16" fill="#1e1a16"/><rect x="34.3" y="42" width="3.8" height="16" fill="#1e1a16"/><rect x="40.4" y="42" width="2.0" height="16" fill="#1e1a16"/><rect x="44.3" y="42" width="2.0" height="16" fill="#1e1a16"/><rect x="48.4" y="42" width="2.0" height="16" fill="#1e1a16"/><rect x="52.3" y="42" width="2.0" height="16" fill="#1e1a16"/><rect x="56.4" y="42" width="3.8" height="16" fill="#1e1a16"/><rect x="62.5" y="42" width="2.0" height="16" fill="#1e1a16"/><rect x="66.4" y="42" width="2.0" height="16" fill="#1e1a16"/><rect x="70.5" y="42" width="2.0" height="16" fill="#1e1a16"/><rect x="74.4" y="42" width="2.0" height="16" fill="#1e1a16"/><rect x="78.5" y="42" width="3.8" height="16" fill="#1e1a16"/><rect x="84.6" y="42" width="2.0" height="16" fill="#1e1a16"/><rect x="88.5" y="42" width="2.0" height="16" fill="#1e1a16"/><rect x="92.6" y="42" width="2.0" height="16" fill="#1e1a16"/><rect x="96.5" y="42" width="2.0" height="16" fill="#1e1a16"/><rect x="100.6" y="42" width="3.8" height="16" fill="#1e1a16"/><rect x="106.7" y="42" width="2.0" height="16" fill="#1e1a16"/><rect x="110.6" y="42" width="2.0" height="16" fill="#1e1a16"/><rect x="114.7" y="42" width="2.0" height="16" fill="#1e1a16"/><rect x="118.6" y="42" width="2.0" height="16" fill="#1e1a16"/><rect x="122.7" y="42" width="3.8" height="16" fill="#1e1a16"/><rect x="128.8" y="42" width="2.0" height="16" fill="#1e1a16"/><rect x="132.7" y="42" width="2.0" height="16" fill="#1e1a16"/><rect x="136.8" y="42" width="2.0" height="16" fill="#1e1a16"/><rect x="140.7" y="42" width="2.0" height="16" fill="#1e1a16"/><rect x="144.8" y="42" width="3.8" height="16" fill="#1e1a16"/><rect x="150.9" y="42" width="2.0" height="16" fill="#1e1a16"/><rect x="154.8" y="42" width="2.0" height="16" fill="#1e1a16"/><rect x="158.9" y="42" width="2.0" height="16" fill="#1e1a16"/><rect x="162.8" y="42" width="2.0" height="16" fill="#1e1a16"/><rect x="167.0" y="42" width="3.8" height="16" fill="#1e1a16"/><rect x="173.1" y="42" width="2.0" height="16" fill="#1e1a16"/><rect x="177.0" y="42" width="2.0" height="16" fill="#1e1a16"/><rect x="181.0" y="42" width="2.0" height="16" fill="#1e1a16"/><rect x="184.9" y="42" width="2.0" height="16" fill="#1e1a16"/><rect x="189.1" y="42" width="3.8" height="16" fill="#1e1a16"/><rect x="195.2" y="42" width="2.0" height="16" fill="#1e1a16"/><rect x="199.1" y="42" width="2.0" height="16" fill="#1e1a16"/><rect x="203.1" y="42" width="2.0" height="16" fill="#1e1a16"/><rect x="207.0" y="42" width="2.0" height="16" fill="#1e1a16"/><rect x="211.2" y="42" width="3.8" height="16" fill="#1e1a16"/><rect x="217.3" y="42" width="2.0" height="16" fill="#1e1a16"/><rect x="221.2" y="42" width="2.0" height="16" fill="#1e1a16"/><rect x="225.2" y="42" width="2.0" height="16" fill="#1e1a16"/><rect x="229.1" y="42" width="2.0" height="16" fill="#1e1a16"/><rect x="233.3" y="42" width="3.8" height="16" fill="#1e1a16"/><rect x="239.4" y="42" width="2.0" height="16" fill="#1e1a16"/><rect x="243.3" y="42" width="2.0" height="16" fill="#1e1a16"/><rect x="247.3" y="42" width="2.0" height="16" fill="#1e1a16"/><rect x="251.2" y="42" width="2.0" height="16" fill="#1e1a16"/><rect x="255.4" y="42" width="3.8" height="16" fill="#1e1a16"/><rect x="261.5" y="42" width="2.0" height="16" fill="#1e1a16"/><rect x="265.4" y="42" width="2.0" height="16" fill="#1e1a16"/><rect x="269.4" y="42" width="2.0" height="16" fill="#1e1a16"/><rect x="273.3" y="42" width="2.0" height="16" fill="#1e1a16"/><rect x="277.5" y="42" width="3.8" height="16" fill="#1e1a16"/><rect x="283.6" y="42" width="2.0" height="16" fill="#1e1a16"/><rect x="287.5" y="42" width="2.0" height="16" fill="#1e1a16"/><rect x="291.5" y="42" width="2.0" height="16" fill="#1e1a16"/><rect x="295.4" y="42" width="2.0" height="16" fill="#1e1a16"/><rect x="299.6" y="42" width="3.8" height="16" fill="#1e1a16"/><rect x="305.7" y="42" width="2.0" height="16" fill="#1e1a16"/><rect x="309.6" y="42" width="2.0" height="16" fill="#1e1a16"/><rect x="313.6" y="42" width="2.0" height="16" fill="#1e1a16"/><rect x="317.5" y="42" width="2.0" height="16" fill="#1e1a16"/><rect x="321.7" y="42" width="3.8" height="16" fill="#1e1a16"/><rect x="327.8" y="42" width="2.0" height="16" fill="#1e1a16"/><rect x="331.7" y="42" width="2.0" height="16" fill="#1e1a16"/><rect x="335.8" y="42" width="2.0" height="16" fill="#1e1a16"/><rect x="339.7" y="42" width="2.0" height="16" fill="#1e1a16"/><rect x="343.8" y="42" width="3.8" height="16" fill="#1e1a16"/><rect x="349.9" y="42" width="2.0" height="16" fill="#1e1a16"/><rect x="178" y="3" width="2" height="5" fill="#1a1208"/><rect x="178" y="64" width="2" height="6" fill="#1a1208"/></svg>
<svg class="abs" style="left:596px;top:1304px;z-index:2" width="134" height="70"><rect x="0" y="0" width="134" height="70" fill="#e6762f"/><rect x="0" y="0" width="134" height="2" fill="#783d18"/><rect x="0" y="0" width="2" height="70" fill="#783d18"/><rect x="0" y="32" width="134" height="2" fill="#783d18"/><rect x="46" y="34" width="2" height="36" fill="#8a471c"/><rect x="90" y="34" width="2" height="36" fill="#8a471c"/><rect x="4.7" y="42" width="2.0" height="16" fill="#1e1a16"/><rect x="8.6" y="42" width="2.0" height="16" fill="#1e1a16"/><rect x="12.8" y="42" width="3.8" height="16" fill="#1e1a16"/><rect x="18.9" y="42" width="2.0" height="16" fill="#1e1a16"/><rect x="22.8" y="42" width="2.0" height="16" fill="#1e1a16"/><rect x="26.8" y="42" width="2.0" height="16" fill="#1e1a16"/><rect x="30.7" y="42" width="2.0" height="16" fill="#1e1a16"/><rect x="34.9" y="42" width="3.8" height="16" fill="#1e1a16"/><rect x="41.0" y="42" width="2.0" height="16" fill="#1e1a16"/><rect x="44.9" y="42" width="2.0" height="16" fill="#1e1a16"/><rect x="48.9" y="42" width="2.0" height="16" fill="#1e1a16"/><rect x="52.8" y="42" width="2.0" height="16" fill="#1e1a16"/><rect x="57.0" y="42" width="3.8" height="16" fill="#1e1a16"/><rect x="63.1" y="42" width="2.0" height="16" fill="#1e1a16"/><rect x="67.0" y="42" width="2.0" height="16" fill="#1e1a16"/><rect x="71.0" y="42" width="2.0" height="16" fill="#1e1a16"/><rect x="74.9" y="42" width="2.0" height="16" fill="#1e1a16"/><rect x="79.1" y="42" width="3.8" height="16" fill="#1e1a16"/><rect x="85.2" y="42" width="2.0" height="16" fill="#1e1a16"/><rect x="89.1" y="42" width="2.0" height="16" fill="#1e1a16"/><rect x="93.1" y="42" width="2.0" height="16" fill="#1e1a16"/><rect x="97.0" y="42" width="2.0" height="16" fill="#1e1a16"/><rect x="101.2" y="42" width="3.8" height="16" fill="#1e1a16"/><rect x="107.3" y="42" width="2.0" height="16" fill="#1e1a16"/><rect x="111.2" y="42" width="2.0" height="16" fill="#1e1a16"/><rect x="115.2" y="42" width="2.0" height="16" fill="#1e1a16"/><rect x="119.1" y="42" width="2.0" height="16" fill="#1e1a16"/><rect x="123.3" y="42" width="3.8" height="16" fill="#1e1a16"/><rect x="129.4" y="42" width="2.0" height="16" fill="#1e1a16"/></svg>
<div style="left:730.0px;top:1304.0px;width:44.0px;height:34.0px;background:#626262;z-index:2"></div>
<svg class="abs" style="left:730px;top:1304px;z-index:2" width="44" height="70"><rect x="3.3" y="42" width="2.0" height="16" fill="#6c6c6c"/><rect x="7.2" y="42" width="2.0" height="16" fill="#6c6c6c"/><rect x="11.4" y="42" width="3.8" height="16" fill="#6c6c6c"/><rect x="17.5" y="42" width="2.0" height="16" fill="#6c6c6c"/><rect x="21.4" y="42" width="2.0" height="16" fill="#6c6c6c"/><rect x="25.4" y="42" width="2.0" height="16" fill="#6c6c6c"/><rect x="29.3" y="42" width="2.0" height="16" fill="#6c6c6c"/><rect x="33.5" y="42" width="3.8" height="16" fill="#6c6c6c"/><rect x="39.6" y="42" width="2.0" height="16" fill="#6c6c6c"/></svg>
<svg class="abs" style="left:774px;top:1304px;z-index:2" width="708" height="70"><rect x="0" y="0" width="708" height="70" fill="#e6762f"/><rect x="0" y="0" width="708" height="2" fill="#783d18"/><rect x="0" y="0" width="2" height="70" fill="#783d18"/><rect x="0" y="32" width="708" height="2" fill="#783d18"/><rect x="44" y="34" width="2" height="36" fill="#8a471c"/><rect x="88" y="34" width="2" height="36" fill="#8a471c"/><rect x="132" y="34" width="2" height="36" fill="#8a471c"/><rect x="176" y="34" width="2" height="36" fill="#8a471c"/><rect x="220" y="34" width="2" height="36" fill="#8a471c"/><rect x="264" y="34" width="2" height="36" fill="#8a471c"/><rect x="310" y="34" width="2" height="36" fill="#8a471c"/><rect x="354" y="34" width="2" height="36" fill="#8a471c"/><rect x="398" y="34" width="2" height="36" fill="#8a471c"/><rect x="442" y="34" width="2" height="36" fill="#8a471c"/><rect x="486" y="34" width="2" height="36" fill="#8a471c"/><rect x="530" y="34" width="2" height="36" fill="#8a471c"/><rect x="574" y="34" width="2" height="36" fill="#8a471c"/><rect x="618" y="34" width="2" height="36" fill="#8a471c"/><rect x="662" y="34" width="2" height="36" fill="#8a471c"/><rect x="3.6" y="42" width="2.0" height="16" fill="#1e1a16"/><rect x="7.5" y="42" width="2.0" height="16" fill="#1e1a16"/><rect x="11.6" y="42" width="3.8" height="16" fill="#1e1a16"/><rect x="17.7" y="42" width="2.0" height="16" fill="#1e1a16"/><rect x="21.6" y="42" width="2.0" height="16" fill="#1e1a16"/><rect x="25.7" y="42" width="2.0" height="16" fill="#1e1a16"/><rect x="29.6" y="42" width="2.0" height="16" fill="#1e1a16"/><rect x="33.7" y="42" width="3.8" height="16" fill="#1e1a16"/><rect x="39.8" y="42" width="2.0" height="16" fill="#1e1a16"/><rect x="43.7" y="42" width="2.0" height="16" fill="#1e1a16"/><rect x="47.8" y="42" width="2.0" height="16" fill="#1e1a16"/><rect x="51.7" y="42" width="2.0" height="16" fill="#1e1a16"/><rect x="55.8" y="42" width="3.8" height="16" fill="#1e1a16"/><rect x="61.9" y="42" width="2.0" height="16" fill="#1e1a16"/><rect x="65.8" y="42" width="2.0" height="16" fill="#1e1a16"/><rect x="69.9" y="42" width="2.0" height="16" fill="#1e1a16"/><rect x="73.8" y="42" width="2.0" height="16" fill="#1e1a16"/><rect x="77.9" y="42" width="3.8" height="16" fill="#1e1a16"/><rect x="84.0" y="42" width="2.0" height="16" fill="#1e1a16"/><rect x="87.9" y="42" width="2.0" height="16" fill="#1e1a16"/><rect x="92.0" y="42" width="2.0" height="16" fill="#1e1a16"/><rect x="95.9" y="42" width="2.0" height="16" fill="#1e1a16"/><rect x="100.0" y="42" width="3.8" height="16" fill="#1e1a16"/><rect x="106.1" y="42" width="2.0" height="16" fill="#1e1a16"/><rect x="110.0" y="42" width="2.0" height="16" fill="#1e1a16"/><rect x="114.1" y="42" width="2.0" height="16" fill="#1e1a16"/><rect x="118.0" y="42" width="2.0" height="16" fill="#1e1a16"/><rect x="122.1" y="42" width="3.8" height="16" fill="#1e1a16"/><rect x="128.2" y="42" width="2.0" height="16" fill="#1e1a16"/><rect x="132.1" y="42" width="2.0" height="16" fill="#1e1a16"/><rect x="136.2" y="42" width="2.0" height="16" fill="#1e1a16"/><rect x="140.1" y="42" width="2.0" height="16" fill="#1e1a16"/><rect x="144.2" y="42" width="3.8" height="16" fill="#1e1a16"/><rect x="150.3" y="42" width="2.0" height="16" fill="#1e1a16"/><rect x="154.2" y="42" width="2.0" height="16" fill="#1e1a16"/><rect x="158.3" y="42" width="2.0" height="16" fill="#1e1a16"/><rect x="162.2" y="42" width="2.0" height="16" fill="#1e1a16"/><rect x="166.3" y="42" width="3.8" height="16" fill="#1e1a16"/><rect x="172.4" y="42" width="2.0" height="16" fill="#1e1a16"/><rect x="176.3" y="42" width="2.0" height="16" fill="#1e1a16"/><rect x="180.4" y="42" width="2.0" height="16" fill="#1e1a16"/><rect x="184.3" y="42" width="2.0" height="16" fill="#1e1a16"/><rect x="188.5" y="42" width="3.8" height="16" fill="#1e1a16"/><rect x="194.6" y="42" width="2.0" height="16" fill="#1e1a16"/><rect x="198.5" y="42" width="2.0" height="16" fill="#1e1a16"/><rect x="202.5" y="42" width="2.0" height="16" fill="#1e1a16"/><rect x="206.4" y="42" width="2.0" height="16" fill="#1e1a16"/><rect x="210.6" y="42" width="3.8" height="16" fill="#1e1a16"/><rect x="216.7" y="42" width="2.0" height="16" fill="#1e1a16"/><rect x="220.6" y="42" width="2.0" height="16" fill="#1e1a16"/><rect x="224.6" y="42" width="2.0" height="16" fill="#1e1a16"/><rect x="228.5" y="42" width="2.0" height="16" fill="#1e1a16"/><rect x="232.7" y="42" width="3.8" height="16" fill="#1e1a16"/><rect x="238.8" y="42" width="2.0" height="16" fill="#1e1a16"/><rect x="242.7" y="42" width="2.0" height="16" fill="#1e1a16"/><rect x="246.7" y="42" width="2.0" height="16" fill="#1e1a16"/><rect x="250.6" y="42" width="2.0" height="16" fill="#1e1a16"/><rect x="254.8" y="42" width="3.8" height="16" fill="#1e1a16"/><rect x="260.9" y="42" width="2.0" height="16" fill="#1e1a16"/><rect x="264.8" y="42" width="2.0" height="16" fill="#1e1a16"/><rect x="268.8" y="42" width="2.0" height="16" fill="#1e1a16"/><rect x="272.7" y="42" width="2.0" height="16" fill="#1e1a16"/><rect x="276.9" y="42" width="3.8" height="16" fill="#1e1a16"/><rect x="283.0" y="42" width="2.0" height="16" fill="#1e1a16"/><rect x="286.9" y="42" width="2.0" height="16" fill="#1e1a16"/><rect x="290.9" y="42" width="2.0" height="16" fill="#1e1a16"/><rect x="294.8" y="42" width="2.0" height="16" fill="#1e1a16"/><rect x="299.0" y="42" width="3.8" height="16" fill="#1e1a16"/><rect x="305.1" y="42" width="2.0" height="16" fill="#1e1a16"/><rect x="309.0" y="42" width="2.0" height="16" fill="#1e1a16"/><rect x="313.0" y="42" width="2.0" height="16" fill="#1e1a16"/><rect x="316.9" y="42" width="2.0" height="16" fill="#1e1a16"/><rect x="321.1" y="42" width="3.8" height="16" fill="#1e1a16"/><rect x="327.2" y="42" width="2.0" height="16" fill="#1e1a16"/><rect x="331.1" y="42" width="2.0" height="16" fill="#1e1a16"/><rect x="335.1" y="42" width="2.0" height="16" fill="#1e1a16"/><rect x="339.0" y="42" width="2.0" height="16" fill="#1e1a16"/><rect x="343.2" y="42" width="3.8" height="16" fill="#1e1a16"/><rect x="349.3" y="42" width="2.0" height="16" fill="#1e1a16"/><rect x="353.2" y="42" width="2.0" height="16" fill="#1e1a16"/><rect x="357.3" y="42" width="2.0" height="16" fill="#1e1a16"/><rect x="361.2" y="42" width="2.0" height="16" fill="#1e1a16"/><rect x="365.3" y="42" width="3.8" height="16" fill="#1e1a16"/><rect x="371.4" y="42" width="2.0" height="16" fill="#1e1a16"/><rect x="375.3" y="42" width="2.0" height="16" fill="#1e1a16"/><rect x="379.4" y="42" width="2.0" height="16" fill="#1e1a16"/><rect x="383.3" y="42" width="2.0" height="16" fill="#1e1a16"/><rect x="387.4" y="42" width="3.8" height="16" fill="#1e1a16"/><rect x="393.5" y="42" width="2.0" height="16" fill="#1e1a16"/><rect x="397.4" y="42" width="2.0" height="16" fill="#1e1a16"/><rect x="401.5" y="42" width="2.0" height="16" fill="#1e1a16"/><rect x="405.4" y="42" width="2.0" height="16" fill="#1e1a16"/><rect x="409.5" y="42" width="3.8" height="16" fill="#1e1a16"/><rect x="415.6" y="42" width="2.0" height="16" fill="#1e1a16"/><rect x="419.5" y="42" width="2.0" height="16" fill="#1e1a16"/><rect x="423.6" y="42" width="2.0" height="16" fill="#1e1a16"/><rect x="427.5" y="42" width="2.0" height="16" fill="#1e1a16"/><rect x="431.6" y="42" width="3.8" height="16" fill="#1e1a16"/><rect x="437.7" y="42" width="2.0" height="16" fill="#1e1a16"/><rect x="441.6" y="42" width="2.0" height="16" fill="#1e1a16"/><rect x="445.7" y="42" width="2.0" height="16" fill="#1e1a16"/><rect x="449.6" y="42" width="2.0" height="16" fill="#1e1a16"/><rect x="453.7" y="42" width="3.8" height="16" fill="#1e1a16"/><rect x="459.8" y="42" width="2.0" height="16" fill="#1e1a16"/><rect x="463.7" y="42" width="2.0" height="16" fill="#1e1a16"/><rect x="467.8" y="42" width="2.0" height="16" fill="#1e1a16"/><rect x="471.7" y="42" width="2.0" height="16" fill="#1e1a16"/><rect x="475.8" y="42" width="3.8" height="16" fill="#1e1a16"/><rect x="481.9" y="42" width="2.0" height="16" fill="#1e1a16"/><rect x="485.8" y="42" width="2.0" height="16" fill="#1e1a16"/><rect x="489.9" y="42" width="2.0" height="16" fill="#1e1a16"/><rect x="493.8" y="42" width="2.0" height="16" fill="#1e1a16"/><rect x="497.9" y="42" width="3.8" height="16" fill="#1e1a16"/><rect x="504.0" y="42" width="2.0" height="16" fill="#1e1a16"/><rect x="507.9" y="42" width="2.0" height="16" fill="#1e1a16"/><rect x="512.0" y="42" width="2.0" height="16" fill="#1e1a16"/><rect x="515.9" y="42" width="2.0" height="16" fill="#1e1a16"/><rect x="520.0" y="42" width="3.8" height="16" fill="#1e1a16"/><rect x="526.1" y="42" width="2.0" height="16" fill="#1e1a16"/><rect x="530.0" y="42" width="2.0" height="16" fill="#1e1a16"/><rect x="534.1" y="42" width="2.0" height="16" fill="#1e1a16"/><rect x="538.0" y="42" width="2.0" height="16" fill="#1e1a16"/><rect x="542.1" y="42" width="3.8" height="16" fill="#1e1a16"/><rect x="548.2" y="42" width="2.0" height="16" fill="#1e1a16"/><rect x="552.1" y="42" width="2.0" height="16" fill="#1e1a16"/><rect x="556.2" y="42" width="2.0" height="16" fill="#1e1a16"/><rect x="560.1" y="42" width="2.0" height="16" fill="#1e1a16"/><rect x="564.3" y="42" width="3.8" height="16" fill="#1e1a16"/><rect x="570.4" y="42" width="2.0" height="16" fill="#1e1a16"/><rect x="574.3" y="42" width="2.0" height="16" fill="#1e1a16"/><rect x="578.3" y="42" width="2.0" height="16" fill="#1e1a16"/><rect x="582.2" y="42" width="2.0" height="16" fill="#1e1a16"/><rect x="586.4" y="42" width="3.8" height="16" fill="#1e1a16"/><rect x="592.5" y="42" width="2.0" height="16" fill="#1e1a16"/><rect x="596.4" y="42" width="2.0" height="16" fill="#1e1a16"/><rect x="600.4" y="42" width="2.0" height="16" fill="#1e1a16"/><rect x="604.3" y="42" width="2.0" height="16" fill="#1e1a16"/><rect x="608.5" y="42" width="3.8" height="16" fill="#1e1a16"/><rect x="614.6" y="42" width="2.0" height="16" fill="#1e1a16"/><rect x="618.5" y="42" width="2.0" height="16" fill="#1e1a16"/><rect x="622.5" y="42" width="2.0" height="16" fill="#1e1a16"/><rect x="626.4" y="42" width="2.0" height="16" fill="#1e1a16"/><rect x="630.6" y="42" width="3.8" height="16" fill="#1e1a16"/><rect x="636.7" y="42" width="2.0" height="16" fill="#1e1a16"/><rect x="640.6" y="42" width="2.0" height="16" fill="#1e1a16"/><rect x="644.6" y="42" width="2.0" height="16" fill="#1e1a16"/><rect x="648.5" y="42" width="2.0" height="16" fill="#1e1a16"/><rect x="652.7" y="42" width="3.8" height="16" fill="#1e1a16"/><rect x="658.8" y="42" width="2.0" height="16" fill="#1e1a16"/><rect x="662.7" y="42" width="2.0" height="16" fill="#1e1a16"/><rect x="666.7" y="42" width="2.0" height="16" fill="#1e1a16"/><rect x="670.6" y="42" width="2.0" height="16" fill="#1e1a16"/><rect x="674.8" y="42" width="3.8" height="16" fill="#1e1a16"/><rect x="680.9" y="42" width="2.0" height="16" fill="#1e1a16"/><rect x="684.8" y="42" width="2.0" height="16" fill="#1e1a16"/><rect x="688.8" y="42" width="2.0" height="16" fill="#1e1a16"/><rect x="692.7" y="42" width="2.0" height="16" fill="#1e1a16"/><rect x="696.9" y="42" width="3.8" height="16" fill="#1e1a16"/><rect x="703.0" y="42" width="2.0" height="16" fill="#1e1a16"/><rect x="176" y="3" width="2" height="5" fill="#1a1208"/><rect x="176" y="64" width="2" height="6" fill="#1a1208"/><rect x="354" y="3" width="2" height="5" fill="#1a1208"/><rect x="354" y="64" width="2" height="6" fill="#1a1208"/><rect x="530" y="3" width="2" height="5" fill="#1a1208"/><rect x="530" y="64" width="2" height="6" fill="#1a1208"/></svg>
<svg class="abs" style="left:1658px;top:1304px;z-index:2" width="132" height="70"><rect x="0" y="0" width="132" height="70" fill="#e6762f"/><rect x="0" y="0" width="132" height="2" fill="#783d18"/><rect x="0" y="0" width="2" height="70" fill="#783d18"/><rect x="0" y="32" width="132" height="2" fill="#783d18"/><rect x="44" y="34" width="2" height="36" fill="#8a471c"/><rect x="88" y="34" width="2" height="36" fill="#8a471c"/><rect x="3.8" y="42" width="2.0" height="16" fill="#1e1a16"/><rect x="7.7" y="42" width="2.0" height="16" fill="#1e1a16"/><rect x="11.8" y="42" width="3.8" height="16" fill="#1e1a16"/><rect x="17.9" y="42" width="2.0" height="16" fill="#1e1a16"/><rect x="21.8" y="42" width="2.0" height="16" fill="#1e1a16"/><rect x="25.9" y="42" width="2.0" height="16" fill="#1e1a16"/><rect x="29.8" y="42" width="2.0" height="16" fill="#1e1a16"/><rect x="33.9" y="42" width="3.8" height="16" fill="#1e1a16"/><rect x="40.0" y="42" width="2.0" height="16" fill="#1e1a16"/><rect x="43.9" y="42" width="2.0" height="16" fill="#1e1a16"/><rect x="48.0" y="42" width="2.0" height="16" fill="#1e1a16"/><rect x="51.9" y="42" width="2.0" height="16" fill="#1e1a16"/><rect x="56.1" y="42" width="3.8" height="16" fill="#1e1a16"/><rect x="62.2" y="42" width="2.0" height="16" fill="#1e1a16"/><rect x="66.1" y="42" width="2.0" height="16" fill="#1e1a16"/><rect x="70.1" y="42" width="2.0" height="16" fill="#1e1a16"/><rect x="74.0" y="42" width="2.0" height="16" fill="#1e1a16"/><rect x="78.2" y="42" width="3.8" height="16" fill="#1e1a16"/><rect x="84.3" y="42" width="2.0" height="16" fill="#1e1a16"/><rect x="88.2" y="42" width="2.0" height="16" fill="#1e1a16"/><rect x="92.2" y="42" width="2.0" height="16" fill="#1e1a16"/><rect x="96.1" y="42" width="2.0" height="16" fill="#1e1a16"/><rect x="100.3" y="42" width="3.8" height="16" fill="#1e1a16"/><rect x="106.4" y="42" width="2.0" height="16" fill="#1e1a16"/><rect x="110.3" y="42" width="2.0" height="16" fill="#1e1a16"/><rect x="114.3" y="42" width="2.0" height="16" fill="#1e1a16"/><rect x="118.2" y="42" width="2.0" height="16" fill="#1e1a16"/><rect x="122.4" y="42" width="3.8" height="16" fill="#1e1a16"/><rect x="128.5" y="42" width="2.0" height="16" fill="#1e1a16"/></svg>
<div style="left:1790.0px;top:1304.0px;width:44.0px;height:34.0px;background:#626262;z-index:2"></div>
<svg class="abs" style="left:1790px;top:1304px;z-index:2" width="44" height="70"><rect x="4.4" y="42" width="2.0" height="16" fill="#6c6c6c"/><rect x="8.3" y="42" width="2.0" height="16" fill="#6c6c6c"/><rect x="12.5" y="42" width="3.8" height="16" fill="#6c6c6c"/><rect x="18.6" y="42" width="2.0" height="16" fill="#6c6c6c"/><rect x="22.5" y="42" width="2.0" height="16" fill="#6c6c6c"/><rect x="26.5" y="42" width="2.0" height="16" fill="#6c6c6c"/><rect x="30.4" y="42" width="2.0" height="16" fill="#6c6c6c"/><rect x="34.6" y="42" width="3.8" height="16" fill="#6c6c6c"/><rect x="40.7" y="42" width="2.0" height="16" fill="#6c6c6c"/></svg>
<svg class="abs" style="left:1834px;top:1304px;z-index:2" width="532" height="70"><rect x="0" y="0" width="532" height="70" fill="#e6762f"/><rect x="0" y="0" width="532" height="2" fill="#783d18"/><rect x="0" y="0" width="2" height="70" fill="#783d18"/><rect x="0" y="32" width="532" height="2" fill="#783d18"/><rect x="46" y="34" width="2" height="36" fill="#8a471c"/><rect x="90" y="34" width="2" height="36" fill="#8a471c"/><rect x="134" y="34" width="2" height="36" fill="#8a471c"/><rect x="178" y="34" width="2" height="36" fill="#8a471c"/><rect x="222" y="34" width="2" height="36" fill="#8a471c"/><rect x="266" y="34" width="2" height="36" fill="#8a471c"/><rect x="310" y="34" width="2" height="36" fill="#8a471c"/><rect x="354" y="34" width="2" height="36" fill="#8a471c"/><rect x="398" y="34" width="2" height="36" fill="#8a471c"/><rect x="442" y="34" width="2" height="36" fill="#8a471c"/><rect x="488" y="34" width="2" height="36" fill="#8a471c"/><rect x="4.6" y="42" width="2.0" height="16" fill="#1e1a16"/><rect x="8.5" y="42" width="2.0" height="16" fill="#1e1a16"/><rect x="12.7" y="42" width="3.8" height="16" fill="#1e1a16"/><rect x="18.8" y="42" width="2.0" height="16" fill="#1e1a16"/><rect x="22.7" y="42" width="2.0" height="16" fill="#1e1a16"/><rect x="26.7" y="42" width="2.0" height="16" fill="#1e1a16"/><rect x="30.6" y="42" width="2.0" height="16" fill="#1e1a16"/><rect x="34.8" y="42" width="3.8" height="16" fill="#1e1a16"/><rect x="40.9" y="42" width="2.0" height="16" fill="#1e1a16"/><rect x="44.8" y="42" width="2.0" height="16" fill="#1e1a16"/><rect x="48.9" y="42" width="2.0" height="16" fill="#1e1a16"/><rect x="52.8" y="42" width="2.0" height="16" fill="#1e1a16"/><rect x="56.9" y="42" width="3.8" height="16" fill="#1e1a16"/><rect x="63.0" y="42" width="2.0" height="16" fill="#1e1a16"/><rect x="66.9" y="42" width="2.0" height="16" fill="#1e1a16"/><rect x="71.0" y="42" width="2.0" height="16" fill="#1e1a16"/><rect x="74.9" y="42" width="2.0" height="16" fill="#1e1a16"/><rect x="79.0" y="42" width="3.8" height="16" fill="#1e1a16"/><rect x="85.1" y="42" width="2.0" height="16" fill="#1e1a16"/><rect x="89.0" y="42" width="2.0" height="16" fill="#1e1a16"/><rect x="93.1" y="42" width="2.0" height="16" fill="#1e1a16"/><rect x="97.0" y="42" width="2.0" height="16" fill="#1e1a16"/><rect x="101.1" y="42" width="3.8" height="16" fill="#1e1a16"/><rect x="107.2" y="42" width="2.0" height="16" fill="#1e1a16"/><rect x="111.1" y="42" width="2.0" height="16" fill="#1e1a16"/><rect x="115.2" y="42" width="2.0" height="16" fill="#1e1a16"/><rect x="119.1" y="42" width="2.0" height="16" fill="#1e1a16"/><rect x="123.2" y="42" width="3.8" height="16" fill="#1e1a16"/><rect x="129.3" y="42" width="2.0" height="16" fill="#1e1a16"/><rect x="133.2" y="42" width="2.0" height="16" fill="#1e1a16"/><rect x="137.3" y="42" width="2.0" height="16" fill="#1e1a16"/><rect x="141.2" y="42" width="2.0" height="16" fill="#1e1a16"/><rect x="145.3" y="42" width="3.8" height="16" fill="#1e1a16"/><rect x="151.4" y="42" width="2.0" height="16" fill="#1e1a16"/><rect x="155.3" y="42" width="2.0" height="16" fill="#1e1a16"/><rect x="159.4" y="42" width="2.0" height="16" fill="#1e1a16"/><rect x="163.3" y="42" width="2.0" height="16" fill="#1e1a16"/><rect x="167.4" y="42" width="3.8" height="16" fill="#1e1a16"/><rect x="173.5" y="42" width="2.0" height="16" fill="#1e1a16"/><rect x="177.4" y="42" width="2.0" height="16" fill="#1e1a16"/><rect x="181.5" y="42" width="2.0" height="16" fill="#1e1a16"/><rect x="185.4" y="42" width="2.0" height="16" fill="#1e1a16"/><rect x="189.5" y="42" width="3.8" height="16" fill="#1e1a16"/><rect x="195.6" y="42" width="2.0" height="16" fill="#1e1a16"/><rect x="199.5" y="42" width="2.0" height="16" fill="#1e1a16"/><rect x="203.6" y="42" width="2.0" height="16" fill="#1e1a16"/><rect x="207.5" y="42" width="2.0" height="16" fill="#1e1a16"/><rect x="211.6" y="42" width="3.8" height="16" fill="#1e1a16"/><rect x="217.7" y="42" width="2.0" height="16" fill="#1e1a16"/><rect x="221.6" y="42" width="2.0" height="16" fill="#1e1a16"/><rect x="225.7" y="42" width="2.0" height="16" fill="#1e1a16"/><rect x="229.6" y="42" width="2.0" height="16" fill="#1e1a16"/><rect x="233.8" y="42" width="3.8" height="16" fill="#1e1a16"/><rect x="239.9" y="42" width="2.0" height="16" fill="#1e1a16"/><rect x="243.8" y="42" width="2.0" height="16" fill="#1e1a16"/><rect x="247.8" y="42" width="2.0" height="16" fill="#1e1a16"/><rect x="251.7" y="42" width="2.0" height="16" fill="#1e1a16"/><rect x="255.9" y="42" width="3.8" height="16" fill="#1e1a16"/><rect x="262.0" y="42" width="2.0" height="16" fill="#1e1a16"/><rect x="265.9" y="42" width="2.0" height="16" fill="#1e1a16"/><rect x="269.9" y="42" width="2.0" height="16" fill="#1e1a16"/><rect x="273.8" y="42" width="2.0" height="16" fill="#1e1a16"/><rect x="278.0" y="42" width="3.8" height="16" fill="#1e1a16"/><rect x="284.1" y="42" width="2.0" height="16" fill="#1e1a16"/><rect x="288.0" y="42" width="2.0" height="16" fill="#1e1a16"/><rect x="292.0" y="42" width="2.0" height="16" fill="#1e1a16"/><rect x="295.9" y="42" width="2.0" height="16" fill="#1e1a16"/><rect x="300.1" y="42" width="3.8" height="16" fill="#1e1a16"/><rect x="306.2" y="42" width="2.0" height="16" fill="#1e1a16"/><rect x="310.1" y="42" width="2.0" height="16" fill="#1e1a16"/><rect x="314.1" y="42" width="2.0" height="16" fill="#1e1a16"/><rect x="318.0" y="42" width="2.0" height="16" fill="#1e1a16"/><rect x="322.2" y="42" width="3.8" height="16" fill="#1e1a16"/><rect x="328.3" y="42" width="2.0" height="16" fill="#1e1a16"/><rect x="332.2" y="42" width="2.0" height="16" fill="#1e1a16"/><rect x="336.2" y="42" width="2.0" height="16" fill="#1e1a16"/><rect x="340.1" y="42" width="2.0" height="16" fill="#1e1a16"/><rect x="344.3" y="42" width="3.8" height="16" fill="#1e1a16"/><rect x="350.4" y="42" width="2.0" height="16" fill="#1e1a16"/><rect x="354.3" y="42" width="2.0" height="16" fill="#1e1a16"/><rect x="358.3" y="42" width="2.0" height="16" fill="#1e1a16"/><rect x="362.2" y="42" width="2.0" height="16" fill="#1e1a16"/><rect x="366.4" y="42" width="3.8" height="16" fill="#1e1a16"/><rect x="372.5" y="42" width="2.0" height="16" fill="#1e1a16"/><rect x="376.4" y="42" width="2.0" height="16" fill="#1e1a16"/><rect x="380.4" y="42" width="2.0" height="16" fill="#1e1a16"/><rect x="384.3" y="42" width="2.0" height="16" fill="#1e1a16"/><rect x="388.5" y="42" width="3.8" height="16" fill="#1e1a16"/><rect x="394.6" y="42" width="2.0" height="16" fill="#1e1a16"/><rect x="398.5" y="42" width="2.0" height="16" fill="#1e1a16"/><rect x="402.6" y="42" width="2.0" height="16" fill="#1e1a16"/><rect x="406.5" y="42" width="2.0" height="16" fill="#1e1a16"/><rect x="410.6" y="42" width="3.8" height="16" fill="#1e1a16"/><rect x="416.7" y="42" width="2.0" height="16" fill="#1e1a16"/><rect x="420.6" y="42" width="2.0" height="16" fill="#1e1a16"/><rect x="424.7" y="42" width="2.0" height="16" fill="#1e1a16"/><rect x="428.6" y="42" width="2.0" height="16" fill="#1e1a16"/><rect x="432.7" y="42" width="3.8" height="16" fill="#1e1a16"/><rect x="438.8" y="42" width="2.0" height="16" fill="#1e1a16"/><rect x="442.7" y="42" width="2.0" height="16" fill="#1e1a16"/><rect x="446.8" y="42" width="2.0" height="16" fill="#1e1a16"/><rect x="450.7" y="42" width="2.0" height="16" fill="#1e1a16"/><rect x="454.8" y="42" width="3.8" height="16" fill="#1e1a16"/><rect x="460.9" y="42" width="2.0" height="16" fill="#1e1a16"/><rect x="464.8" y="42" width="2.0" height="16" fill="#1e1a16"/><rect x="468.9" y="42" width="2.0" height="16" fill="#1e1a16"/><rect x="472.8" y="42" width="2.0" height="16" fill="#1e1a16"/><rect x="476.9" y="42" width="3.8" height="16" fill="#1e1a16"/><rect x="483.0" y="42" width="2.0" height="16" fill="#1e1a16"/><rect x="486.9" y="42" width="2.0" height="16" fill="#1e1a16"/><rect x="491.0" y="42" width="2.0" height="16" fill="#1e1a16"/><rect x="494.9" y="42" width="2.0" height="16" fill="#1e1a16"/><rect x="499.0" y="42" width="3.8" height="16" fill="#1e1a16"/><rect x="505.1" y="42" width="2.0" height="16" fill="#1e1a16"/><rect x="509.0" y="42" width="2.0" height="16" fill="#1e1a16"/><rect x="513.1" y="42" width="2.0" height="16" fill="#1e1a16"/><rect x="517.0" y="42" width="2.0" height="16" fill="#1e1a16"/><rect x="521.1" y="42" width="3.8" height="16" fill="#1e1a16"/><rect x="527.2" y="42" width="2.0" height="16" fill="#1e1a16"/><rect x="354" y="0" width="2" height="32" fill="#783d18"/><rect x="178" y="3" width="2" height="5" fill="#1a1208"/><rect x="178" y="64" width="2" height="6" fill="#1a1208"/></svg>
<div class="c" style="left:950px;top:1378px;width:88px;height:12px;background:#4ca3e9;border-style:solid;border-color:#2e628c;border-width:2px 0 0 2px"><span style="left:4px;line-height:31px;color:#0f212f"><i style="letter-spacing:0.45px">MHA</i><i style="letter-spacing:-0.3px"> </i><i style="letter-spacing:0.45px">ASCEND</i></span></div>
<div class="c" style="left:1038px;top:1378px;width:90px;height:12px;background:#4ca3e9;border-style:solid;border-color:#2e628c;border-width:2px 0 0 2px"><span style="left:4px;line-height:31px;color:#0f212f"><i style="letter-spacing:0.45px">MHA</i><i style="letter-spacing:-0.3px"> </i><i style="letter-spacing:0.45px">ASCEND</i></span></div>
<div class="c" style="left:2012px;top:1378px;width:88px;height:12px;background:#4ca3e9;border-style:solid;border-color:#2e628c;border-width:2px 0 0 2px"><span style="left:4px;line-height:31px;color:#0f212f"><i style="letter-spacing:0.45px">MHA</i><i style="letter-spacing:-0.3px"> </i><i style="letter-spacing:0.45px">ASCEND</i></span></div>
<div class="c" style="left:2100px;top:1378px;width:88px;height:12px;background:#4ca3e9;border-style:solid;border-color:#2e628c;border-width:2px 0 0 2px"><span style="left:4px;line-height:31px;color:#0f212f"><i style="letter-spacing:0.45px">MHA</i><i style="letter-spacing:-0.3px"> </i><i style="letter-spacing:0.45px">ASCEND</i></span></div>
<div class="c" style="left:2188px;top:1378px;width:88px;height:12px;background:#626262"><span style="left:6px;line-height:35px;color:#282828"><i style="letter-spacing:0.45px">MHA</i><i style="letter-spacing:-0.3px"> </i><i style="letter-spacing:0.45px">ASCEND</i></span></div>
<div class="c" style="left:2276px;top:1378px;width:90px;height:12px;background:#626262"><span style="left:6px;line-height:35px;color:#282828"><i style="letter-spacing:0.45px">MHA</i><i style="letter-spacing:-0.3px"> </i><i style="letter-spacing:0.45px">ASCEND</i></span></div>
<div style="left:22.0px;top:54.0px;width:2368.0px;height:22.0px;background:#5e5e5e;"></div>
<div style="left:22.0px;top:54.0px;width:2368.0px;height:2.0px;background:#9c9c9c;"></div>
<div style="left:22.0px;top:74.0px;width:2368.0px;height:2.0px;background:#9c9c9c;"></div>
<div style="left:22.0px;top:54.0px;width:2.0px;height:1380.0px;background:#9c9c9c;z-index:5"></div>
<div style="left:2388.0px;top:54.0px;width:2.0px;height:1380.0px;background:#9c9c9c;z-index:5"></div>
<svg class="abs" style="left:24px;top:56px" width="20" height="18"><path d="M0.5 0.5L15 9L0.5 17.5" fill="none" stroke="#a6a6a6" stroke-width="2"/></svg>
<svg class="abs" style="left:2368px;top:56px" width="20" height="18"><path d="M19.5 0.5L5 9L19.5 17.5" fill="none" stroke="#a6a6a6" stroke-width="2"/></svg>
<div style="left:66.0px;top:42.0px;width:2.0px;height:12.0px;background:#969696;"></div>
<div style="left:66.0px;top:42.0px;width:4.0px;height:2.0px;background:#8e8e8e;"></div>
<span class="rl" style="left:76px;top:31.3px">21</span>
<div style="left:154.0px;top:42.0px;width:2.0px;height:12.0px;background:#969696;"></div>
<div style="left:154.0px;top:42.0px;width:4.0px;height:2.0px;background:#8e8e8e;"></div>
<span class="rl" style="left:164px;top:31.3px">25</span>
<div style="left:244.0px;top:42.0px;width:2.0px;height:12.0px;background:#969696;"></div>
<div style="left:244.0px;top:42.0px;width:4.0px;height:2.0px;background:#8e8e8e;"></div>
<span class="rl" style="left:254px;top:31.3px">29</span>
<div style="left:332.0px;top:42.0px;width:2.0px;height:12.0px;background:#969696;"></div>
<div style="left:332.0px;top:42.0px;width:4.0px;height:2.0px;background:#8e8e8e;"></div>
<span class="rl" style="left:342px;top:31.3px">33</span>
<div style="left:420.0px;top:42.0px;width:2.0px;height:12.0px;background:#969696;"></div>
<div style="left:420.0px;top:42.0px;width:4.0px;height:2.0px;background:#8e8e8e;"></div>
<span class="rl" style="left:430px;top:31.3px">37</span>
<div style="left:508.0px;top:42.0px;width:2.0px;height:12.0px;background:#969696;"></div>
<div style="left:508.0px;top:42.0px;width:4.0px;height:2.0px;background:#8e8e8e;"></div>
<span class="rl" style="left:518px;top:31.3px">41</span>
<div style="left:596.0px;top:42.0px;width:2.0px;height:12.0px;background:#969696;"></div>
<div style="left:596.0px;top:42.0px;width:4.0px;height:2.0px;background:#8e8e8e;"></div>
<span class="rl" style="left:606px;top:31.3px">45</span>
<div style="left:686.0px;top:42.0px;width:2.0px;height:12.0px;background:#969696;"></div>
<div style="left:686.0px;top:42.0px;width:4.0px;height:2.0px;background:#8e8e8e;"></div>
<span class="rl" style="left:696px;top:31.3px">49</span>
<div style="left:774.0px;top:42.0px;width:2.0px;height:12.0px;background:#969696;"></div>
<div style="left:774.0px;top:42.0px;width:4.0px;height:2.0px;background:#8e8e8e;"></div>
<span class="rl" style="left:784px;top:31.3px">53</span>
<div style="left:862.0px;top:42.0px;width:2.0px;height:12.0px;background:#969696;"></div>
<div style="left:862.0px;top:42.0px;width:4.0px;height:2.0px;background:#8e8e8e;"></div>
<span class="rl" style="left:872px;top:31.3px">57</span>
<div style="left:950.0px;top:42.0px;width:2.0px;height:12.0px;background:#969696;"></div>
<div style="left:950.0px;top:42.0px;width:4.0px;height:2.0px;background:#8e8e8e;"></div>
<span class="rl" style="left:960px;top:31.3px">61</span>
<div style="left:1038.0px;top:42.0px;width:2.0px;height:12.0px;background:#969696;"></div>
<div style="left:1038.0px;top:42.0px;width:4.0px;height:2.0px;background:#8e8e8e;"></div>
<span class="rl" style="left:1048px;top:31.3px">65</span>
<div style="left:1128.0px;top:42.0px;width:2.0px;height:12.0px;background:#969696;"></div>
<div style="left:1128.0px;top:42.0px;width:4.0px;height:2.0px;background:#8e8e8e;"></div>
<span class="rl" style="left:1138px;top:31.3px">69</span>
<div style="left:1216.0px;top:42.0px;width:2.0px;height:12.0px;background:#969696;"></div>
<div style="left:1216.0px;top:42.0px;width:4.0px;height:2.0px;background:#8e8e8e;"></div>
<span class="rl" style="left:1226px;top:31.3px">73</span>
<div style="left:1304.0px;top:42.0px;width:2.0px;height:12.0px;background:#969696;"></div>
<div style="left:1304.0px;top:42.0px;width:4.0px;height:2.0px;background:#8e8e8e;"></div>
<span class="rl" style="left:1314px;top:31.3px">77</span>
<div style="left:1392.0px;top:42.0px;width:2.0px;height:12.0px;background:#969696;"></div>
<div style="left:1392.0px;top:42.0px;width:4.0px;height:2.0px;background:#8e8e8e;"></div>
<span class="rl" style="left:1402px;top:31.3px">81</span>
<div style="left:1482.0px;top:42.0px;width:2.0px;height:12.0px;background:#969696;"></div>
<div style="left:1482.0px;top:42.0px;width:4.0px;height:2.0px;background:#8e8e8e;"></div>
<span class="rl" style="left:1492px;top:31.3px">85</span>
<div style="left:1570.0px;top:42.0px;width:2.0px;height:12.0px;background:#969696;"></div>
<div style="left:1570.0px;top:42.0px;width:4.0px;height:2.0px;background:#8e8e8e;"></div>
<span class="rl" style="left:1580px;top:31.3px">89</span>
<div style="left:1658.0px;top:42.0px;width:2.0px;height:12.0px;background:#969696;"></div>
<div style="left:1658.0px;top:42.0px;width:4.0px;height:2.0px;background:#8e8e8e;"></div>
<span class="rl" style="left:1668px;top:31.3px">93</span>
<div style="left:1746.0px;top:42.0px;width:2.0px;height:12.0px;background:#969696;"></div>
<div style="left:1746.0px;top:42.0px;width:4.0px;height:2.0px;background:#8e8e8e;"></div>
<span class="rl" style="left:1756px;top:31.3px">97</span>
<div style="left:1834.0px;top:42.0px;width:2.0px;height:12.0px;background:#969696;"></div>
<div style="left:1834.0px;top:42.0px;width:4.0px;height:2.0px;background:#8e8e8e;"></div>
<span class="rl" style="left:1844px;top:31.3px">101</span>
<div style="left:1924.0px;top:42.0px;width:2.0px;height:12.0px;background:#969696;"></div>
<div style="left:1924.0px;top:42.0px;width:4.0px;height:2.0px;background:#8e8e8e;"></div>
<span class="rl" style="left:1934px;top:31.3px">105</span>
<div style="left:2012.0px;top:42.0px;width:2.0px;height:12.0px;background:#969696;"></div>
<div style="left:2012.0px;top:42.0px;width:4.0px;height:2.0px;background:#8e8e8e;"></div>
<span class="rl" style="left:2022px;top:31.3px">109</span>
<div style="left:2100.0px;top:42.0px;width:2.0px;height:12.0px;background:#969696;"></div>
<div style="left:2100.0px;top:42.0px;width:4.0px;height:2.0px;background:#8e8e8e;"></div>
<span class="rl" style="left:2110px;top:31.3px">113</span>
<div style="left:2188.0px;top:42.0px;width:2.0px;height:12.0px;background:#969696;"></div>
<div style="left:2188.0px;top:42.0px;width:4.0px;height:2.0px;background:#8e8e8e;"></div>
<span class="rl" style="left:2198px;top:31.3px">117</span>
<div style="left:2276.0px;top:42.0px;width:2.0px;height:12.0px;background:#969696;"></div>
<div style="left:2276.0px;top:42.0px;width:4.0px;height:2.0px;background:#8e8e8e;"></div>
<span class="rl" style="left:2286px;top:31.3px">121</span>
<div style="left:2366.0px;top:42.0px;width:2.0px;height:12.0px;background:#969696;"></div>
<div style="left:22.0px;top:52.0px;width:2.0px;height:2.0px;background:#a2a2a2;"></div>
<div style="left:110.0px;top:52.0px;width:2.0px;height:2.0px;background:#a2a2a2;"></div>
<div style="left:198.0px;top:52.0px;width:2.0px;height:2.0px;background:#a2a2a2;"></div>
<div style="left:288.0px;top:52.0px;width:2.0px;height:2.0px;background:#a2a2a2;"></div>
<div style="left:376.0px;top:52.0px;width:2.0px;height:2.0px;background:#a2a2a2;"></div>
<div style="left:464.0px;top:52.0px;width:2.0px;height:2.0px;background:#a2a2a2;"></div>
<div style="left:552.0px;top:52.0px;width:2.0px;height:2.0px;background:#a2a2a2;"></div>
<div style="left:642.0px;top:52.0px;width:2.0px;height:2.0px;background:#a2a2a2;"></div>
<div style="left:730.0px;top:52.0px;width:2.0px;height:2.0px;background:#a2a2a2;"></div>
<div style="left:818.0px;top:52.0px;width:2.0px;height:2.0px;background:#a2a2a2;"></div>
<div style="left:906.0px;top:52.0px;width:2.0px;height:2.0px;background:#a2a2a2;"></div>
<div style="left:994.0px;top:52.0px;width:2.0px;height:2.0px;background:#a2a2a2;"></div>
<div style="left:1084.0px;top:52.0px;width:2.0px;height:2.0px;background:#a2a2a2;"></div>
<div style="left:1172.0px;top:52.0px;width:2.0px;height:2.0px;background:#a2a2a2;"></div>
<div style="left:1260.0px;top:52.0px;width:2.0px;height:2.0px;background:#a2a2a2;"></div>
<div style="left:1348.0px;top:52.0px;width:2.0px;height:2.0px;background:#a2a2a2;"></div>
<div style="left:1436.0px;top:52.0px;width:2.0px;height:2.0px;background:#a2a2a2;"></div>
<div style="left:1526.0px;top:52.0px;width:2.0px;height:2.0px;background:#a2a2a2;"></div>
<div style="left:1614.0px;top:52.0px;width:2.0px;height:2.0px;background:#a2a2a2;"></div>
<div style="left:1702.0px;top:52.0px;width:2.0px;height:2.0px;background:#a2a2a2;"></div>
<div style="left:1790.0px;top:52.0px;width:2.0px;height:2.0px;background:#a2a2a2;"></div>
<div style="left:1880.0px;top:52.0px;width:2.0px;height:2.0px;background:#a2a2a2;"></div>
<div style="left:1968.0px;top:52.0px;width:2.0px;height:2.0px;background:#a2a2a2;"></div>
<div style="left:2056.0px;top:52.0px;width:2.0px;height:2.0px;background:#a2a2a2;"></div>
<div style="left:2144.0px;top:52.0px;width:2.0px;height:2.0px;background:#a2a2a2;"></div>
<div style="left:2232.0px;top:52.0px;width:2.0px;height:2.0px;background:#a2a2a2;"></div>
<div style="left:2322.0px;top:52.0px;width:2.0px;height:2.0px;background:#a2a2a2;"></div>
<div style="left:30.0px;top:1434.0px;width:2.0px;height:4.0px;background:#8c8c8c;"></div>
<div style="left:88.0px;top:1434.0px;width:2.0px;height:4.0px;background:#8c8c8c;"></div>
<div style="left:146.0px;top:1434.0px;width:2.0px;height:15.0px;background:#828282;"></div>
<div style="left:146.0px;top:1447.4px;width:5.0px;height:1.6px;background:#828282;"></div>
<span class="rl" style="left:152px;top:1438.4px;letter-spacing:.5px">0:45</span>
<div style="left:204.0px;top:1434.0px;width:2.0px;height:4.0px;background:#8c8c8c;"></div>
<div style="left:262.0px;top:1434.0px;width:2.0px;height:4.0px;background:#8c8c8c;"></div>
<div style="left:320.0px;top:1434.0px;width:2.0px;height:15.0px;background:#828282;"></div>
<div style="left:320.0px;top:1447.4px;width:5.0px;height:1.6px;background:#828282;"></div>
<span class="rl" style="left:326px;top:1438.4px;letter-spacing:.5px">1:00</span>
<div style="left:378.0px;top:1434.0px;width:2.0px;height:4.0px;background:#8c8c8c;"></div>
<div style="left:436.0px;top:1434.0px;width:2.0px;height:4.0px;background:#8c8c8c;"></div>
<div style="left:494.0px;top:1434.0px;width:2.0px;height:15.0px;background:#828282;"></div>
<div style="left:494.0px;top:1447.4px;width:5.0px;height:1.6px;background:#828282;"></div>
<span class="rl" style="left:500px;top:1438.4px;letter-spacing:.5px">1:15</span>
<div style="left:552.0px;top:1434.0px;width:2.0px;height:4.0px;background:#8c8c8c;"></div>
<div style="left:610.0px;top:1434.0px;width:2.0px;height:4.0px;background:#8c8c8c;"></div>
<div style="left:668.0px;top:1434.0px;width:2.0px;height:15.0px;background:#828282;"></div>
<div style="left:668.0px;top:1447.4px;width:5.0px;height:1.6px;background:#828282;"></div>
<span class="rl" style="left:674px;top:1438.4px;letter-spacing:.5px">1:30</span>
<div style="left:726.0px;top:1434.0px;width:2.0px;height:4.0px;background:#8c8c8c;"></div>
<div style="left:784.0px;top:1434.0px;width:2.0px;height:4.0px;background:#8c8c8c;"></div>
<div style="left:842.0px;top:1434.0px;width:2.0px;height:15.0px;background:#828282;"></div>
<div style="left:842.0px;top:1447.4px;width:5.0px;height:1.6px;background:#828282;"></div>
<span class="rl" style="left:848px;top:1438.4px;letter-spacing:.5px">1:45</span>
<div style="left:900.0px;top:1434.0px;width:2.0px;height:4.0px;background:#8c8c8c;"></div>
<div style="left:958.0px;top:1434.0px;width:2.0px;height:4.0px;background:#8c8c8c;"></div>
<div style="left:1016.0px;top:1434.0px;width:2.0px;height:15.0px;background:#828282;"></div>
<div style="left:1016.0px;top:1447.4px;width:5.0px;height:1.6px;background:#828282;"></div>
<span class="rl" style="left:1022px;top:1438.4px;letter-spacing:.5px">2:00</span>
<div style="left:1074.0px;top:1434.0px;width:2.0px;height:4.0px;background:#8c8c8c;"></div>
<div style="left:1132.0px;top:1434.0px;width:2.0px;height:4.0px;background:#8c8c8c;"></div>
<div style="left:1190.0px;top:1434.0px;width:2.0px;height:15.0px;background:#828282;"></div>
<div style="left:1190.0px;top:1447.4px;width:5.0px;height:1.6px;background:#828282;"></div>
<span class="rl" style="left:1196px;top:1438.4px;letter-spacing:.5px">2:15</span>
<div style="left:1248.0px;top:1434.0px;width:2.0px;height:4.0px;background:#8c8c8c;"></div>
<div style="left:1308.0px;top:1434.0px;width:2.0px;height:4.0px;background:#8c8c8c;"></div>
<div style="left:1366.0px;top:1434.0px;width:2.0px;height:15.0px;background:#828282;"></div>
<div style="left:1366.0px;top:1447.4px;width:5.0px;height:1.6px;background:#828282;"></div>
<span class="rl" style="left:1372px;top:1438.4px;letter-spacing:.5px">2:30</span>
<div style="left:1424.0px;top:1434.0px;width:2.0px;height:4.0px;background:#8c8c8c;"></div>
<div style="left:1482.0px;top:1434.0px;width:2.0px;height:4.0px;background:#8c8c8c;"></div>
<div style="left:1540.0px;top:1434.0px;width:2.0px;height:15.0px;background:#828282;"></div>
<div style="left:1540.0px;top:1447.4px;width:5.0px;height:1.6px;background:#828282;"></div>
<span class="rl" style="left:1546px;top:1438.4px;letter-spacing:.5px">2:45</span>
<div style="left:1598.0px;top:1434.0px;width:2.0px;height:4.0px;background:#8c8c8c;"></div>
<div style="left:1656.0px;top:1434.0px;width:2.0px;height:4.0px;background:#8c8c8c;"></div>
<div style="left:1714.0px;top:1434.0px;width:2.0px;height:15.0px;background:#828282;"></div>
<div style="left:1714.0px;top:1447.4px;width:5.0px;height:1.6px;background:#828282;"></div>
<span class="rl" style="left:1720px;top:1438.4px;letter-spacing:.5px">3:00</span>
<div style="left:1772.0px;top:1434.0px;width:2.0px;height:4.0px;background:#8c8c8c;"></div>
<div style="left:1830.0px;top:1434.0px;width:2.0px;height:4.0px;background:#8c8c8c;"></div>
<div style="left:1888.0px;top:1434.0px;width:2.0px;height:15.0px;background:#828282;"></div>
<div style="left:1888.0px;top:1447.4px;width:5.0px;height:1.6px;background:#828282;"></div>
<span class="rl" style="left:1894px;top:1438.4px;letter-spacing:.5px">3:15</span>
<div style="left:1946.0px;top:1434.0px;width:2.0px;height:4.0px;background:#8c8c8c;"></div>
<div style="left:2004.0px;top:1434.0px;width:2.0px;height:4.0px;background:#8c8c8c;"></div>
<div style="left:2062.0px;top:1434.0px;width:2.0px;height:15.0px;background:#828282;"></div>
<div style="left:2062.0px;top:1447.4px;width:5.0px;height:1.6px;background:#828282;"></div>
<span class="rl" style="left:2068px;top:1438.4px;letter-spacing:.5px">3:30</span>
<div style="left:2120.0px;top:1434.0px;width:2.0px;height:4.0px;background:#8c8c8c;"></div>
<div style="left:2178.0px;top:1434.0px;width:2.0px;height:4.0px;background:#8c8c8c;"></div>
<div style="left:2236.0px;top:1434.0px;width:2.0px;height:15.0px;background:#828282;"></div>
<div style="left:2236.0px;top:1447.4px;width:5.0px;height:1.6px;background:#828282;"></div>
<span class="rl" style="left:2242px;top:1438.4px;letter-spacing:.5px">3:45</span>
<div style="left:2294.0px;top:1434.0px;width:2.0px;height:4.0px;background:#8c8c8c;"></div>
<div style="left:2352.0px;top:1434.0px;width:2.0px;height:4.0px;background:#8c8c8c;"></div>
<div class="c" style="left:2330px;top:1396px;width:58px;height:34px;background:none"><span style="left:6px;top:-2px;font-size:33px;font-weight:700;color:#707070;line-height:35px;letter-spacing:3.5px;-webkit-text-stroke:0">2/1</span></div>
<div class="h" style="left:2400px;top:102px;width:212px;height:34px;background:#5cbfb3;color:#142a27"><span style="left:38.6px">MainVocal 1</span></div>
<svg class="abs" style="left:2403px;top:105px;z-index:4" width="28" height="28"><circle cx="14" cy="14" r="12" fill="none" stroke="#142a27" stroke-width="1.9"/><path d="M10.6 7.9V20.1L20.3 14Z" fill="#142a27"/></svg>
<div class="h" style="left:2400px;top:140px;width:212px;height:34px;background:#4ca3e9;color:#112433"><span style="left:38.6px">MainVocal 2</span></div>
<svg class="abs" style="left:2403px;top:143px;z-index:4" width="28" height="28"><circle cx="14" cy="14" r="12" fill="none" stroke="#112433" stroke-width="1.9"/><path d="M10.6 7.9V20.1L20.3 14Z" fill="#112433"/></svg>
<div class="h" style="left:2400px;top:178px;width:212px;height:34px;background:#347dc3;color:#0b1c2b"><span style="left:38.6px">MainVocal 3</span></div>
<svg class="abs" style="left:2403px;top:181px;z-index:4" width="28" height="28"><circle cx="14" cy="14" r="12" fill="none" stroke="#0b1c2b" stroke-width="1.9"/><path d="M10.6 7.9V20.1L20.3 14Z" fill="#0b1c2b"/></svg>
<div class="h" style="left:2400px;top:216px;width:212px;height:34px;background:#5cbfb3;color:#142a27"><span style="left:38.6px">MainVocal 4</span></div>
<svg class="abs" style="left:2403px;top:219px;z-index:4" width="28" height="28"><circle cx="14" cy="14" r="12" fill="none" stroke="#142a27" stroke-width="1.9"/><path d="M10.6 7.9V20.1L20.3 14Z" fill="#142a27"/></svg>
<div class="h" style="left:2400px;top:254px;width:212px;height:34px;background:#c9a03e;color:#2c230e"><span style="left:38.6px">5 SSVP1 Constru</span></div>
<svg class="abs" style="left:2403px;top:257px;z-index:4" width="28" height="28"><circle cx="14" cy="14" r="12" fill="none" stroke="#2c230e" stroke-width="1.9"/><path d="M10.6 7.9V20.1L20.3 14Z" fill="#2c230e"/></svg>
<div class="h" style="left:2400px;top:292px;width:212px;height:34px;background:#c9a03e;color:#2c230e"><span style="left:38.6px">Reversed Impact</span></div>
<svg class="abs" style="left:2403px;top:295px;z-index:4" width="28" height="28"><circle cx="14" cy="14" r="12" fill="none" stroke="#2c230e" stroke-width="1.9"/><path d="M10.6 7.9V20.1L20.3 14Z" fill="#2c230e"/></svg>
<div class="h" style="left:2400px;top:330px;width:212px;height:34px;background:#cc73e0;color:#2d1931"><span style="left:38.6px">MainVocal 5</span></div>
<svg class="abs" style="left:2403px;top:333px;z-index:4" width="28" height="28"><circle cx="14" cy="14" r="12" fill="none" stroke="#2d1931" stroke-width="1.9"/><path d="M10.6 7.9V20.1L20.3 14Z" fill="#2d1931"/></svg>
<div class="h" style="left:2400px;top:368px;width:212px;height:34px;background:#af7dc7;color:#261c2c"><span style="left:38.6px">Reversed Vocal</span></div>
<svg class="abs" style="left:2403px;top:371px;z-index:4" width="28" height="28"><circle cx="14" cy="14" r="12" fill="none" stroke="#261c2c" stroke-width="1.9"/><path d="M10.6 7.9V20.1L20.3 14Z" fill="#261c2c"/></svg>
<div class="h" style="left:2400px;top:406px;width:212px;height:34px;background:#92a7fb;color:#202537"><span style="left:38.6px">Ambience shot</span></div>
<svg class="abs" style="left:2403px;top:409px;z-index:4" width="28" height="28"><circle cx="14" cy="14" r="12" fill="none" stroke="#202537" stroke-width="1.9"/><path d="M10.6 7.9V20.1L20.3 14Z" fill="#202537"/></svg>
<div class="h" style="left:2400px;top:444px;width:212px;height:34px;background:#af7dc7;color:#261c2c"><span style="left:38.6px">SweepDown</span></div>
<svg class="abs" style="left:2403px;top:447px;z-index:4" width="28" height="28"><circle cx="14" cy="14" r="12" fill="none" stroke="#261c2c" stroke-width="1.9"/><path d="M10.6 7.9V20.1L20.3 14Z" fill="#261c2c"/></svg>
<div class="h" style="left:2400px;top:482px;width:212px;height:34px;background:#f19ca8;color:#352225"><span style="left:38.6px">Ambience  transi</span></div>
<svg class="abs" style="left:2403px;top:485px;z-index:4" width="28" height="28"><circle cx="14" cy="14" r="12" fill="none" stroke="#352225" stroke-width="1.9"/><path d="M10.6 7.9V20.1L20.3 14Z" fill="#352225"/></svg>
<div class="h" style="left:2400px;top:520px;width:212px;height:34px;background:#ea4bcf;color:#33102e"><span style="left:38.6px">Impact</span></div>
<svg class="abs" style="left:2403px;top:523px;z-index:4" width="28" height="28"><circle cx="14" cy="14" r="12" fill="none" stroke="#33102e" stroke-width="1.9"/><path d="M10.6 7.9V20.1L20.3 14Z" fill="#33102e"/></svg>
<div class="h" style="left:2400px;top:558px;width:212px;height:34px;background:#957650;color:#211a12"><span style="left:38.6px">Ambiance 2</span></div>
<svg class="abs" style="left:2403px;top:561px;z-index:4" width="28" height="28"><circle cx="14" cy="14" r="12" fill="none" stroke="#211a12" stroke-width="1.9"/><path d="M10.6 7.9V20.1L20.3 14Z" fill="#211a12"/></svg>
<div class="h" style="left:2400px;top:596px;width:212px;height:70px;background:#8270e0;color:#1d1931"><span style="left:38.6px">Dropbass</span></div>
<svg class="abs" style="left:2403px;top:599px;z-index:4" width="28" height="28"><circle cx="14" cy="14" r="12" fill="none" stroke="#1d1931" stroke-width="1.9"/><path d="M8.2 11.2H19.8L14 20.2Z" fill="#1d1931"/></svg>
<div class="h" style="left:2400px;top:670px;width:212px;height:70px;background:#e6762f;color:#331a0a"><span style="left:36.0px">Group Chords</span></div>
<svg class="abs" style="left:2403px;top:673px;z-index:4" width="28" height="28"><circle cx="14" cy="14" r="12" fill="none" stroke="#331a0a" stroke-width="1.9"/><path d="M7.3 10.6H16.6M10.8 14.2H20.6M10.8 17.8H20.6" stroke="#331a0a" stroke-width="1.9" fill="none"/></svg>
<div class="h" style="left:2410px;top:744px;width:202px;height:34px;background:#e6762f;color:#331a0a"><span style="left:36.3px">Chords1</span></div>
<svg class="abs" style="left:2413px;top:747px;z-index:4" width="28" height="28"><circle cx="14" cy="14" r="12" fill="none" stroke="#331a0a" stroke-width="1.9"/><path d="M10.6 7.9V20.1L20.3 14Z" fill="#331a0a"/></svg>
<div class="h" style="left:2410px;top:782px;width:202px;height:34px;background:#e6762f;color:#331a0a"><span style="left:36.3px">Chords2</span></div>
<svg class="abs" style="left:2413px;top:785px;z-index:4" width="28" height="28"><circle cx="14" cy="14" r="12" fill="none" stroke="#331a0a" stroke-width="1.9"/><path d="M10.6 7.9V20.1L20.3 14Z" fill="#331a0a"/></svg>
<div class="h" style="left:2410px;top:820px;width:202px;height:34px;background:#e6762f;color:#331a0a"><span style="left:36.3px">Chords3</span></div>
<svg class="abs" style="left:2413px;top:823px;z-index:4" width="28" height="28"><circle cx="14" cy="14" r="12" fill="none" stroke="#331a0a" stroke-width="1.9"/><path d="M10.6 7.9V20.1L20.3 14Z" fill="#331a0a"/></svg>
<div class="h" style="left:2410px;top:858px;width:202px;height:70px;background:#e6762f;color:#331a0a"><span style="left:36.3px">Chords4</span></div>
<svg class="abs" style="left:2413px;top:861px;z-index:4" width="28" height="28"><circle cx="14" cy="14" r="12" fill="none" stroke="#331a0a" stroke-width="1.9"/><path d="M8.2 11.2H19.8L14 20.2Z" fill="#331a0a"/></svg>
<div class="h" style="left:2400px;top:932px;width:212px;height:70px;background:#fdf35c;color:#383514"><span style="left:38.6px">DarkBass</span></div>
<svg class="abs" style="left:2403px;top:935px;z-index:4" width="28" height="28"><circle cx="14" cy="14" r="12" fill="none" stroke="#383514" stroke-width="1.9"/><path d="M8.2 11.2H19.8L14 20.2Z" fill="#383514"/></svg>
<div class="h" style="left:2400px;top:1006px;width:212px;height:34px;background:#cc73e0;color:#2d1931"><span style="left:38.6px">Long Sweep Up</span></div>
<svg class="abs" style="left:2403px;top:1009px;z-index:4" width="28" height="28"><circle cx="14" cy="14" r="12" fill="none" stroke="#2d1931" stroke-width="1.9"/><path d="M10.6 7.9V20.1L20.3 14Z" fill="#2d1931"/></svg>
<div class="h" style="left:2400px;top:1044px;width:212px;height:70px;background:#e6762f;color:#331a0a"><span style="left:36.0px">Group Pluck Cho</span></div>
<svg class="abs" style="left:2403px;top:1047px;z-index:4" width="28" height="28"><circle cx="14" cy="14" r="12" fill="none" stroke="#331a0a" stroke-width="1.9"/><path d="M7.3 10.6H16.6M10.8 14.2H20.6M10.8 17.8H20.6" stroke="#331a0a" stroke-width="1.9" fill="none"/></svg>
<div class="h" style="left:2410px;top:1118px;width:202px;height:70px;background:#bde0ec;color:#000"><span style="left:36.3px">Pluck Chords1</span></div>
<svg class="abs" style="left:2413px;top:1121px;z-index:4" width="28" height="28"><circle cx="14" cy="14" r="12" fill="none" stroke="#000" stroke-width="1.9"/><path d="M8.2 11.2H19.8L14 20.2Z" fill="#000"/></svg>
<div class="h" style="left:2410px;top:1192px;width:202px;height:34px;background:#e6762f;color:#331a0a"><span style="left:36.3px">Pluck Chords2</span></div>
<svg class="abs" style="left:2413px;top:1195px;z-index:4" width="28" height="28"><circle cx="14" cy="14" r="12" fill="none" stroke="#331a0a" stroke-width="1.9"/><path d="M10.6 7.9V20.1L20.3 14Z" fill="#331a0a"/></svg>
<div class="h" style="left:2400px;top:1230px;width:212px;height:70px;background:#e6762f;color:#331a0a"><span style="left:38.6px">Pluck Synth</span></div>
<svg class="abs" style="left:2403px;top:1233px;z-index:4" width="28" height="28"><circle cx="14" cy="14" r="12" fill="none" stroke="#331a0a" stroke-width="1.9"/><path d="M8.2 11.2H19.8L14 20.2Z" fill="#331a0a"/></svg>
<div class="h" style="left:2400px;top:1304px;width:212px;height:70px;background:#e6762f;color:#331a0a"><span style="left:38.6px">Perc Layer</span></div>
<svg class="abs" style="left:2403px;top:1307px;z-index:4" width="28" height="28"><circle cx="14" cy="14" r="12" fill="none" stroke="#331a0a" stroke-width="1.9"/><path d="M8.2 11.2H19.8L14 20.2Z" fill="#331a0a"/></svg>
<div class="h" style="left:2400px;top:1378px;width:212px;height:12px;background:#4ca3e9;color:#112433"><span style="left:38.6px">Vocal Drop</span></div>
<div class="abs" style="left:2400px;top:1378px;width:40px;height:12px;overflow:hidden"><svg class="abs" style="left:3px;top:3px;z-index:4" width="28" height="28"><circle cx="14" cy="14" r="12" fill="none" stroke="#112433" stroke-width="1.9"/><path d="M10.6 7.9V20.1L20.3 14Z" fill="#112433"/></svg></div>
<div class="h" style="left:2400px;top:1396px;width:212px;height:34px;background:#957650;color:#211a12"><span style="left:42.6px">Main</span></div>
<svg class="abs" style="left:2403px;top:1399px;z-index:4" width="28" height="28"><circle cx="14" cy="14" r="12" fill="none" stroke="#211a12" stroke-width="1.9"/><path d="M10.6 7.9V20.1L20.3 14Z" fill="#211a12"/></svg>
<div style="left:2400.0px;top:740.0px;width:8.0px;height:188.0px;background:#e6762f;z-index:3"></div>
<div style="left:2408.0px;top:740.0px;width:2.0px;height:188.0px;background:#232323;z-index:3"></div>
<div style="left:2400.0px;top:1114.0px;width:8.0px;height:112.0px;background:#e6762f;z-index:3"></div>
<div style="left:2408.0px;top:1114.0px;width:2.0px;height:112.0px;background:#232323;z-index:3"></div>
<div class="btn" style="left:2406px;top:28px;width:58px;height:26px;border-radius:13px;"><span style="font-weight:700;color:#c9c9c9;letter-spacing:.6px">Set</span></div>
<div class="btn" style="left:2486px;top:28px;width:46px;height:26px;"><svg width="46" height="26" class="abs" style="left:-2px;top:-2px"><path d="M19 17.5L28 8.5" stroke="#c4c4c4" stroke-width="2.2"/><circle cx="19" cy="17.5" r="3" fill="#c4c4c4"/><circle cx="28" cy="8.5" r="3" fill="#c4c4c4"/></svg></div>
<div class="btn" style="left:2540px;top:28px;width:46px;height:26px;background:#de7450"><svg width="46" height="26" class="abs" style="left:-2px;top:-2px"><rect x="16" y="11" width="14" height="9" fill="#000"/><path d="M18.8 11.5V9.6a4.2 4.2 0 0 1 8.4 0V11.5" fill="none" stroke="#000" stroke-width="2"/></svg></div>
<svg class="abs" style="left:2406px;top:64px" width="60" height="26"><circle cx="13" cy="13" r="12.6" fill="#1e1e1e"/><circle cx="45" cy="13" r="12.6" fill="#1e1e1e"/><path d="M6 13L13 8.4V12H20V14H13V17.6Z" fill="#747474"/><path d="M52 13L45 8.4V12H38V14H45V17.6Z" fill="#c4c4c4"/></svg>
<div class="btn" style="left:2400px;top:1442px;width:30px;height:26px;background:#f4b566"><svg width="30" height="26" class="abs" style="left:-2px;top:-2px"><path d="M7 10.5V15.5M11 6.5V19.5M15 4V22M19 6.5V19.5M23 10.5V15.5" stroke="#111" stroke-width="2"/></svg></div>
<div class="btn" style="left:2436px;top:1442px;width:70px;height:26px;"><div class="abs" style="left:0;top:0;width:20px;height:22px;background:#2e7588"></div><span style="left:7px;color:#c4c4c4;text-align:left;width:auto;letter-spacing:.8px">1.00x</span></div>
<div class="btn" style="left:2544px;top:1442px;width:30px;height:26px;"><span style="color:#c4c4c4">H</span></div>
<div class="btn" style="left:2580px;top:1442px;width:30px;height:26px;"><span style="color:#c4c4c4">W</span></div>
</div>
</body></html>
